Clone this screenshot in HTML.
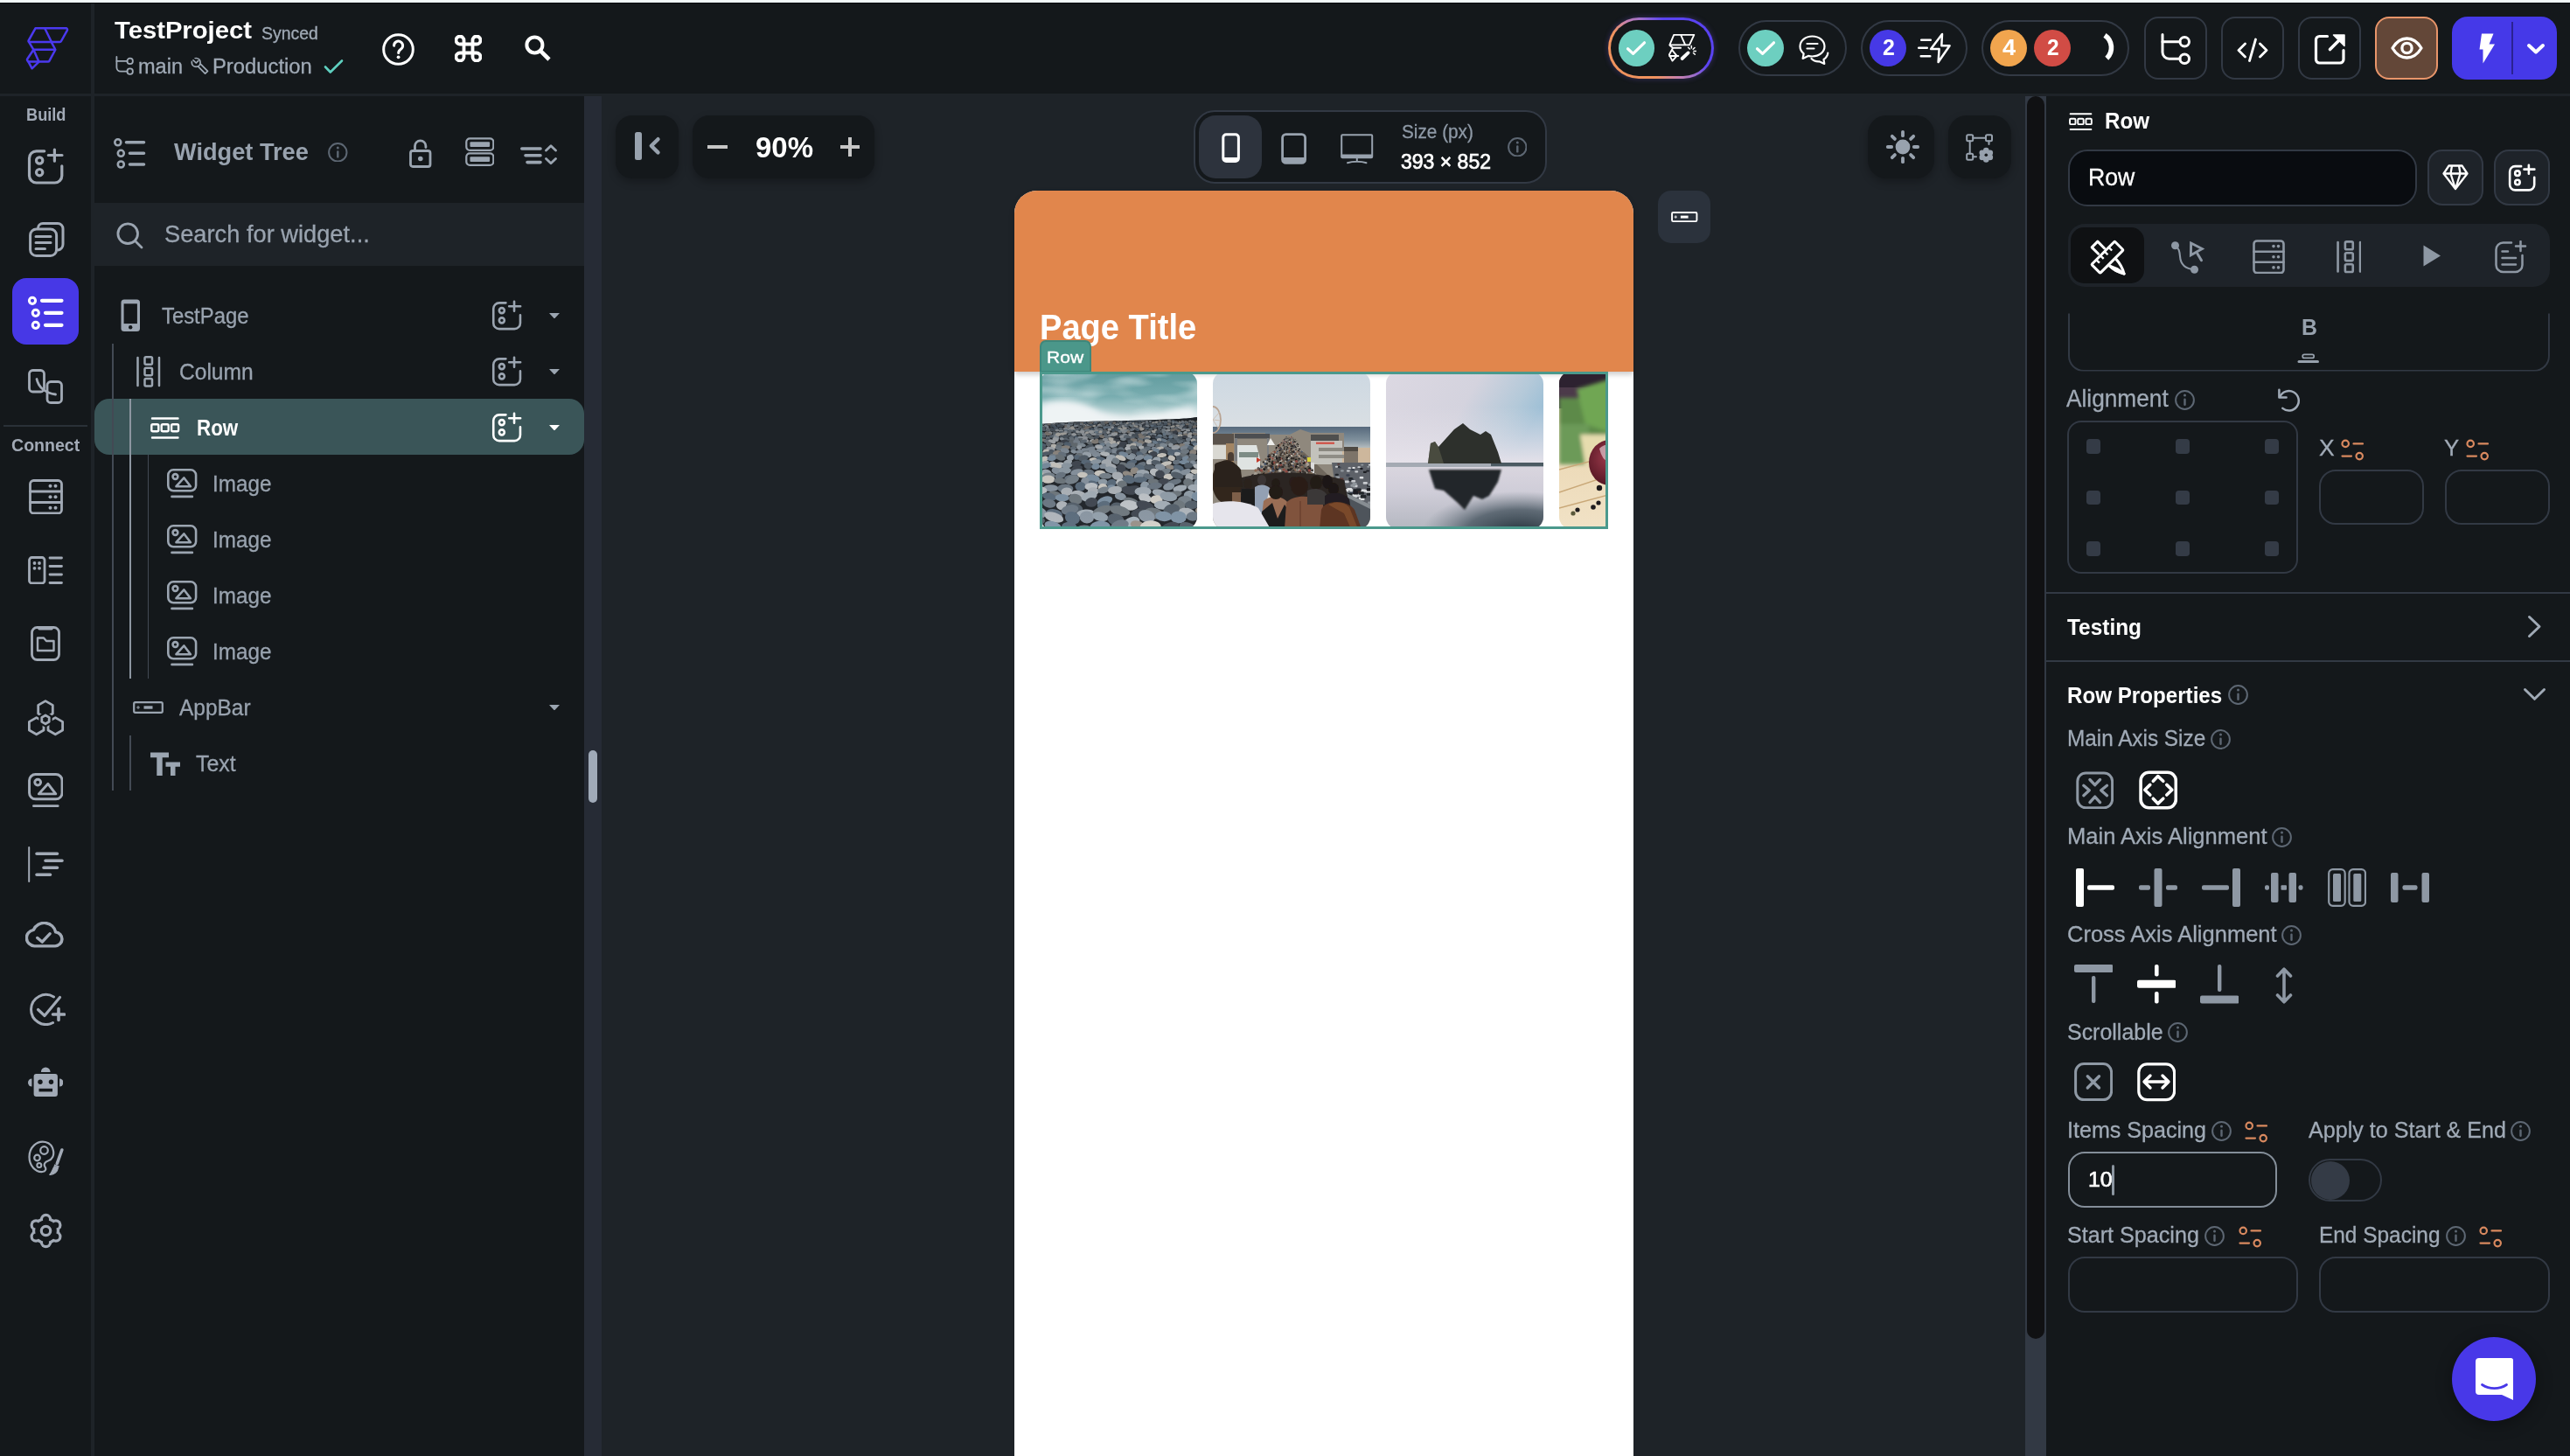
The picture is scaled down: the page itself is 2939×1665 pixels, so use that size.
<!DOCTYPE html>
<html lang="en"><head><meta charset="utf-8"><title>FlutterFlow - TestProject</title>
<style>
html,body{margin:0;padding:0;}
body{width:2939px;height:1665px;overflow:hidden;background:#1e2328;position:relative;font-family:"Liberation Sans",sans-serif;}
.b{position:absolute;box-sizing:border-box;display:block;}
.t{position:absolute;white-space:nowrap;line-height:1;transform-origin:0 50%;}
</style></head>
<body>
<div class="b" style="left:0px;top:0px;width:2939px;height:107px;background:#14181b;"></div>
<div class="b" style="left:0px;top:110px;width:104px;height:1555px;background:#14181b;"></div>
<div class="b" style="left:0px;top:0px;width:104px;height:107px;background:#14181b;"></div>
<div class="b" style="left:104px;top:0px;width:4px;height:107px;background:#1e2328;"></div>
<div class="b" style="left:108px;top:110px;width:560px;height:1555px;background:#14181b;"></div>
<div class="b" style="left:668px;top:110px;width:20px;height:1555px;background:#262b35;"></div>
<div class="b" style="left:2316px;top:110px;width:24px;height:1555px;background:#323944;"></div>
<div class="b" style="left:2340px;top:110px;width:599px;height:1555px;background:#14181b;"></div>
<svg class="b" style="left:0px;top:0px;" width="104" height="107" viewBox="0 0 104 107" fill="none" stroke="#4b39ef" stroke-width="2.5" stroke-linecap="round" stroke-linejoin="round"><path d="M40.5 32.3 H75.5 a1.6 1.6 0 0 1 1.4 2.3 L70 47 a1.8 1.8 0 0 1 -1.6 1 H33.5 a1 1 0 0 1 -0.9 -1.5 Z"/><path d="M51.3 32.5 L58.8 47.8"/><path d="M33.3 48.3 L38.4 56.8 L31.2 67.5 a1.5 1.5 0 0 0 0 1.6 L32.5 70.6 H55 a1.5 1.5 0 0 0 1.3 -0.8 L63 57.5 a1.5 1.5 0 0 0 0 -1.5 L58.8 48.3"/><path d="M38.4 56.8 H63"/><path d="M38.6 57.3 L44.3 70.3"/><path d="M32.6 70.8 L36.6 78.3 L44.3 70.8"/></svg>
<span class="t" style="left:131px;top:21.47px;font-size:28.03px;color:#fff;font-weight:700;transform:scaleX(1.0426);">TestProject</span>
<span class="t" style="left:299.32px;top:28.6px;font-size:19.41px;color:#a0aab6;-webkit-text-stroke:0.3px #a0aab6;transform:scaleX(1.0018);">Synced</span>
<svg class="b" style="left:131.8px;top:63.8px;" width="20.8" height="21.8" viewBox="0 0 20.8 21.8" fill="none" stroke="#a0aab6" stroke-width="1.8" stroke-linecap="round" stroke-linejoin="round"><path d="M1.4 0.9 V13.1 a4.58 4.58 0 0 0 4.58 4.58 H13.45"/><path d="M1.4 5.89 H13.45"/><circle cx="16.68" cy="5.89" r="3.22"/><circle cx="16.68" cy="17.68" r="3.22"/></svg>
<span class="t" style="left:158.16px;top:64.03px;font-size:24.08px;color:#a0aab6;-webkit-text-stroke:0.3px #a0aab6;transform:scaleX(0.9778);">main</span>
<svg class="b" style="left:217.5px;top:64.8px;" width="21" height="20.5" viewBox="0 0 21 20.5" fill="none" stroke="#a0aab6" stroke-width="1.7" stroke-linecap="round" stroke-linejoin="round"><circle cx="6.2" cy="6.4" r="4.9"/><path d="M6.2 6.4 L0.8 1" stroke="#14181b" stroke-width="4.2" stroke-linecap="butt"/><path d="M3 3.8 L6.3 7 L8.9 4.4"/><path d="M8.6 11.2 L16.6 19.2 L19.5 16.3 L11.5 8.3"/></svg>
<span class="t" style="left:243.36px;top:64.03px;font-size:24.08px;color:#a0aab6;-webkit-text-stroke:0.3px #a0aab6;transform:scaleX(0.9880);">Production</span>
<svg class="b" style="left:370px;top:66.5px;" width="23" height="18" viewBox="0 0 23 18" fill="none" stroke="#5fd0c0" stroke-width="2.6" stroke-linecap="round" stroke-linejoin="round"><path d="M2 9.5 L7.8 15.5 L21 2.5"/></svg>
<svg class="b" style="left:437px;top:38px;" width="37" height="37" viewBox="0 0 37 37" fill="none" stroke="#fff" stroke-width="3" stroke-linecap="round" stroke-linejoin="round"><circle cx="18.5" cy="18.5" r="16.8"/><path d="M13.6 14.2 a5 5 0 1 1 7.8 4.1 c-1.8 1.2 -2.7 2 -2.7 4.2"/><circle cx="18.6" cy="27.3" r="1.9" fill="#fff" stroke="none"/></svg>
<svg class="b" style="left:520.2px;top:39.7px;" width="31" height="31" viewBox="0 0 31 31" fill="none" stroke="#fff" stroke-width="3.8" stroke-linecap="round" stroke-linejoin="round"><path d="M10.5 10.5 H20.5 V20.5 H10.5 Z"/><path d="M10.5 10.5 H6.5 a4.5 4.5 0 1 1 4 -4.5 Z"/><path d="M20.5 10.5 V6 a4.5 4.5 0 1 1 4.5 4.5 Z"/><path d="M20.5 20.5 H25 a4.5 4.5 0 1 1 -4.5 4.5 Z"/><path d="M10.5 20.5 V25 a4.5 4.5 0 1 1 -4.5 -4.5 Z"/></svg>
<svg class="b" style="left:600.3px;top:39.8px;" width="30" height="30" viewBox="0 0 30 30" fill="none" stroke="#fff" stroke-width="4" stroke-linecap="round" stroke-linejoin="round"><circle cx="11.4" cy="11.4" r="9"/><path d="M17.8 17.8 L28 28" stroke-width="4.6" stroke-linecap="butt"/></svg>
<div class="b" style="left:1838.5px;top:20.3px;width:121.8px;height:69.6px;border-radius:35px;background:linear-gradient(#14181b,#14181b) padding-box,linear-gradient(47deg,#f0935e 30%,#c681b0 44%,#a070c8 54%,#5a43f2 68%) border-box;border:3px solid transparent;box-shadow:0 0 6px rgba(120,90,230,.35);"></div>
<div class="b" style="left:1850.7px;top:34.4px;width:41.2px;height:41.2px;background:#6dcfc0;border-radius:21px;"></div>
<svg class="b" style="left:1859.3px;top:46px;" width="24" height="18" viewBox="0 0 24 18" fill="none" stroke="#fff" stroke-width="3.2" stroke-linecap="round" stroke-linejoin="round"><path d="M2.5 9.8 L8.6 15.4 L21.5 2.8"/></svg>
<div class="b" style="left:1998.4px;top:34.4px;width:41.2px;height:41.2px;background:#6dcfc0;border-radius:21px;"></div>
<svg class="b" style="left:2007px;top:46px;" width="24" height="18" viewBox="0 0 24 18" fill="none" stroke="#fff" stroke-width="3.2" stroke-linecap="round" stroke-linejoin="round"><path d="M2.5 9.8 L8.6 15.4 L21.5 2.8"/></svg>
<svg class="b" style="left:1907.9px;top:38.7px;" width="32.5" height="32" viewBox="0 0 32.5 32" fill="none" stroke="#fff" stroke-width="1.9" stroke-linecap="round" stroke-linejoin="round"><path d="M6.2 0.9 H29.3 L24 12.4 H1.4 Z M14.1 0.9 L19.2 12.4"/><path d="M1.7 13 L5.1 15.8 H14.1 M5.1 15.8 L0.9 23.5 L4.5 30.6 L9.6 24.8 L4.5 18.6 M1.1 25 H11.3"/><path d="M15.6 28 L22.6 21.4" stroke-width="3.8"/><path d="M26.3 13.5 v2.6 M30 15.5 l-1.8 1.8 M31.5 19.4 h-2.6 M30.3 23.3 l-1.8 -1.8 M22.6 15.2 l1.8 1.8" stroke-width="1.5"/></svg>
<div class="b" style="left:1988px;top:23px;width:123.5px;height:63.5px;border-radius:32px;border:2px solid #323944;"></div>
<svg class="b" style="left:2057px;top:39.5px;" width="36" height="34" viewBox="0 0 36 34" fill="none" stroke="#fff" stroke-width="2.2" stroke-linecap="round" stroke-linejoin="round"><path d="M15.5 1.5 C7.5 1.5 1.5 6.5 1.5 13 c0 3.3 1.6 6.2 4.2 8.3 L4.6 27 l6.3 -3.1 c1.5 .4 3 .6 4.6 .6 c8 0 14 -5 14 -11.5 S23.500 1.5 15.500 1.500 Z"/><path d="M9.500 10 H21.500 M9.500 15.500 H17.500" /><path d="M14.500 27 c2 2.300 5.300 3.500 9 3.300 l5.800 2.600 l-0.800 -5 c2.800 -1.800 4.500 -4.300 4.800 -7.300"/></svg>
<div class="b" style="left:2128px;top:23px;width:121.8px;height:63.5px;border-radius:32px;border:2px solid #323944;"></div>
<div class="b" style="left:2138px;top:34px;width:42px;height:42px;background:#4639e6;border-radius:21px;"></div>
<span class="t" style="left:2153px;top:42.04px;font-size:25.95px;color:#fff;font-weight:700;transform:scaleX(0.9585);">2</span>
<svg class="b" style="left:2193px;top:37px;" width="38.5" height="36" viewBox="0 0 38.5 36" fill="none" stroke="#fff" stroke-width="2.5" stroke-linecap="round" stroke-linejoin="round"><path d="M28 2 L15.1 18.9 H24.6 L23.6 34 L36.6 15.3 H27.3 Z"/><path d="M4.2 8.700 H14.800 M1.200 17.800 H10.800 M3.700 27.300 H14.300"/></svg>
<div class="b" style="left:2266px;top:23px;width:169px;height:63.5px;border-radius:32px;border:2px solid #323944;"></div>
<div class="b" style="left:2276px;top:34px;width:42px;height:42px;background:#f1a54e;border-radius:21px;"></div>
<span class="t" style="left:2289.8px;top:42.04px;font-size:25.95px;color:#fff;font-weight:700;transform:scaleX(1.0485);">4</span>
<div class="b" style="left:2326px;top:34px;width:42px;height:42px;background:#d14c45;border-radius:21px;"></div>
<span class="t" style="left:2340.8px;top:42.04px;font-size:25.95px;color:#fff;font-weight:700;transform:scaleX(0.9446);">2</span>
<svg class="b" style="left:0;top:0" width="2939" height="107" fill="none" stroke="#fff" stroke-width="5.6"><path d="M2407.0 40.4 A17 17 0 0 1 2409.3 66.7"/></svg>
<div class="b" style="left:2452px;top:18.8px;width:72px;height:72px;border-radius:16px;border:2px solid #323944;"></div>
<div class="b" style="left:2540px;top:18.8px;width:72px;height:72px;border-radius:16px;border:2px solid #323944;"></div>
<div class="b" style="left:2628px;top:18.8px;width:72px;height:72px;border-radius:16px;border:2px solid #323944;"></div>
<div class="b" style="left:2716px;top:18.8px;width:72px;height:72px;background:#634738;border-radius:16px;border:2.5px solid #e8956a;"></div>
<div class="b" style="left:2804px;top:18.8px;width:120px;height:72px;background:#4539e8;border-radius:18px;"></div>
<div class="b" style="left:2872px;top:25px;width:2px;height:60px;background:#2a2292;"></div>
<svg class="b" style="left:2470.5px;top:37.8px;" width="34" height="36" viewBox="0 0 34 36" fill="none" stroke="#fff" stroke-width="3" stroke-linecap="round" stroke-linejoin="round"><path d="M2 1.5 V21.75 a7.48 7.48 0 0 0 7.48 7.48 H21.96"/><path d="M2 9.72 H21.96"/><circle cx="27.23" cy="9.72" r="5.27"/><circle cx="27.23" cy="29.23" r="5.27"/></svg>
<svg class="b" style="left:2558px;top:42.5px;" width="36" height="28" viewBox="0 0 36 28" fill="none" stroke="#fff" stroke-width="2.8" stroke-linecap="round" stroke-linejoin="round"><path d="M9.500 7 L2 14.500 L9.500 22 M26.500 7 L34 14.500 L26.500 22 M21.500 2 L14.500 26.500"/></svg>
<svg class="b" style="left:2645.5px;top:37.5px;" width="37" height="37" viewBox="0 0 37 37" fill="none" stroke="#fff" stroke-width="3.2" stroke-linecap="round" stroke-linejoin="round"><path d="M15.500 3.500 H6.500 a4 4 0 0 0 -4 4 V30 a4 4 0 0 0 4 4 H30 a4 4 0 0 0 4 -4 V19.500"/><path d="M18.500 18.500 L32 5" stroke-width="3.6"/><path d="M22.500 2 H35 V14.500 Z" fill="#fff" stroke-width="1.5"/></svg>
<svg class="b" style="left:2733.5px;top:41.5px;" width="37" height="26" viewBox="0 0 37 26" fill="none" stroke="#fff" stroke-width="3.3" stroke-linecap="round" stroke-linejoin="round"><path d="M2 13 C6.500 5.500 12 2 18.500 2 S30.500 5.500 35 13 C30.500 20.500 25 24 18.500 24 S6.500 20.500 2 13 Z"/><circle cx="18.500" cy="13" r="5.600"/></svg>
<svg class="b" style="left:2833px;top:37.5px;" width="22" height="35" viewBox="0 0 22 35" fill="none" stroke="#fff" stroke-width="0" stroke-linecap="round" stroke-linejoin="round"><path d="M5 0.500 H18.500 L13.500 12.500 H20 L6.500 34.500 V18.500 H2.500 Z" fill="#fff" stroke="none"/></svg>
<svg class="b" style="left:2889.5px;top:50px;overflow:visible;" width="20" height="11.5" viewBox="0 0 20 11.5" fill="none" stroke="#fff" stroke-width="4" stroke-linecap="round" stroke-linejoin="round"><path d="M2 2 L10 9.5 L18 2"/></svg>
<span class="t" style="left:29.7px;top:121.72px;font-size:19.51px;color:#a2aab6;font-weight:700;transform:scaleX(0.9329);">Build</span>
<svg class="b" style="left:31.8px;top:170px;overflow:visible;" width="40.5" height="40.5" viewBox="0 0 40 40" fill="none" stroke="#a2aab6" stroke-width="3.16" stroke-linecap="round" stroke-linejoin="round"><path d="M18.5 2.8 H9.5 a8 8 0 0 0 -8 8 V30.5 a8 8 0 0 0 8 8 H30.3 a8 8 0 0 0 8 -8 V19.5"/><path d="M30 1 V14 M23 7.400 H38.500"/><circle cx="13" cy="13.300" r="3.600"/><circle cx="13" cy="26.800" r="3.600"/></svg>
<svg class="b" style="left:33px;top:253.8px;" width="41" height="40.5" viewBox="0 0 41 40.5" fill="none" stroke="#a2aab6" stroke-width="3" stroke-linecap="round" stroke-linejoin="round"><path d="M10.500 7.500 V7 a5.500 5.500 0 0 1 5.500 -5.500 H33 a6 6 0 0 1 6 6 V25 a7 7 0 0 1 -5.500 7"/><rect x="1.600" y="8" width="30" height="30.500" rx="7"/><path d="M8 16.500 H25 M8 23.500 H25 M8 30.500 H18.500"/></svg>
<div class="b" style="left:14px;top:318px;width:76px;height:76px;background:#4738e6;border-radius:16px;"></div>
<svg class="b" style="left:14px;top:318px;" width="76" height="76" viewBox="0 0 76 76" fill="none" stroke="#fff" stroke-width="3" stroke-linecap="round" stroke-linejoin="round"><circle cx="23" cy="25.800" r="3.600"/><circle cx="26.800" cy="39.800" r="3.600"/><circle cx="26.800" cy="53.800" r="3.600"/><path d="M34 25.800 H56.500 M38 39.800 H56.500 M38 53.800 H56.500" stroke-width="4.200"/></svg>
<svg class="b" style="left:32px;top:422.3px;" width="40.5" height="40.5" viewBox="0 0 40.5 40.5" fill="none" stroke="#a2aab6" stroke-width="2.8" stroke-linecap="round" stroke-linejoin="round"><rect x="1.500" y="1.500" width="17" height="24.500" rx="4"/><rect x="22" y="14.500" width="16.500" height="24" rx="4"/><path d="M10 11.500 C12 21 20 27.500 31.500 29"/></svg>
<div class="b" style="left:4px;top:486px;width:96px;height:2px;background:#2a3138;"></div>
<span class="t" style="left:13.2px;top:500.49px;font-size:19.31px;color:#a2aab6;font-weight:700;transform:scaleX(1.0139);">Connect</span>
<svg class="b" style="left:32.8px;top:547.8px;" width="39" height="40.5" viewBox="0 0 39 40.5" fill="none" stroke="#a2aab6" stroke-width="2.8" stroke-linecap="round" stroke-linejoin="round"><rect x="1.500" y="1.500" width="36" height="37.500" rx="4"/><path d="M1.500 14 H37.500 M1.500 26.500 H37.500"/><g fill="#a2aab6" stroke="none"><circle cx="24.500" cy="7.800" r="2"/><circle cx="30.500" cy="7.800" r="2"/><circle cx="24.500" cy="20.200" r="2"/><circle cx="30.500" cy="20.200" r="2"/><circle cx="24.500" cy="32.800" r="2"/><circle cx="30.500" cy="32.800" r="2"/></g></svg>
<svg class="b" style="left:32px;top:635.5px;" width="40.5" height="32.5" viewBox="0 0 40.5 32.5" fill="none" stroke="#a2aab6" stroke-width="2.8" stroke-linecap="round" stroke-linejoin="round"><rect x="1.500" y="1.500" width="17.500" height="29.500" rx="3"/><g fill="#a2aab6" stroke="none"><circle cx="7.500" cy="8" r="1.900"/><circle cx="13" cy="8" r="1.900"/><circle cx="7.500" cy="13.800" r="1.900"/><circle cx="13" cy="13.800" r="1.900"/></g><path d="M25 2 H38.500 M25 11.500 H38.500 M25 21 H38.500 M25 30.500 H38.500"/></svg>
<svg class="b" style="left:35px;top:716px;" width="34" height="40" viewBox="0 0 34 40" fill="none" stroke="#a2aab6" stroke-width="2.8" stroke-linecap="round" stroke-linejoin="round"><rect x="1.500" y="1.500" width="31" height="37" rx="6"/><path d="M10 2.800 H24" stroke-width="3.600"/><path d="M8 13.500 H15 L18 17 H26.500 V28 H8 Z" stroke-width="2.400"/></svg>
<svg class="b" style="left:31.8px;top:799.5px;" width="41.5" height="42" viewBox="0 0 41.5 42" fill="none" stroke="#a2aab6" stroke-width="2.8" stroke-linecap="round" stroke-linejoin="round"><polygon points="20.0,1.6 28.3,6.4 28.3,16.0 20.0,20.8 11.7,16.0 11.7,6.4"/><polygon points="9.7,20.6 18.0,25.4 18.0,35.0 9.7,39.8 1.4,35.0 1.4,25.4"/><polygon points="31.3,20.6 39.6,25.4 39.6,35.0 31.3,39.8 23.0,35.0 23.0,25.4"/><polygon points="20.0,18.0 24.2,20.4 24.2,25.3 20.0,27.8 15.8,25.4 15.8,20.4" fill="#14181b" stroke="#14181b" stroke-width="7"/><polygon points="20.0,18.0 24.2,20.4 24.2,25.3 20.0,27.8 15.8,25.4 15.8,20.4" fill="#14181b"/></svg>
<svg class="b" style="left:31.8px;top:884.2px;" width="40.6" height="39.42" viewBox="0 0 34.5 33.5" fill="none" stroke="#a2aab6" stroke-width="2.5" stroke-linecap="round" stroke-linejoin="round"><rect x="1.3" y="1.3" width="31.9" height="24" rx="6"/><circle cx="9.5" cy="9" r="2.9"/><path d="M10.5 20.3 L19.5 10.5 L27 20.3 Z"/><path d="M5.5 32 H29"/></svg>
<svg class="b" style="left:31.5px;top:967.5px;" width="41" height="41" viewBox="0 0 41 41" fill="none" stroke="#a2aab6" stroke-width="3" stroke-linecap="round" stroke-linejoin="round"><path d="M1.200 1 V40" stroke-width="2"/><path d="M10 8.200 H33.500 M20 16.300 H39 M18 24.200 H33.500 M10 32.300 H25.500" stroke-width="3.600"/></svg>
<svg class="b" style="left:29.2px;top:1054.3px;" width="46" height="31" viewBox="0 0 46 31" fill="none" stroke="#a2aab6" stroke-width="3.2" stroke-linecap="round" stroke-linejoin="round"><g transform="translate(-2.2,-0.8) scale(1.1,1.04)"><path d="M11.500 27.500 a9 9 0 0 1 -1 -17.800 a12 12 0 0 1 23 2.500 a7.700 7.700 0 0 1 -0.500 15.300 Z"/><path d="M14.500 18.500 L19.500 23 L27.500 14" stroke-width="3.200"/></g></svg>
<svg class="b" style="left:33.5px;top:1135px;" width="41.5" height="38" viewBox="0 0 41.5 38" fill="none" stroke="#a2aab6" stroke-width="3" stroke-linecap="round" stroke-linejoin="round"><path d="M27.500 5 a17 17 0 1 0 -1 29.500"/><path d="M9.500 19.500 L17 26.500 L34.500 5.500" stroke-width="3.200"/><path d="M33 18.500 V31.500 M26.500 25 H39.500" stroke-width="3.600"/></svg>
<svg class="b" style="left:31.8px;top:1219.5px;" width="40.5" height="36.5" viewBox="0 0 40.5 36.5" fill="none" stroke="#a2aab6" stroke-width="0" stroke-linecap="round" stroke-linejoin="round"><g fill="#a2aab6" stroke="none"><circle cx="20.200" cy="5.800" r="5.300"/><circle cx="4.500" cy="18" r="4.500"/><circle cx="36" cy="18" r="4.500"/></g><rect x="5.500" y="7" width="29.500" height="28" rx="4" fill="#a2aab6" stroke="#14181b" stroke-width="2.200"/><g fill="#14181b" stroke="none"><circle cx="14" cy="17.300" r="2.700"/><circle cx="26.500" cy="17.300" r="2.700"/><rect x="12.500" y="24.800" width="15.500" height="3.600"/></g></svg>
<svg class="b" style="left:31.5px;top:1303.5px;" width="41" height="41" viewBox="0 0 41 41" fill="none" stroke="#a2aab6" stroke-width="2.2" stroke-linecap="round" stroke-linejoin="round"><path d="M20 2 C10 0 1.500 8 1.500 19 C1.500 29 8.500 36.500 16.500 36 c4 -0.300 4.500 -3.500 3 -5.500 c-2 -3 0 -6 3.500 -7 C28 22 30 17 29 12 C28 6.500 24.500 3 20 2 Z" stroke-width="2.200"/><circle cx="18.500" cy="11.500" r="4.300" stroke-width="2.200"/><circle cx="10.500" cy="20" r="3.300" stroke-width="2.200"/><circle cx="12.800" cy="28.500" r="2.500" stroke-width="2"/><path d="M38.800 11 L33.300 26.500" stroke-width="3.600"/><path d="M30.500 28.300 L35 30" stroke-width="1.500"/><path d="M30.300 29.500 L34.500 31 C34 36 30 39.500 24.800 39.300 C27.500 37 27.800 33 30.300 29.500 Z" fill="#a2aab6" stroke-width="1.200"/></svg>
<svg class="b" style="left:31.7px;top:1387.3px;" width="41" height="41" viewBox="0 0 41 41" fill="none" stroke="#a2aab6" stroke-width="3" stroke-linecap="round" stroke-linejoin="round"><circle cx="20.500" cy="20.500" r="15.6" fill="#a2aab6" stroke="none"/><circle cx="20.5" cy="33.7" r="6.6" fill="#a2aab6" stroke="none"/><circle cx="9.1" cy="27.1" r="6.6" fill="#a2aab6" stroke="none"/><circle cx="9.1" cy="13.9" r="6.6" fill="#a2aab6" stroke="none"/><circle cx="20.5" cy="7.3" r="6.6" fill="#a2aab6" stroke="none"/><circle cx="31.9" cy="13.9" r="6.6" fill="#a2aab6" stroke="none"/><circle cx="31.9" cy="27.1" r="6.6" fill="#a2aab6" stroke="none"/><circle cx="20.500" cy="20.500" r="12.3" fill="#14181b" stroke="none"/><circle cx="20.5" cy="33.5" r="3.5" fill="#14181b" stroke="none"/><circle cx="9.2" cy="27.0" r="3.5" fill="#14181b" stroke="none"/><circle cx="9.2" cy="14.0" r="3.5" fill="#14181b" stroke="none"/><circle cx="20.5" cy="7.5" r="3.5" fill="#14181b" stroke="none"/><circle cx="31.8" cy="14.0" r="3.5" fill="#14181b" stroke="none"/><circle cx="31.8" cy="27.0" r="3.5" fill="#14181b" stroke="none"/><circle cx="20.500" cy="20.500" r="5.200" stroke-width="3.200"/></svg>
<svg class="b" style="left:129.6px;top:158.4px;" width="37" height="35" viewBox="0 0 37 35" fill="none" stroke="#9ba5b1" stroke-width="2.6" stroke-linecap="round" stroke-linejoin="round"><circle cx="4.800" cy="4.800" r="3.500"/><circle cx="8.300" cy="17.300" r="3.500"/><circle cx="8.300" cy="30" r="3.500"/><path d="M14.500 4.800 H34.500 M18.500 17.300 H34.500 M18.500 30 H34.500" stroke-width="3.600"/></svg>
<span class="t" style="left:199px;top:160.25px;font-size:27.82px;color:#99a3af;font-weight:700;transform:scaleX(0.9773);">Widget Tree</span>
<svg class="b" style="left:375px;top:162.7px;" width="22.6" height="22.6" viewBox="0 0 22.6 22.6" fill="none" stroke="#5d6773" stroke-width="2" stroke-linecap="round" stroke-linejoin="round"><circle cx="11.3" cy="11.3" r="10.2"/><path d="M11.3 10.5 v5.88" stroke-width="2.4"/><circle cx="11.3" cy="5.88" r="1.5" fill="#5d6773" stroke="none"/></svg>
<svg class="b" style="left:468.4px;top:158.7px;" width="25.5" height="33.5" viewBox="0 0 25.5 33.5" fill="none" stroke="#9ba5b1" stroke-width="2.8" stroke-linecap="round" stroke-linejoin="round"><rect x="1.500" y="13.500" width="22.500" height="18" rx="2.500"/><path d="M6.500 13.500 V8 a6.200 6.200 0 0 1 12.400 0 V9.500"/><circle cx="12.800" cy="22.500" r="2.800" fill="#9ba5b1" stroke="none"/></svg>
<svg class="b" style="left:531.6px;top:157.3px;" width="33.6" height="33.2" viewBox="0 0 33.6 33.2" fill="none" stroke="#9ba5b1" stroke-width="2.2" stroke-linecap="round" stroke-linejoin="round"><rect x="1.300" y="1.300" width="31" height="13.600" rx="4"/><rect x="1.300" y="18.300" width="31" height="13.600" rx="4"/><rect x="5.500" y="5.300" width="22.600" height="5.600" rx="1" fill="#9ba5b1" stroke="none"/><rect x="5.500" y="22.300" width="22.600" height="5.600" rx="1" fill="#9ba5b1" stroke="none"/></svg>
<svg class="b" style="left:595.3px;top:164.6px;" width="42.5" height="24" viewBox="0 0 42.5 24" fill="none" stroke="#9ba5b1" stroke-width="3" stroke-linecap="round" stroke-linejoin="round"><path d="M1.800 5 H23 M6 12.800 H23 M8 20.600 H23" stroke-width="3.600"/><path d="M29.500 7 L35 1.800 L40.500 7 M29.500 16.500 L35 21.800 L40.500 16.500" stroke-width="2.800"/></svg>
<div class="b" style="left:108px;top:232px;width:560px;height:72px;background:#1e2328;"></div>
<svg class="b" style="left:132.5px;top:254px;" width="31" height="31" viewBox="0 0 31 31" fill="none" stroke="#9ba5b1" stroke-width="2.8" stroke-linecap="round" stroke-linejoin="round"><circle cx="13.200" cy="13.200" r="11.300"/><path d="M21.500 21.500 L29 29"/></svg>
<span class="t" style="left:187.8px;top:253.33px;font-size:28.55px;color:#99a3af;-webkit-text-stroke:0.3px #99a3af;transform:scaleX(0.9548);">Search for widget...</span>
<div class="b" style="left:108px;top:456px;width:560px;height:64px;background:#3a5558;border-radius:17px;"></div>
<div class="b" style="left:128.3px;top:392.5px;width:1.6px;height:511.5px;background:#434a54;"></div>
<div class="b" style="left:148px;top:456px;width:1.8px;height:320px;background:#8d96a1;"></div>
<div class="b" style="left:168.5px;top:520px;width:1.6px;height:256px;background:#434a54;"></div>
<div class="b" style="left:148.2px;top:840.5px;width:1.6px;height:63.5px;background:#434a54;"></div>
<svg class="b" style="left:138px;top:341.5px;" width="22.5" height="37.5" viewBox="0 0 22.5 37.5" fill="none" stroke="#9ba5b1" stroke-width="0" stroke-linecap="round" stroke-linejoin="round"><rect x="0.500" y="0.500" width="21.500" height="36.500" rx="3.500" fill="#9ba5b1" stroke="none"/><rect x="3.600" y="5.300" width="15.300" height="22.800" fill="#14181b" stroke="none"/><circle cx="11.200" cy="32.300" r="2.200" fill="#14181b" stroke="none"/></svg>
<span class="t" style="left:185.41px;top:348.78px;font-size:25.43px;color:#99a3af;-webkit-text-stroke:0.3px #99a3af;transform:scaleX(0.9383);">TestPage</span>
<svg class="b" style="left:156.3px;top:407.2px;" width="27.5" height="36" viewBox="0 0 27.5 36" fill="none" stroke="#9ba5b1" stroke-width="2.5" stroke-linecap="round" stroke-linejoin="round"><path d="M1.5 2 V34 M26 2 V34"/><rect x="9.5" y="1.3" width="8.5" height="8.5" rx="1.5"/><rect x="9.5" y="13.7" width="8.5" height="8.5" rx="1.5"/><rect x="9.5" y="26.1" width="8.5" height="8.5" rx="1.5"/></svg>
<span class="t" style="left:204.61px;top:412.78px;font-size:25.43px;color:#99a3af;-webkit-text-stroke:0.3px #99a3af;transform:scaleX(0.9664);">Column</span>
<svg class="b" style="left:172px;top:476.8px;" width="33.5" height="25" viewBox="0 0 33.5 25" fill="none" stroke="#fff" stroke-width="2.4" stroke-linecap="round" stroke-linejoin="round"><path d="M2 1.5 H31.5 M2 23.5 H31.5"/><rect x="1.3" y="8.3" width="8" height="8" rx="1.5"/><rect x="12.7" y="8.3" width="8" height="8" rx="1.5"/><rect x="24.1" y="8.3" width="8" height="8" rx="1.5"/></svg>
<span class="t" style="left:224.7px;top:476.78px;font-size:25.43px;color:#fff;font-weight:700;transform:scaleX(0.8797);">Row</span>
<svg class="b" style="left:563.2px;top:344.1px;overflow:visible;" width="33.4" height="33.4" viewBox="0 0 40 40" fill="none" stroke="#9ba5b1" stroke-width="3.11" stroke-linecap="round" stroke-linejoin="round"><path d="M18.5 2.8 H9.5 a8 8 0 0 0 -8 8 V30.5 a8 8 0 0 0 8 8 H30.3 a8 8 0 0 0 8 -8 V19.5"/><path d="M30 1 V14 M23 7.400 H38.500"/><circle cx="13" cy="13.300" r="3.600"/><circle cx="13" cy="26.800" r="3.600"/></svg>
<svg class="b" style="left:627.8px;top:357.7px;" width="12" height="6.5" viewBox="0 0 12 6.5" fill="none" stroke="#9ba5b1" stroke-width="0" stroke-linecap="round" stroke-linejoin="round"><path d="M0 0 H12 L6 6.5 Z" fill="#9ba5b1" stroke="none"/></svg>
<svg class="b" style="left:563.2px;top:408.1px;overflow:visible;" width="33.4" height="33.4" viewBox="0 0 40 40" fill="none" stroke="#9ba5b1" stroke-width="3.11" stroke-linecap="round" stroke-linejoin="round"><path d="M18.5 2.8 H9.5 a8 8 0 0 0 -8 8 V30.5 a8 8 0 0 0 8 8 H30.3 a8 8 0 0 0 8 -8 V19.5"/><path d="M30 1 V14 M23 7.400 H38.500"/><circle cx="13" cy="13.300" r="3.600"/><circle cx="13" cy="26.800" r="3.600"/></svg>
<svg class="b" style="left:627.8px;top:421.7px;" width="12" height="6.5" viewBox="0 0 12 6.5" fill="none" stroke="#9ba5b1" stroke-width="0" stroke-linecap="round" stroke-linejoin="round"><path d="M0 0 H12 L6 6.5 Z" fill="#9ba5b1" stroke="none"/></svg>
<svg class="b" style="left:563.2px;top:472.1px;overflow:visible;" width="33.4" height="33.4" viewBox="0 0 40 40" fill="none" stroke="#fff" stroke-width="3.11" stroke-linecap="round" stroke-linejoin="round"><path d="M18.5 2.8 H9.5 a8 8 0 0 0 -8 8 V30.5 a8 8 0 0 0 8 8 H30.3 a8 8 0 0 0 8 -8 V19.5"/><path d="M30 1 V14 M23 7.400 H38.500"/><circle cx="13" cy="13.300" r="3.600"/><circle cx="13" cy="26.800" r="3.600"/></svg>
<svg class="b" style="left:627.8px;top:485.7px;" width="12" height="6.5" viewBox="0 0 12 6.5" fill="none" stroke="#fff" stroke-width="0" stroke-linecap="round" stroke-linejoin="round"><path d="M0 0 H12 L6 6.5 Z" fill="#fff" stroke="none"/></svg>
<svg class="b" style="left:191.4px;top:536.4px;" width="34.4" height="33.4" viewBox="0 0 34.5 33.5" fill="none" stroke="#9ba5b1" stroke-width="2.6" stroke-linecap="round" stroke-linejoin="round"><rect x="1.3" y="1.3" width="31.9" height="24" rx="6"/><circle cx="9.5" cy="9" r="2.9"/><path d="M10.5 20.3 L19.5 10.5 L27 20.3 Z"/><path d="M5.5 32 H29"/></svg>
<span class="t" style="left:242.81px;top:540.78px;font-size:25.43px;color:#99a3af;-webkit-text-stroke:0.3px #99a3af;transform:scaleX(0.9534);">Image</span>
<svg class="b" style="left:191.4px;top:600.4px;" width="34.4" height="33.4" viewBox="0 0 34.5 33.5" fill="none" stroke="#9ba5b1" stroke-width="2.6" stroke-linecap="round" stroke-linejoin="round"><rect x="1.3" y="1.3" width="31.9" height="24" rx="6"/><circle cx="9.5" cy="9" r="2.9"/><path d="M10.5 20.3 L19.5 10.5 L27 20.3 Z"/><path d="M5.5 32 H29"/></svg>
<span class="t" style="left:242.81px;top:604.78px;font-size:25.43px;color:#99a3af;-webkit-text-stroke:0.3px #99a3af;transform:scaleX(0.9534);">Image</span>
<svg class="b" style="left:191.4px;top:664.4px;" width="34.4" height="33.4" viewBox="0 0 34.5 33.5" fill="none" stroke="#9ba5b1" stroke-width="2.6" stroke-linecap="round" stroke-linejoin="round"><rect x="1.3" y="1.3" width="31.9" height="24" rx="6"/><circle cx="9.5" cy="9" r="2.9"/><path d="M10.5 20.3 L19.5 10.5 L27 20.3 Z"/><path d="M5.5 32 H29"/></svg>
<span class="t" style="left:242.81px;top:668.78px;font-size:25.43px;color:#99a3af;-webkit-text-stroke:0.3px #99a3af;transform:scaleX(0.9534);">Image</span>
<svg class="b" style="left:191.4px;top:728.4px;" width="34.4" height="33.4" viewBox="0 0 34.5 33.5" fill="none" stroke="#9ba5b1" stroke-width="2.6" stroke-linecap="round" stroke-linejoin="round"><rect x="1.3" y="1.3" width="31.9" height="24" rx="6"/><circle cx="9.5" cy="9" r="2.9"/><path d="M10.5 20.3 L19.5 10.5 L27 20.3 Z"/><path d="M5.5 32 H29"/></svg>
<span class="t" style="left:242.81px;top:732.78px;font-size:25.43px;color:#99a3af;-webkit-text-stroke:0.3px #99a3af;transform:scaleX(0.9534);">Image</span>
<svg class="b" style="left:152px;top:802.4px;" width="35" height="14" viewBox="0 0 35 14" fill="none" stroke="#9ba5b1" stroke-width="2.2" stroke-linecap="round" stroke-linejoin="round"><rect x="1.2" y="1.2" width="32.6" height="11.6" rx="1.5"/><rect x="12.5" y="5.3" width="10" height="3.4" fill="#9ba5b1" stroke="none"/><path d="M4.5 7 h3 M6 5.5 v3" stroke-width="1"/></svg>
<span class="t" style="left:204.61px;top:796.78px;font-size:25.43px;color:#99a3af;-webkit-text-stroke:0.3px #99a3af;transform:scaleX(0.9618);">AppBar</span>
<svg class="b" style="left:627.8px;top:805.7px;" width="12" height="6.5" viewBox="0 0 12 6.5" fill="none" stroke="#9ba5b1" stroke-width="0" stroke-linecap="round" stroke-linejoin="round"><path d="M0 0 H12 L6 6.5 Z" fill="#9ba5b1" stroke="none"/></svg>
<svg class="b" style="left:172px;top:860px;" width="34.5" height="27.5" viewBox="0 0 34.5 27.5" fill="none" stroke="#9ba5b1" stroke-width="0" stroke-linecap="round" stroke-linejoin="round"><path d="M0 0.500 H21 V6.300 H13.700 V27 H7.300 V6.300 H0 Z M17.500 11.500 H34 V16.800 H28.500 V27 H23 V16.800 H17.500 Z" fill="#9ba5b1" stroke="none"/></svg>
<span class="t" style="left:223.81px;top:860.78px;font-size:25.43px;color:#99a3af;-webkit-text-stroke:0.3px #99a3af;transform:scaleX(0.9815);">Text</span>
<div class="b" style="left:673px;top:857.5px;width:10px;height:60.3px;background:#a0aab8;border-radius:5px;"></div>
<div class="b" style="left:704.3px;top:132px;width:71.6px;height:71.6px;background:#14181b;border-radius:19px;box-shadow:0 4px 10px rgba(0,0,0,.28);"></div>
<div class="b" style="left:726px;top:151.4px;width:8px;height:31.2px;background:#98a2ae;border-radius:2.5px;"></div>
<svg class="b" style="left:741px;top:156px;" width="15" height="22" viewBox="0 0 15 22" fill="none" stroke="#98a2ae" stroke-width="4.4" stroke-linecap="round" stroke-linejoin="round"><path d="M11.500 3.200 L3.800 10.800 L11.500 18.400"/></svg>
<div class="b" style="left:792px;top:132px;width:208px;height:71.6px;background:#14181b;border-radius:19px;box-shadow:0 4px 10px rgba(0,0,0,.28);"></div>
<div class="b" style="left:808.6px;top:166.2px;width:23px;height:3.5px;background:#c6c6c6;"></div>
<div class="b" style="left:960.8px;top:166.4px;width:22.2px;height:3.5px;background:#c6c6c6;"></div>
<div class="b" style="left:970.2px;top:157px;width:3.5px;height:22.4px;background:#c6c6c6;"></div>
<span class="t" style="left:863.7px;top:153.24px;font-size:32.9px;color:#fff;font-weight:700;transform:scaleX(1.0026);">90%</span>
<div class="b" style="left:1365.3px;top:126px;width:404.2px;height:83.6px;background:#14181b;border-radius:24px;border:2px solid #323944;"></div>
<div class="b" style="left:1371.3px;top:132px;width:72px;height:71.8px;background:#2d333d;border-radius:19px;"></div>
<svg class="b" style="left:1396.5px;top:152px;" width="21.2" height="34.5" viewBox="0 0 21.2 34.5" fill="none" stroke="#fff" stroke-width="3" stroke-linecap="round" stroke-linejoin="round"><rect x="1.800" y="1.800" width="17.600" height="30.600" rx="3.500"/><path d="M2 28.500 H19.500 V30 a2.500 2.500 0 0 1 -2.500 2.500 H4.500 a2.500 2.500 0 0 1 -2.500 -2.500 Z" fill="#fff" stroke-width="1"/></svg>
<svg class="b" style="left:1464.8px;top:151.8px;" width="29.2" height="36" viewBox="0 0 29.2 36" fill="none" stroke="#98a2ae" stroke-width="2.8" stroke-linecap="round" stroke-linejoin="round"><rect x="1.600" y="1.600" width="26" height="32.800" rx="4"/><path d="M2 28.500 H27.500 V30.500 a3.500 3.500 0 0 1 -3.500 3.500 H5.500 a3.500 3.500 0 0 1 -3.500 -3.500 Z" fill="#98a2ae" stroke-width="1"/></svg>
<svg class="b" style="left:1533px;top:152.8px;" width="37.5" height="35" viewBox="0 0 37.5 35" fill="none" stroke="#98a2ae" stroke-width="2.4" stroke-linecap="round" stroke-linejoin="round"><rect x="1.200" y="1.200" width="35" height="26" rx="1" stroke-width="2"/><path d="M1.500 24 H36 V27 H1.500 Z" fill="#98a2ae" stroke-width="1"/><path d="M18.800 27 V31.500 M8 33.200 C14 31.200 23.500 31.200 29.500 33.200" stroke-width="2"/></svg>
<span class="t" style="left:1602.72px;top:139.82px;font-size:22.21px;color:#8e99a6;-webkit-text-stroke:0.3px #8e99a6;transform:scaleX(0.9347);">Size (px)</span>
<span class="t" style="left:1602.48px;top:174.34px;font-size:23.36px;color:#fff;-webkit-text-stroke:0.7px #fff;transform:scaleX(0.9848);">393 × 852</span>
<svg class="b" style="left:1723.5px;top:156.9px;" width="22.6" height="22.6" viewBox="0 0 22.6 22.6" fill="none" stroke="#5d6773" stroke-width="2" stroke-linecap="round" stroke-linejoin="round"><circle cx="11.3" cy="11.3" r="10.2"/><path d="M11.3 10.5 v5.88" stroke-width="2.4"/><circle cx="11.3" cy="5.88" r="1.5" fill="#5d6773" stroke="none"/></svg>
<div class="b" style="left:2136px;top:132px;width:76px;height:71.5px;background:#14181b;border-radius:21px;box-shadow:0 4px 10px rgba(0,0,0,.28);"></div>
<div class="b" style="left:2228px;top:132px;width:72px;height:71.5px;background:#14181b;border-radius:21px;box-shadow:0 4px 10px rgba(0,0,0,.28);"></div>
<svg class="b" style="left:2156px;top:147.9px;" width="40" height="40" viewBox="0 0 40 40" fill="none" stroke="#98a2ae" stroke-width="3.8" stroke-linecap="round" stroke-linejoin="round"><circle cx="20" cy="20" r="8.400" fill="#98a2ae" stroke="none"/><path d="M32.8 20.0 L37.2 20.0"/><path d="M29.1 29.1 L32.2 32.2"/><path d="M20.0 32.8 L20.0 37.2"/><path d="M10.9 29.1 L7.8 32.2"/><path d="M7.2 20.0 L2.8 20.0"/><path d="M10.9 10.9 L7.8 7.8"/><path d="M20.0 7.2 L20.0 2.8"/><path d="M29.1 10.9 L32.2 7.8"/></svg>
<svg class="b" style="left:2248.2px;top:152.9px;" width="33" height="33" viewBox="0 0 33 33" fill="none" stroke="#98a2ae" stroke-width="2" stroke-linecap="round" stroke-linejoin="round"><rect x="1.200" y="1.200" width="7" height="7" rx="1.500"/><rect x="23" y="1.200" width="7" height="7" rx="1.500"/><rect x="1.200" y="22.800" width="7" height="7" rx="1.500"/><path d="M8.200 4.700 H23 M4.700 8.200 V22.800 M26.500 8.200 V12 M8.200 26.300 H12"/><g transform="translate(23.300,24.300)" fill="#98a2ae" stroke="none"><circle cx="0.0" cy="5.2" r="3.300"/><circle cx="-4.5" cy="2.6" r="3.300"/><circle cx="-4.5" cy="-2.6" r="3.300"/><circle cx="-0.0" cy="-5.2" r="3.300"/><circle cx="4.5" cy="-2.6" r="3.300"/><circle cx="4.5" cy="2.6" r="3.300"/><circle cx="0" cy="0" r="5.500"/><circle cx="0" cy="0" r="1.800" fill="#14181b"/></g></svg>
<div class="b" style="left:1160px;top:217.7px;width:707.6px;height:1460px;background:#fff;border-radius:26px 26px 0 0;"></div>
<div class="b" style="left:1160px;top:217.7px;width:707.6px;height:207px;background:#e1864c;border-radius:26px 26px 0 0;box-shadow:0 3px 6px rgba(0,0,0,.22);"></div>
<span class="t" style="left:1188.5px;top:353.31px;font-size:41.52px;color:#fff;font-weight:700;transform:scaleX(0.9171);">Page Title</span>
<svg class="b" style="left:1189px;top:425px" width="180" height="180" viewBox="0 0 180 180"><defs><clipPath id="pc0"><rect x="0" y="0" width="180" height="180" rx="14"/></clipPath><linearGradient id="sea" x1="0" y1="0" x2="0" y2="1"><stop offset="0" stop-color="#5f9a9d"/><stop offset=".45" stop-color="#79adb0"/><stop offset=".8" stop-color="#c4d9db"/><stop offset="1" stop-color="#dde8ea"/></linearGradient><filter id="foam" x="0" y="0" width="100%" height="100%"><feTurbulence type="fractalNoise" baseFrequency="0.018 0.06" numOctaves="2" seed="5"/><feColorMatrix type="matrix" values="0 0 0 0 .92  0 0 0 0 .96  0 0 0 0 .97  0 0 2.4 0 -0.95"/></filter><filter id="b3"><feGaussianBlur stdDeviation="3.5"/></filter><filter id="b05"><feGaussianBlur stdDeviation="0.35"/></filter><linearGradient id="shade" x1="0" y1="0" x2="0" y2="1"><stop offset="0" stop-color="#15181b" stop-opacity=".45"/><stop offset=".35" stop-color="#15181b" stop-opacity=".12"/><stop offset="1" stop-color="#15181b" stop-opacity="0"/></linearGradient><clipPath id="pebc"><path d="M0 60 C40 56 80 57 120 55.500 S165 54 180 52 V180 H0 Z"/></clipPath></defs><g clip-path="url(#pc0)"><rect width="180" height="64" fill="url(#sea)"/><rect width="180" height="64" filter="url(#foam)" opacity=".55"/><path d="M0 40 C14 30 38 30 62 42 S112 54 146 45 S174 44 180 47 V66 H0 Z" fill="#eef3f4" filter="url(#b3)"/><g clip-path="url(#pebc)"><rect y="50" width="180" height="130" fill="#24282d"/><g filter="url(#b05)"><ellipse cx="-0.9" cy="56.5" rx="2.1" ry="1.3" fill="#8e9aa6" transform="rotate(19 -0.9 56.5)"/><ellipse cx="3.1" cy="57.6" rx="2.1" ry="1.2" fill="#59646e" transform="rotate(2 3.1 57.6)"/><ellipse cx="7.1" cy="56.5" rx="1.6" ry="1.2" fill="#59646e" transform="rotate(-17 7.1 56.5)"/><ellipse cx="10.3" cy="56.8" rx="1.5" ry="1.3" fill="#444c55" transform="rotate(11 10.3 56.8)"/><ellipse cx="13.0" cy="57.2" rx="2.4" ry="1.4" fill="#59646e" transform="rotate(-16 13.0 57.2)"/><ellipse cx="17.7" cy="56.9" rx="2.4" ry="1.0" fill="#a9b3bc" transform="rotate(1 17.7 56.9)"/><ellipse cx="22.3" cy="57.6" rx="2.0" ry="1.4" fill="#d6d3cc" transform="rotate(-13 22.3 57.6)"/><ellipse cx="26.3" cy="57.1" rx="1.9" ry="1.1" fill="#9b948c" transform="rotate(4 26.3 57.1)"/><ellipse cx="29.8" cy="56.5" rx="2.1" ry="1.0" fill="#737b82" transform="rotate(6 29.8 56.5)"/><ellipse cx="33.6" cy="57.3" rx="1.8" ry="1.3" fill="#6f7c88" transform="rotate(-9 33.6 57.3)"/><ellipse cx="37.0" cy="57.4" rx="1.8" ry="1.2" fill="#a9b3bc" transform="rotate(-18 37.0 57.4)"/><ellipse cx="40.6" cy="56.6" rx="1.9" ry="1.2" fill="#444c55" transform="rotate(-18 40.6 56.6)"/><ellipse cx="44.0" cy="56.6" rx="2.1" ry="1.3" fill="#6f7c88" transform="rotate(7 44.0 56.6)"/><ellipse cx="47.6" cy="57.2" rx="1.7" ry="1.1" fill="#8e9aa6" transform="rotate(0 47.6 57.2)"/><ellipse cx="50.8" cy="57.3" rx="1.8" ry="1.2" fill="#96a3ae" transform="rotate(0 50.8 57.3)"/><ellipse cx="54.5" cy="56.8" rx="1.6" ry="1.4" fill="#59646e" transform="rotate(10 54.5 56.8)"/><ellipse cx="57.4" cy="57.6" rx="2.1" ry="1.4" fill="#737b82" transform="rotate(-6 57.4 57.6)"/><ellipse cx="61.1" cy="57.2" rx="1.5" ry="1.0" fill="#7d8891" transform="rotate(19 61.1 57.2)"/><ellipse cx="63.9" cy="57.4" rx="1.5" ry="1.1" fill="#96a3ae" transform="rotate(-8 63.9 57.4)"/><ellipse cx="66.6" cy="57.0" rx="2.2" ry="1.2" fill="#7d8891" transform="rotate(-9 66.6 57.0)"/><ellipse cx="71.0" cy="56.7" rx="2.4" ry="1.0" fill="#96a3ae" transform="rotate(-18 71.0 56.7)"/><ellipse cx="75.3" cy="56.9" rx="2.3" ry="1.3" fill="#737b82" transform="rotate(-11 75.3 56.9)"/><ellipse cx="79.5" cy="57.3" rx="1.7" ry="1.3" fill="#a9b3bc" transform="rotate(2 79.5 57.3)"/><ellipse cx="82.6" cy="57.0" rx="1.6" ry="1.0" fill="#8e9aa6" transform="rotate(2 82.6 57.0)"/><ellipse cx="85.7" cy="57.4" rx="2.4" ry="1.4" fill="#444c55" transform="rotate(-2 85.7 57.4)"/><ellipse cx="89.9" cy="57.1" rx="1.9" ry="1.0" fill="#7d8891" transform="rotate(5 89.9 57.1)"/><ellipse cx="93.4" cy="56.5" rx="1.6" ry="1.3" fill="#8e9aa6" transform="rotate(11 93.4 56.5)"/><ellipse cx="96.6" cy="57.4" rx="2.4" ry="1.2" fill="#444c55" transform="rotate(11 96.6 57.4)"/><ellipse cx="101.2" cy="57.4" rx="1.6" ry="1.1" fill="#5f6f80" transform="rotate(1 101.2 57.4)"/><ellipse cx="104.3" cy="57.3" rx="1.6" ry="1.2" fill="#444c55" transform="rotate(3 104.3 57.3)"/><ellipse cx="107.1" cy="56.7" rx="1.8" ry="1.0" fill="#5f6f80" transform="rotate(-16 107.1 56.7)"/><ellipse cx="110.5" cy="57.2" rx="2.2" ry="1.3" fill="#444c55" transform="rotate(-5 110.5 57.2)"/><ellipse cx="114.2" cy="56.5" rx="1.9" ry="1.2" fill="#5f6f80" transform="rotate(3 114.2 56.5)"/><ellipse cx="117.9" cy="56.6" rx="2.3" ry="1.0" fill="#7d8891" transform="rotate(-5 117.9 56.6)"/><ellipse cx="122.4" cy="57.0" rx="2.1" ry="1.1" fill="#a9b3bc" transform="rotate(0 122.4 57.0)"/><ellipse cx="126.5" cy="57.2" rx="1.6" ry="1.2" fill="#96a3ae" transform="rotate(8 126.5 57.2)"/><ellipse cx="129.6" cy="57.4" rx="2.2" ry="1.0" fill="#444c55" transform="rotate(1 129.6 57.4)"/><ellipse cx="133.9" cy="57.2" rx="1.8" ry="1.3" fill="#6f7c88" transform="rotate(2 133.9 57.2)"/><ellipse cx="137.5" cy="56.7" rx="1.8" ry="1.3" fill="#9b948c" transform="rotate(15 137.5 56.7)"/><ellipse cx="141.0" cy="57.5" rx="1.6" ry="1.2" fill="#a9b3bc" transform="rotate(-9 141.0 57.5)"/><ellipse cx="143.8" cy="57.7" rx="2.3" ry="1.1" fill="#8296a8" transform="rotate(-8 143.8 57.7)"/><ellipse cx="148.2" cy="56.5" rx="2.3" ry="1.2" fill="#c4c9cd" transform="rotate(5 148.2 56.5)"/><ellipse cx="152.6" cy="56.9" rx="2.1" ry="1.3" fill="#8296a8" transform="rotate(6 152.6 56.9)"/><ellipse cx="156.3" cy="57.7" rx="2.2" ry="1.2" fill="#96a3ae" transform="rotate(12 156.3 57.7)"/><ellipse cx="160.3" cy="57.7" rx="1.7" ry="1.1" fill="#d6d3cc" transform="rotate(15 160.3 57.7)"/><ellipse cx="163.7" cy="57.3" rx="2.1" ry="1.3" fill="#b3b9bf" transform="rotate(16 163.7 57.3)"/><ellipse cx="167.8" cy="57.6" rx="2.3" ry="1.1" fill="#b3b9bf" transform="rotate(15 167.8 57.6)"/><ellipse cx="171.8" cy="56.5" rx="1.8" ry="0.9" fill="#a9b3bc" transform="rotate(-12 171.8 56.5)"/><ellipse cx="175.3" cy="57.4" rx="2.4" ry="1.4" fill="#d6d3cc" transform="rotate(14 175.3 57.4)"/><ellipse cx="179.8" cy="57.1" rx="1.5" ry="1.3" fill="#9b948c" transform="rotate(-16 179.8 57.1)"/><ellipse cx="-1.6" cy="58.4" rx="2.0" ry="1.3" fill="#7d8891" transform="rotate(5 -1.6 58.4)"/><ellipse cx="2.1" cy="59.1" rx="2.0" ry="1.3" fill="#c4c9cd" transform="rotate(-19 2.1 59.1)"/><ellipse cx="5.6" cy="58.1" rx="2.4" ry="1.2" fill="#96a3ae" transform="rotate(7 5.6 58.1)"/><ellipse cx="10.0" cy="59.2" rx="2.0" ry="1.3" fill="#96a3ae" transform="rotate(16 10.0 59.2)"/><ellipse cx="13.6" cy="59.3" rx="1.8" ry="1.2" fill="#96a3ae" transform="rotate(-19 13.6 59.3)"/><ellipse cx="16.9" cy="59.0" rx="1.7" ry="1.4" fill="#b3b9bf" transform="rotate(18 16.9 59.0)"/><ellipse cx="20.2" cy="58.3" rx="2.6" ry="1.0" fill="#737b82" transform="rotate(0 20.2 58.3)"/><ellipse cx="24.8" cy="58.9" rx="2.4" ry="1.2" fill="#7d8891" transform="rotate(12 24.8 58.9)"/><ellipse cx="29.2" cy="58.1" rx="2.2" ry="1.2" fill="#737b82" transform="rotate(10 29.2 58.1)"/><ellipse cx="33.6" cy="59.5" rx="1.9" ry="1.2" fill="#8296a8" transform="rotate(-14 33.6 59.5)"/><ellipse cx="37.1" cy="58.7" rx="1.8" ry="1.1" fill="#7d8891" transform="rotate(13 37.1 58.7)"/><ellipse cx="40.6" cy="59.4" rx="1.9" ry="1.2" fill="#737b82" transform="rotate(0 40.6 59.4)"/><ellipse cx="44.1" cy="58.6" rx="2.2" ry="1.3" fill="#59646e" transform="rotate(-6 44.1 58.6)"/><ellipse cx="48.1" cy="59.1" rx="2.2" ry="1.4" fill="#9b948c" transform="rotate(9 48.1 59.1)"/><ellipse cx="52.0" cy="59.2" rx="2.0" ry="1.1" fill="#5f6f80" transform="rotate(0 52.0 59.2)"/><ellipse cx="55.7" cy="58.4" rx="1.7" ry="1.3" fill="#7d8891" transform="rotate(-7 55.7 58.4)"/><ellipse cx="58.8" cy="58.8" rx="2.6" ry="1.2" fill="#9b948c" transform="rotate(-17 58.8 58.8)"/><ellipse cx="63.8" cy="59.0" rx="2.5" ry="1.5" fill="#8296a8" transform="rotate(-6 63.8 59.0)"/><ellipse cx="68.7" cy="59.0" rx="1.9" ry="1.2" fill="#444c55" transform="rotate(-18 68.7 59.0)"/><ellipse cx="72.1" cy="58.8" rx="2.1" ry="1.4" fill="#96a3ae" transform="rotate(-9 72.1 58.8)"/><ellipse cx="76.2" cy="58.3" rx="2.6" ry="1.4" fill="#9b948c" transform="rotate(-10 76.2 58.3)"/><ellipse cx="80.8" cy="58.4" rx="2.3" ry="1.1" fill="#6f7c88" transform="rotate(5 80.8 58.4)"/><ellipse cx="85.2" cy="58.7" rx="2.1" ry="1.5" fill="#9b948c" transform="rotate(-4 85.2 58.7)"/><ellipse cx="89.0" cy="59.2" rx="1.9" ry="1.4" fill="#59646e" transform="rotate(3 89.0 59.2)"/><ellipse cx="92.8" cy="59.1" rx="2.1" ry="1.4" fill="#96a3ae" transform="rotate(8 92.8 59.1)"/><ellipse cx="96.6" cy="59.4" rx="1.9" ry="1.0" fill="#737b82" transform="rotate(-8 96.6 59.4)"/><ellipse cx="100.3" cy="59.1" rx="1.9" ry="1.3" fill="#d6d3cc" transform="rotate(-3 100.3 59.1)"/><ellipse cx="103.7" cy="58.1" rx="1.8" ry="1.2" fill="#8e9aa6" transform="rotate(-1 103.7 58.1)"/><ellipse cx="107.1" cy="59.2" rx="1.8" ry="1.1" fill="#d6d3cc" transform="rotate(-4 107.1 59.2)"/><ellipse cx="110.6" cy="58.2" rx="2.2" ry="1.5" fill="#59646e" transform="rotate(-4 110.6 58.2)"/><ellipse cx="114.7" cy="59.3" rx="1.8" ry="1.5" fill="#737b82" transform="rotate(-12 114.7 59.3)"/><ellipse cx="118.3" cy="59.3" rx="2.4" ry="1.3" fill="#c4c9cd" transform="rotate(-18 118.3 59.3)"/><ellipse cx="122.8" cy="58.8" rx="2.0" ry="1.3" fill="#96a3ae" transform="rotate(2 122.8 58.8)"/><ellipse cx="126.8" cy="59.6" rx="1.6" ry="1.2" fill="#444c55" transform="rotate(-5 126.8 59.6)"/><ellipse cx="129.8" cy="58.8" rx="1.6" ry="1.5" fill="#d6d3cc" transform="rotate(11 129.8 58.8)"/><ellipse cx="133.2" cy="58.0" rx="2.4" ry="1.2" fill="#d6d3cc" transform="rotate(-5 133.2 58.0)"/><ellipse cx="137.8" cy="58.8" rx="1.6" ry="1.4" fill="#8296a8" transform="rotate(-8 137.8 58.8)"/><ellipse cx="140.7" cy="58.8" rx="1.9" ry="1.1" fill="#444c55" transform="rotate(0 140.7 58.8)"/><ellipse cx="144.4" cy="59.0" rx="2.3" ry="1.5" fill="#7d8891" transform="rotate(7 144.4 59.0)"/><ellipse cx="148.5" cy="58.2" rx="2.2" ry="1.4" fill="#737b82" transform="rotate(-14 148.5 58.2)"/><ellipse cx="152.8" cy="58.8" rx="1.7" ry="1.5" fill="#a9b3bc" transform="rotate(1 152.8 58.8)"/><ellipse cx="156.2" cy="59.3" rx="1.9" ry="1.5" fill="#8e9aa6" transform="rotate(6 156.2 59.3)"/><ellipse cx="159.7" cy="59.2" rx="2.2" ry="1.4" fill="#96a3ae" transform="rotate(-9 159.7 59.2)"/><ellipse cx="163.5" cy="58.3" rx="2.0" ry="1.4" fill="#8e9aa6" transform="rotate(17 163.5 58.3)"/><ellipse cx="167.2" cy="58.6" rx="1.9" ry="1.3" fill="#7d8891" transform="rotate(-6 167.2 58.6)"/><ellipse cx="170.8" cy="59.6" rx="2.1" ry="1.3" fill="#8e9aa6" transform="rotate(-8 170.8 59.6)"/><ellipse cx="175.0" cy="58.1" rx="1.9" ry="1.5" fill="#7d8891" transform="rotate(-10 175.0 58.1)"/><ellipse cx="178.6" cy="59.4" rx="2.4" ry="1.5" fill="#6f7c88" transform="rotate(18 178.6 59.4)"/><ellipse cx="-1.6" cy="61.0" rx="2.1" ry="1.5" fill="#c4c9cd" transform="rotate(11 -1.6 61.0)"/><ellipse cx="2.4" cy="59.9" rx="2.7" ry="1.2" fill="#7d8891" transform="rotate(6 2.4 59.9)"/><ellipse cx="7.4" cy="59.9" rx="1.9" ry="1.2" fill="#6f7c88" transform="rotate(6 7.4 59.9)"/><ellipse cx="10.9" cy="60.2" rx="2.6" ry="1.2" fill="#9b948c" transform="rotate(1 10.9 60.2)"/><ellipse cx="15.7" cy="61.4" rx="2.0" ry="1.2" fill="#a9b3bc" transform="rotate(3 15.7 61.4)"/><ellipse cx="19.3" cy="60.1" rx="2.2" ry="1.3" fill="#59646e" transform="rotate(6 19.3 60.1)"/><ellipse cx="23.2" cy="60.6" rx="1.9" ry="1.1" fill="#5f6f80" transform="rotate(-1 23.2 60.6)"/><ellipse cx="26.7" cy="60.1" rx="2.4" ry="1.6" fill="#96a3ae" transform="rotate(16 26.7 60.1)"/><ellipse cx="31.2" cy="60.8" rx="2.4" ry="1.1" fill="#a9b3bc" transform="rotate(8 31.2 60.8)"/><ellipse cx="35.8" cy="60.6" rx="2.4" ry="1.1" fill="#96a3ae" transform="rotate(0 35.8 60.6)"/><ellipse cx="40.5" cy="61.4" rx="1.8" ry="1.1" fill="#8296a8" transform="rotate(19 40.5 61.4)"/><ellipse cx="44.0" cy="61.5" rx="1.9" ry="1.6" fill="#737b82" transform="rotate(16 44.0 61.5)"/><ellipse cx="47.4" cy="60.2" rx="2.0" ry="1.4" fill="#96a3ae" transform="rotate(5 47.4 60.2)"/><ellipse cx="51.0" cy="61.4" rx="2.1" ry="1.4" fill="#d6d3cc" transform="rotate(15 51.0 61.4)"/><ellipse cx="55.0" cy="61.3" rx="2.1" ry="1.1" fill="#a9b3bc" transform="rotate(18 55.0 61.3)"/><ellipse cx="59.1" cy="61.0" rx="2.5" ry="1.4" fill="#5f6f80" transform="rotate(16 59.1 61.0)"/><ellipse cx="63.5" cy="60.3" rx="2.5" ry="1.1" fill="#59646e" transform="rotate(-16 63.5 60.3)"/><ellipse cx="68.2" cy="61.2" rx="2.5" ry="1.5" fill="#d6d3cc" transform="rotate(-12 68.2 61.2)"/><ellipse cx="72.7" cy="59.9" rx="2.6" ry="1.6" fill="#7d8891" transform="rotate(19 72.7 59.9)"/><ellipse cx="77.2" cy="61.1" rx="1.8" ry="1.1" fill="#7d8891" transform="rotate(-9 77.2 61.1)"/><ellipse cx="80.7" cy="60.1" rx="1.8" ry="1.4" fill="#8296a8" transform="rotate(11 80.7 60.1)"/><ellipse cx="83.8" cy="61.2" rx="2.4" ry="1.5" fill="#7d8891" transform="rotate(17 83.8 61.2)"/><ellipse cx="88.7" cy="60.3" rx="2.8" ry="1.1" fill="#b3b9bf" transform="rotate(-6 88.7 60.3)"/><ellipse cx="94.1" cy="60.4" rx="2.5" ry="1.3" fill="#6f7c88" transform="rotate(-16 94.1 60.4)"/><ellipse cx="98.5" cy="61.0" rx="1.9" ry="1.6" fill="#96a3ae" transform="rotate(14 98.5 61.0)"/><ellipse cx="102.3" cy="60.5" rx="2.7" ry="1.5" fill="#6f7c88" transform="rotate(-16 102.3 60.5)"/><ellipse cx="107.5" cy="61.0" rx="1.8" ry="1.3" fill="#b3b9bf" transform="rotate(13 107.5 61.0)"/><ellipse cx="110.9" cy="60.2" rx="2.3" ry="1.6" fill="#8e9aa6" transform="rotate(14 110.9 60.2)"/><ellipse cx="115.1" cy="61.1" rx="2.1" ry="1.2" fill="#a9b3bc" transform="rotate(16 115.1 61.1)"/><ellipse cx="119.2" cy="60.4" rx="2.1" ry="1.1" fill="#444c55" transform="rotate(-19 119.2 60.4)"/><ellipse cx="123.2" cy="60.4" rx="2.0" ry="1.2" fill="#6f7c88" transform="rotate(-6 123.2 60.4)"/><ellipse cx="126.9" cy="60.2" rx="1.9" ry="1.3" fill="#737b82" transform="rotate(8 126.9 60.2)"/><ellipse cx="130.7" cy="60.2" rx="2.6" ry="1.5" fill="#6f7c88" transform="rotate(-17 130.7 60.2)"/><ellipse cx="135.7" cy="59.9" rx="2.4" ry="1.5" fill="#7d8891" transform="rotate(1 135.7 59.9)"/><ellipse cx="139.9" cy="60.9" rx="1.9" ry="1.6" fill="#6f7c88" transform="rotate(13 139.9 60.9)"/><ellipse cx="143.7" cy="60.1" rx="2.3" ry="1.5" fill="#5f6f80" transform="rotate(-12 143.7 60.1)"/><ellipse cx="148.0" cy="60.1" rx="2.1" ry="1.2" fill="#9b948c" transform="rotate(10 148.0 60.1)"/><ellipse cx="152.2" cy="60.7" rx="1.7" ry="1.1" fill="#59646e" transform="rotate(10 152.2 60.7)"/><ellipse cx="155.6" cy="60.5" rx="2.7" ry="1.2" fill="#444c55" transform="rotate(14 155.6 60.5)"/><ellipse cx="160.6" cy="61.3" rx="1.8" ry="1.3" fill="#6f7c88" transform="rotate(19 160.6 61.3)"/><ellipse cx="163.7" cy="61.2" rx="2.7" ry="1.6" fill="#8296a8" transform="rotate(-7 163.7 61.2)"/><ellipse cx="168.7" cy="60.2" rx="2.2" ry="1.3" fill="#9b948c" transform="rotate(-3 168.7 60.2)"/><ellipse cx="172.9" cy="61.2" rx="2.3" ry="1.6" fill="#7d8891" transform="rotate(-13 172.9 61.2)"/><ellipse cx="177.5" cy="60.8" rx="2.6" ry="1.2" fill="#737b82" transform="rotate(-17 177.5 60.8)"/><ellipse cx="-1.7" cy="62.8" rx="2.5" ry="1.2" fill="#5f6f80" transform="rotate(-2 -1.7 62.8)"/><ellipse cx="2.8" cy="62.6" rx="2.5" ry="1.4" fill="#a9b3bc" transform="rotate(16 2.8 62.6)"/><ellipse cx="7.7" cy="62.4" rx="2.9" ry="1.5" fill="#a9b3bc" transform="rotate(16 7.7 62.4)"/><ellipse cx="13.3" cy="62.0" rx="1.8" ry="1.7" fill="#59646e" transform="rotate(11 13.3 62.0)"/><ellipse cx="16.6" cy="62.6" rx="2.6" ry="1.5" fill="#5f6f80" transform="rotate(17 16.6 62.6)"/><ellipse cx="21.4" cy="62.0" rx="1.8" ry="1.5" fill="#5f6f80" transform="rotate(8 21.4 62.0)"/><ellipse cx="25.1" cy="62.1" rx="2.4" ry="1.5" fill="#59646e" transform="rotate(1 25.1 62.1)"/><ellipse cx="29.9" cy="62.6" rx="1.8" ry="1.6" fill="#9b948c" transform="rotate(4 29.9 62.6)"/><ellipse cx="33.0" cy="62.5" rx="2.3" ry="1.6" fill="#a9b3bc" transform="rotate(-6 33.0 62.5)"/><ellipse cx="37.2" cy="63.5" rx="2.2" ry="1.3" fill="#d6d3cc" transform="rotate(-8 37.2 63.5)"/><ellipse cx="41.4" cy="62.2" rx="2.6" ry="1.3" fill="#a9b3bc" transform="rotate(-11 41.4 62.2)"/><ellipse cx="46.2" cy="63.4" rx="2.3" ry="1.6" fill="#737b82" transform="rotate(-13 46.2 63.4)"/><ellipse cx="50.3" cy="62.1" rx="1.8" ry="1.6" fill="#737b82" transform="rotate(10 50.3 62.1)"/><ellipse cx="53.7" cy="63.3" rx="1.9" ry="1.4" fill="#9b948c" transform="rotate(4 53.7 63.3)"/><ellipse cx="57.3" cy="63.3" rx="2.6" ry="1.2" fill="#9b948c" transform="rotate(-15 57.3 63.3)"/><ellipse cx="62.4" cy="62.2" rx="2.1" ry="1.1" fill="#d6d3cc" transform="rotate(-3 62.4 62.2)"/><ellipse cx="66.5" cy="62.5" rx="1.9" ry="1.1" fill="#8e9aa6" transform="rotate(0 66.5 62.5)"/><ellipse cx="70.2" cy="61.8" rx="2.1" ry="1.2" fill="#96a3ae" transform="rotate(15 70.2 61.8)"/><ellipse cx="74.2" cy="63.1" rx="2.5" ry="1.4" fill="#6f7c88" transform="rotate(5 74.2 63.1)"/><ellipse cx="78.6" cy="63.5" rx="2.1" ry="1.6" fill="#8296a8" transform="rotate(0 78.6 63.5)"/><ellipse cx="82.3" cy="62.9" rx="2.3" ry="1.7" fill="#8e9aa6" transform="rotate(19 82.3 62.9)"/><ellipse cx="86.4" cy="63.3" rx="2.3" ry="1.3" fill="#444c55" transform="rotate(-11 86.4 63.3)"/><ellipse cx="91.0" cy="63.1" rx="2.4" ry="1.7" fill="#7d8891" transform="rotate(-15 91.0 63.1)"/><ellipse cx="95.5" cy="62.5" rx="1.9" ry="1.6" fill="#c4c9cd" transform="rotate(5 95.5 62.5)"/><ellipse cx="99.4" cy="63.2" rx="2.9" ry="1.2" fill="#6f7c88" transform="rotate(11 99.4 63.2)"/><ellipse cx="105.0" cy="62.0" rx="2.7" ry="1.5" fill="#96a3ae" transform="rotate(17 105.0 62.0)"/><ellipse cx="110.1" cy="62.6" rx="2.8" ry="1.2" fill="#d6d3cc" transform="rotate(7 110.1 62.6)"/><ellipse cx="115.3" cy="63.4" rx="2.1" ry="1.4" fill="#b3b9bf" transform="rotate(-2 115.3 63.4)"/><ellipse cx="119.5" cy="63.1" rx="2.0" ry="1.5" fill="#59646e" transform="rotate(-9 119.5 63.1)"/><ellipse cx="123.1" cy="62.0" rx="2.8" ry="1.3" fill="#a9b3bc" transform="rotate(14 123.1 62.0)"/><ellipse cx="128.6" cy="62.2" rx="2.4" ry="1.4" fill="#8296a8" transform="rotate(4 128.6 62.2)"/><ellipse cx="132.7" cy="62.7" rx="2.4" ry="1.6" fill="#5f6f80" transform="rotate(8 132.7 62.7)"/><ellipse cx="137.3" cy="62.7" rx="3.0" ry="1.2" fill="#8296a8" transform="rotate(3 137.3 62.7)"/><ellipse cx="143.0" cy="63.3" rx="2.6" ry="1.3" fill="#96a3ae" transform="rotate(0 143.0 63.3)"/><ellipse cx="148.1" cy="62.5" rx="2.2" ry="1.4" fill="#7d8891" transform="rotate(-1 148.1 62.5)"/><ellipse cx="152.2" cy="62.9" rx="2.8" ry="1.5" fill="#d6d3cc" transform="rotate(-19 152.2 62.9)"/><ellipse cx="157.7" cy="61.8" rx="2.4" ry="1.3" fill="#d6d3cc" transform="rotate(0 157.7 61.8)"/><ellipse cx="162.1" cy="62.5" rx="2.5" ry="1.6" fill="#a9b3bc" transform="rotate(-14 162.1 62.5)"/><ellipse cx="167.0" cy="62.7" rx="2.6" ry="1.6" fill="#444c55" transform="rotate(-11 167.0 62.7)"/><ellipse cx="172.1" cy="62.5" rx="2.6" ry="1.3" fill="#6f7c88" transform="rotate(18 172.1 62.5)"/><ellipse cx="177.2" cy="63.0" rx="2.8" ry="1.6" fill="#9b948c" transform="rotate(-9 177.2 63.0)"/><ellipse cx="-0.3" cy="64.7" rx="2.3" ry="1.4" fill="#8296a8" transform="rotate(8 -0.3 64.7)"/><ellipse cx="4.1" cy="64.5" rx="2.6" ry="1.7" fill="#6f7c88" transform="rotate(-13 4.1 64.5)"/><ellipse cx="9.2" cy="65.6" rx="2.4" ry="1.6" fill="#a9b3bc" transform="rotate(-1 9.2 65.6)"/><ellipse cx="14.0" cy="65.5" rx="2.6" ry="1.4" fill="#59646e" transform="rotate(9 14.0 65.5)"/><ellipse cx="18.9" cy="65.1" rx="2.8" ry="1.8" fill="#5f6f80" transform="rotate(-3 18.9 65.1)"/><ellipse cx="24.3" cy="65.7" rx="2.6" ry="1.7" fill="#6f7c88" transform="rotate(18 24.3 65.7)"/><ellipse cx="29.4" cy="65.1" rx="2.8" ry="1.5" fill="#b3b9bf" transform="rotate(-11 29.4 65.1)"/><ellipse cx="34.2" cy="65.2" rx="2.0" ry="1.5" fill="#d6d3cc" transform="rotate(6 34.2 65.2)"/><ellipse cx="37.7" cy="65.5" rx="3.1" ry="1.8" fill="#d6d3cc" transform="rotate(13 37.7 65.5)"/><ellipse cx="43.6" cy="65.8" rx="2.9" ry="1.2" fill="#8e9aa6" transform="rotate(12 43.6 65.8)"/><ellipse cx="48.8" cy="65.2" rx="2.1" ry="1.2" fill="#7d8891" transform="rotate(-18 48.8 65.2)"/><ellipse cx="53.0" cy="64.7" rx="3.1" ry="1.7" fill="#9b948c" transform="rotate(-19 53.0 64.7)"/><ellipse cx="58.7" cy="65.3" rx="3.1" ry="1.5" fill="#444c55" transform="rotate(-13 58.7 65.3)"/><ellipse cx="64.1" cy="64.6" rx="2.4" ry="1.6" fill="#96a3ae" transform="rotate(-4 64.1 64.6)"/><ellipse cx="68.9" cy="65.7" rx="3.1" ry="1.8" fill="#7d8891" transform="rotate(1 68.9 65.7)"/><ellipse cx="74.9" cy="64.1" rx="2.7" ry="1.5" fill="#8296a8" transform="rotate(-19 74.9 64.1)"/><ellipse cx="79.9" cy="64.3" rx="1.9" ry="1.5" fill="#8296a8" transform="rotate(-8 79.9 64.3)"/><ellipse cx="83.3" cy="64.0" rx="1.9" ry="1.5" fill="#c4c9cd" transform="rotate(19 83.3 64.0)"/><ellipse cx="86.7" cy="65.0" rx="2.4" ry="1.7" fill="#5f6f80" transform="rotate(-9 86.7 65.0)"/><ellipse cx="91.5" cy="65.3" rx="2.9" ry="1.3" fill="#d6d3cc" transform="rotate(-1 91.5 65.3)"/><ellipse cx="97.1" cy="64.7" rx="2.9" ry="1.5" fill="#d6d3cc" transform="rotate(2 97.1 64.7)"/><ellipse cx="102.8" cy="65.4" rx="2.3" ry="1.2" fill="#737b82" transform="rotate(13 102.8 65.4)"/><ellipse cx="107.4" cy="64.7" rx="2.8" ry="1.5" fill="#737b82" transform="rotate(-8 107.4 64.7)"/><ellipse cx="112.3" cy="65.5" rx="2.3" ry="1.3" fill="#c4c9cd" transform="rotate(13 112.3 65.5)"/><ellipse cx="116.9" cy="65.2" rx="3.0" ry="1.4" fill="#d6d3cc" transform="rotate(8 116.9 65.2)"/><ellipse cx="122.5" cy="65.1" rx="2.4" ry="1.5" fill="#5f6f80" transform="rotate(-6 122.5 65.1)"/><ellipse cx="126.9" cy="65.6" rx="2.6" ry="1.5" fill="#6f7c88" transform="rotate(-19 126.9 65.6)"/><ellipse cx="131.7" cy="64.9" rx="2.7" ry="1.2" fill="#737b82" transform="rotate(19 131.7 64.9)"/><ellipse cx="137.1" cy="64.5" rx="2.3" ry="1.7" fill="#6f7c88" transform="rotate(14 137.1 64.5)"/><ellipse cx="141.6" cy="65.8" rx="2.5" ry="1.3" fill="#7d8891" transform="rotate(0 141.6 65.8)"/><ellipse cx="146.5" cy="63.9" rx="2.8" ry="1.3" fill="#a9b3bc" transform="rotate(15 146.5 63.9)"/><ellipse cx="151.9" cy="65.2" rx="2.2" ry="1.4" fill="#6f7c88" transform="rotate(-7 151.9 65.2)"/><ellipse cx="156.1" cy="64.4" rx="2.1" ry="1.7" fill="#7d8891" transform="rotate(-9 156.1 64.4)"/><ellipse cx="160.4" cy="64.4" rx="3.0" ry="1.3" fill="#b3b9bf" transform="rotate(18 160.4 64.4)"/><ellipse cx="166.0" cy="65.2" rx="2.8" ry="1.5" fill="#5f6f80" transform="rotate(16 166.0 65.2)"/><ellipse cx="171.3" cy="65.0" rx="2.7" ry="1.4" fill="#7d8891" transform="rotate(-17 171.3 65.0)"/><ellipse cx="176.6" cy="65.6" rx="2.9" ry="1.2" fill="#6f7c88" transform="rotate(-13 176.6 65.6)"/><ellipse cx="-1.2" cy="67.1" rx="2.8" ry="1.9" fill="#737b82" transform="rotate(-9 -1.2 67.1)"/><ellipse cx="3.8" cy="66.3" rx="3.3" ry="1.5" fill="#6f7c88" transform="rotate(17 3.8 66.3)"/><ellipse cx="9.7" cy="66.8" rx="2.7" ry="1.9" fill="#7d8891" transform="rotate(-3 9.7 66.8)"/><ellipse cx="14.8" cy="66.9" rx="2.8" ry="1.3" fill="#59646e" transform="rotate(-2 14.8 66.9)"/><ellipse cx="19.8" cy="67.1" rx="2.5" ry="1.4" fill="#b3b9bf" transform="rotate(-1 19.8 67.1)"/><ellipse cx="24.7" cy="68.1" rx="2.9" ry="1.4" fill="#c4c9cd" transform="rotate(5 24.7 68.1)"/><ellipse cx="29.9" cy="67.6" rx="2.1" ry="1.8" fill="#8296a8" transform="rotate(0 29.9 67.6)"/><ellipse cx="33.7" cy="66.1" rx="2.9" ry="1.3" fill="#a9b3bc" transform="rotate(9 33.7 66.1)"/><ellipse cx="39.0" cy="67.4" rx="3.1" ry="1.5" fill="#96a3ae" transform="rotate(2 39.0 67.4)"/><ellipse cx="44.9" cy="68.1" rx="2.3" ry="2.0" fill="#444c55" transform="rotate(-7 44.9 68.1)"/><ellipse cx="49.0" cy="67.6" rx="2.8" ry="1.6" fill="#a9b3bc" transform="rotate(17 49.0 67.6)"/><ellipse cx="54.2" cy="67.0" rx="3.2" ry="1.6" fill="#96a3ae" transform="rotate(-14 54.2 67.0)"/><ellipse cx="59.9" cy="66.4" rx="2.4" ry="1.7" fill="#5f6f80" transform="rotate(18 59.9 66.4)"/><ellipse cx="64.3" cy="67.7" rx="3.1" ry="1.6" fill="#a9b3bc" transform="rotate(-9 64.3 67.7)"/><ellipse cx="70.0" cy="67.5" rx="2.9" ry="1.8" fill="#8e9aa6" transform="rotate(-7 70.0 67.5)"/><ellipse cx="75.1" cy="67.7" rx="2.4" ry="1.7" fill="#737b82" transform="rotate(11 75.1 67.7)"/><ellipse cx="79.8" cy="66.3" rx="2.4" ry="1.5" fill="#c4c9cd" transform="rotate(-8 79.8 66.3)"/><ellipse cx="84.1" cy="67.5" rx="2.2" ry="1.5" fill="#5f6f80" transform="rotate(13 84.1 67.5)"/><ellipse cx="88.7" cy="66.9" rx="3.2" ry="1.6" fill="#5f6f80" transform="rotate(10 88.7 66.9)"/><ellipse cx="94.7" cy="67.2" rx="2.9" ry="1.9" fill="#c4c9cd" transform="rotate(3 94.7 67.2)"/><ellipse cx="99.9" cy="67.7" rx="3.3" ry="1.9" fill="#a9b3bc" transform="rotate(12 99.9 67.7)"/><ellipse cx="105.8" cy="66.4" rx="3.1" ry="1.4" fill="#8e9aa6" transform="rotate(-16 105.8 66.4)"/><ellipse cx="111.4" cy="66.3" rx="2.7" ry="1.5" fill="#5f6f80" transform="rotate(17 111.4 66.3)"/><ellipse cx="116.8" cy="66.2" rx="2.4" ry="1.3" fill="#d6d3cc" transform="rotate(-12 116.8 66.2)"/><ellipse cx="121.8" cy="68.1" rx="2.5" ry="1.8" fill="#737b82" transform="rotate(19 121.8 68.1)"/><ellipse cx="126.6" cy="67.0" rx="2.9" ry="1.4" fill="#737b82" transform="rotate(-13 126.6 67.0)"/><ellipse cx="132.4" cy="67.4" rx="2.1" ry="1.7" fill="#d6d3cc" transform="rotate(5 132.4 67.4)"/><ellipse cx="136.6" cy="68.0" rx="2.7" ry="1.7" fill="#7d8891" transform="rotate(16 136.6 68.0)"/><ellipse cx="141.8" cy="67.2" rx="2.7" ry="1.6" fill="#96a3ae" transform="rotate(-4 141.8 67.2)"/><ellipse cx="146.6" cy="67.1" rx="3.2" ry="1.5" fill="#c4c9cd" transform="rotate(-13 146.6 67.1)"/><ellipse cx="152.7" cy="66.7" rx="3.1" ry="1.7" fill="#9b948c" transform="rotate(-13 152.7 66.7)"/><ellipse cx="158.4" cy="67.6" rx="3.1" ry="1.6" fill="#9b948c" transform="rotate(12 158.4 67.6)"/><ellipse cx="164.0" cy="66.5" rx="2.8" ry="1.3" fill="#b3b9bf" transform="rotate(-11 164.0 66.5)"/><ellipse cx="169.3" cy="66.9" rx="2.9" ry="1.5" fill="#c4c9cd" transform="rotate(13 169.3 66.9)"/><ellipse cx="174.8" cy="67.2" rx="2.2" ry="1.7" fill="#5f6f80" transform="rotate(17 174.8 67.2)"/><ellipse cx="179.1" cy="67.3" rx="2.6" ry="1.4" fill="#a9b3bc" transform="rotate(10 179.1 67.3)"/><ellipse cx="-1.6" cy="70.4" rx="2.6" ry="2.0" fill="#8296a8" transform="rotate(-8 -1.6 70.4)"/><ellipse cx="3.3" cy="70.7" rx="2.3" ry="1.6" fill="#5f6f80" transform="rotate(-8 3.3 70.7)"/><ellipse cx="7.7" cy="70.0" rx="2.4" ry="1.6" fill="#9b948c" transform="rotate(-13 7.7 70.0)"/><ellipse cx="12.0" cy="70.2" rx="2.2" ry="2.0" fill="#b3b9bf" transform="rotate(10 12.0 70.2)"/><ellipse cx="16.3" cy="69.9" rx="2.2" ry="1.7" fill="#737b82" transform="rotate(4 16.3 69.9)"/><ellipse cx="20.1" cy="70.4" rx="2.7" ry="1.6" fill="#7d8891" transform="rotate(-14 20.1 70.4)"/><ellipse cx="25.1" cy="69.2" rx="2.5" ry="1.4" fill="#6f7c88" transform="rotate(4 25.1 69.2)"/><ellipse cx="29.7" cy="69.4" rx="2.4" ry="1.9" fill="#b3b9bf" transform="rotate(-1 29.7 69.4)"/><ellipse cx="34.2" cy="68.5" rx="2.8" ry="1.8" fill="#7d8891" transform="rotate(-14 34.2 68.5)"/><ellipse cx="39.5" cy="68.6" rx="2.2" ry="1.5" fill="#59646e" transform="rotate(16 39.5 68.6)"/><ellipse cx="43.6" cy="68.9" rx="2.6" ry="1.7" fill="#c4c9cd" transform="rotate(17 43.6 68.9)"/><ellipse cx="48.4" cy="69.1" rx="3.1" ry="1.9" fill="#c4c9cd" transform="rotate(8 48.4 69.1)"/><ellipse cx="54.0" cy="70.0" rx="2.5" ry="1.5" fill="#d6d3cc" transform="rotate(-18 54.0 70.0)"/><ellipse cx="58.9" cy="68.9" rx="3.2" ry="2.1" fill="#c4c9cd" transform="rotate(-4 58.9 68.9)"/><ellipse cx="65.0" cy="69.4" rx="2.4" ry="1.5" fill="#8296a8" transform="rotate(-3 65.0 69.4)"/><ellipse cx="69.6" cy="69.3" rx="2.4" ry="2.1" fill="#d6d3cc" transform="rotate(-7 69.6 69.3)"/><ellipse cx="73.7" cy="69.8" rx="2.5" ry="1.7" fill="#6f7c88" transform="rotate(6 73.7 69.8)"/><ellipse cx="78.4" cy="69.6" rx="2.3" ry="1.5" fill="#c4c9cd" transform="rotate(-6 78.4 69.6)"/><ellipse cx="83.0" cy="70.3" rx="2.2" ry="1.5" fill="#737b82" transform="rotate(-17 83.0 70.3)"/><ellipse cx="87.0" cy="70.0" rx="2.6" ry="1.6" fill="#9b948c" transform="rotate(5 87.0 70.0)"/><ellipse cx="91.7" cy="68.6" rx="2.4" ry="1.4" fill="#96a3ae" transform="rotate(2 91.7 68.6)"/><ellipse cx="96.3" cy="68.8" rx="2.6" ry="1.9" fill="#b3b9bf" transform="rotate(-3 96.3 68.8)"/><ellipse cx="101.6" cy="68.9" rx="2.1" ry="1.6" fill="#9b948c" transform="rotate(10 101.6 68.9)"/><ellipse cx="106.0" cy="70.7" rx="3.2" ry="1.8" fill="#b3b9bf" transform="rotate(9 106.0 70.7)"/><ellipse cx="112.1" cy="70.4" rx="3.4" ry="1.6" fill="#59646e" transform="rotate(-4 112.1 70.4)"/><ellipse cx="118.5" cy="70.3" rx="3.0" ry="2.1" fill="#a9b3bc" transform="rotate(-5 118.5 70.3)"/><ellipse cx="124.1" cy="69.7" rx="3.3" ry="1.5" fill="#b3b9bf" transform="rotate(-14 124.1 69.7)"/><ellipse cx="130.3" cy="68.7" rx="2.8" ry="1.4" fill="#d6d3cc" transform="rotate(16 130.3 68.7)"/><ellipse cx="135.3" cy="68.9" rx="3.0" ry="1.9" fill="#59646e" transform="rotate(-9 135.3 68.9)"/><ellipse cx="141.3" cy="69.3" rx="2.1" ry="1.5" fill="#96a3ae" transform="rotate(9 141.3 69.3)"/><ellipse cx="145.5" cy="69.5" rx="2.2" ry="1.9" fill="#96a3ae" transform="rotate(6 145.5 69.5)"/><ellipse cx="149.9" cy="69.9" rx="2.8" ry="1.6" fill="#737b82" transform="rotate(3 149.9 69.9)"/><ellipse cx="154.8" cy="69.4" rx="3.0" ry="1.9" fill="#444c55" transform="rotate(-17 154.8 69.4)"/><ellipse cx="160.7" cy="70.4" rx="2.9" ry="1.7" fill="#96a3ae" transform="rotate(-1 160.7 70.4)"/><ellipse cx="166.5" cy="69.7" rx="2.5" ry="1.8" fill="#c4c9cd" transform="rotate(-16 166.5 69.7)"/><ellipse cx="171.5" cy="70.3" rx="3.4" ry="1.5" fill="#6f7c88" transform="rotate(5 171.5 70.3)"/><ellipse cx="177.8" cy="70.5" rx="3.1" ry="1.8" fill="#96a3ae" transform="rotate(10 177.8 70.5)"/><ellipse cx="-0.3" cy="73.0" rx="2.6" ry="1.6" fill="#444c55" transform="rotate(-16 -0.3 73.0)"/><ellipse cx="4.3" cy="72.4" rx="2.8" ry="1.8" fill="#8e9aa6" transform="rotate(-13 4.3 72.4)"/><ellipse cx="9.8" cy="71.5" rx="3.6" ry="1.6" fill="#9b948c" transform="rotate(-3 9.8 71.5)"/><ellipse cx="16.6" cy="73.2" rx="2.5" ry="2.1" fill="#8e9aa6" transform="rotate(-11 16.6 73.2)"/><ellipse cx="21.1" cy="71.9" rx="3.2" ry="2.1" fill="#d6d3cc" transform="rotate(-14 21.1 71.9)"/><ellipse cx="27.0" cy="71.4" rx="3.8" ry="1.8" fill="#d6d3cc" transform="rotate(-3 27.0 71.4)"/><ellipse cx="34.3" cy="71.5" rx="2.6" ry="1.5" fill="#7d8891" transform="rotate(-17 34.3 71.5)"/><ellipse cx="39.1" cy="72.0" rx="2.9" ry="1.9" fill="#c4c9cd" transform="rotate(0 39.1 72.0)"/><ellipse cx="44.9" cy="71.4" rx="2.8" ry="1.6" fill="#737b82" transform="rotate(-7 44.9 71.4)"/><ellipse cx="50.5" cy="71.8" rx="2.7" ry="1.9" fill="#b3b9bf" transform="rotate(13 50.5 71.8)"/><ellipse cx="55.9" cy="72.8" rx="3.1" ry="1.9" fill="#7d8891" transform="rotate(14 55.9 72.8)"/><ellipse cx="61.7" cy="71.6" rx="3.3" ry="1.5" fill="#b3b9bf" transform="rotate(-2 61.7 71.6)"/><ellipse cx="68.0" cy="72.2" rx="3.8" ry="1.9" fill="#8e9aa6" transform="rotate(-14 68.0 72.2)"/><ellipse cx="75.2" cy="72.8" rx="2.6" ry="1.7" fill="#6f7c88" transform="rotate(-7 75.2 72.8)"/><ellipse cx="80.5" cy="72.8" rx="2.8" ry="1.5" fill="#a9b3bc" transform="rotate(-3 80.5 72.8)"/><ellipse cx="85.5" cy="71.7" rx="3.7" ry="2.1" fill="#c4c9cd" transform="rotate(0 85.5 71.7)"/><ellipse cx="92.3" cy="72.7" rx="2.9" ry="2.2" fill="#59646e" transform="rotate(12 92.3 72.7)"/><ellipse cx="97.6" cy="72.6" rx="3.3" ry="1.9" fill="#a9b3bc" transform="rotate(4 97.6 72.6)"/><ellipse cx="103.5" cy="72.4" rx="2.5" ry="2.0" fill="#b3b9bf" transform="rotate(7 103.5 72.4)"/><ellipse cx="108.6" cy="73.2" rx="3.6" ry="2.0" fill="#59646e" transform="rotate(13 108.6 73.2)"/><ellipse cx="114.9" cy="72.3" rx="2.7" ry="1.8" fill="#9b948c" transform="rotate(-4 114.9 72.3)"/><ellipse cx="120.1" cy="72.3" rx="2.6" ry="1.8" fill="#737b82" transform="rotate(-8 120.1 72.3)"/><ellipse cx="125.4" cy="71.4" rx="2.4" ry="1.7" fill="#5f6f80" transform="rotate(-19 125.4 71.4)"/><ellipse cx="129.8" cy="72.2" rx="3.8" ry="1.9" fill="#96a3ae" transform="rotate(5 129.8 72.2)"/><ellipse cx="137.2" cy="73.3" rx="2.9" ry="1.8" fill="#8296a8" transform="rotate(8 137.2 73.3)"/><ellipse cx="142.7" cy="71.7" rx="2.3" ry="2.0" fill="#8296a8" transform="rotate(10 142.7 71.7)"/><ellipse cx="147.0" cy="71.1" rx="3.7" ry="1.6" fill="#8e9aa6" transform="rotate(6 147.0 71.1)"/><ellipse cx="153.8" cy="72.5" rx="3.8" ry="1.5" fill="#6f7c88" transform="rotate(13 153.8 72.5)"/><ellipse cx="160.5" cy="73.0" rx="3.4" ry="1.6" fill="#d6d3cc" transform="rotate(0 160.5 73.0)"/><ellipse cx="166.7" cy="72.6" rx="2.8" ry="2.2" fill="#9b948c" transform="rotate(-14 166.7 72.6)"/><ellipse cx="171.8" cy="71.4" rx="2.8" ry="1.7" fill="#d6d3cc" transform="rotate(-16 171.8 71.4)"/><ellipse cx="177.5" cy="71.4" rx="3.0" ry="1.5" fill="#9b948c" transform="rotate(12 177.5 71.4)"/><ellipse cx="-0.4" cy="73.7" rx="2.5" ry="1.8" fill="#a9b3bc" transform="rotate(-8 -0.4 73.7)"/><ellipse cx="4.7" cy="73.7" rx="2.5" ry="2.0" fill="#6f7c88" transform="rotate(5 4.7 73.7)"/><ellipse cx="9.3" cy="76.0" rx="2.5" ry="2.3" fill="#7d8891" transform="rotate(17 9.3 76.0)"/><ellipse cx="13.7" cy="74.0" rx="2.9" ry="1.7" fill="#6f7c88" transform="rotate(-11 13.7 74.0)"/><ellipse cx="19.0" cy="75.3" rx="3.5" ry="2.1" fill="#a9b3bc" transform="rotate(15 19.0 75.3)"/><ellipse cx="25.3" cy="74.4" rx="2.4" ry="1.8" fill="#59646e" transform="rotate(-3 25.3 74.4)"/><ellipse cx="29.8" cy="74.0" rx="3.2" ry="2.2" fill="#59646e" transform="rotate(0 29.8 74.0)"/><ellipse cx="36.1" cy="75.1" rx="3.1" ry="1.8" fill="#6f7c88" transform="rotate(-16 36.1 75.1)"/><ellipse cx="41.7" cy="75.1" rx="2.5" ry="2.0" fill="#5f6f80" transform="rotate(16 41.7 75.1)"/><ellipse cx="46.1" cy="75.2" rx="2.8" ry="1.6" fill="#a9b3bc" transform="rotate(2 46.1 75.2)"/><ellipse cx="51.4" cy="75.5" rx="3.7" ry="2.0" fill="#b3b9bf" transform="rotate(8 51.4 75.5)"/><ellipse cx="58.4" cy="75.3" rx="3.8" ry="1.8" fill="#737b82" transform="rotate(13 58.4 75.3)"/><ellipse cx="65.1" cy="74.8" rx="3.3" ry="2.0" fill="#59646e" transform="rotate(-17 65.1 74.8)"/><ellipse cx="71.1" cy="74.0" rx="3.1" ry="1.9" fill="#9b948c" transform="rotate(15 71.1 74.0)"/><ellipse cx="77.1" cy="74.5" rx="3.5" ry="1.6" fill="#7d8891" transform="rotate(8 77.1 74.5)"/><ellipse cx="83.5" cy="75.7" rx="2.9" ry="1.8" fill="#444c55" transform="rotate(0 83.5 75.7)"/><ellipse cx="88.9" cy="74.4" rx="2.6" ry="1.5" fill="#444c55" transform="rotate(11 88.9 74.4)"/><ellipse cx="93.9" cy="74.5" rx="2.7" ry="1.9" fill="#b3b9bf" transform="rotate(0 93.9 74.5)"/><ellipse cx="99.4" cy="74.5" rx="3.2" ry="2.3" fill="#6f7c88" transform="rotate(-6 99.4 74.5)"/><ellipse cx="105.4" cy="75.6" rx="3.4" ry="1.7" fill="#6f7c88" transform="rotate(1 105.4 75.6)"/><ellipse cx="111.8" cy="74.6" rx="2.8" ry="1.6" fill="#59646e" transform="rotate(19 111.8 74.6)"/><ellipse cx="116.7" cy="74.8" rx="3.6" ry="2.3" fill="#9b948c" transform="rotate(11 116.7 74.8)"/><ellipse cx="123.3" cy="75.5" rx="3.6" ry="2.1" fill="#d6d3cc" transform="rotate(-17 123.3 75.5)"/><ellipse cx="130.1" cy="74.2" rx="2.9" ry="2.0" fill="#444c55" transform="rotate(15 130.1 74.2)"/><ellipse cx="135.9" cy="75.8" rx="3.9" ry="2.0" fill="#5f6f80" transform="rotate(10 135.9 75.8)"/><ellipse cx="143.4" cy="74.7" rx="3.4" ry="1.6" fill="#6f7c88" transform="rotate(19 143.4 74.7)"/><ellipse cx="149.9" cy="74.5" rx="2.9" ry="2.1" fill="#8296a8" transform="rotate(-17 149.9 74.5)"/><ellipse cx="155.3" cy="74.5" rx="2.9" ry="2.4" fill="#7d8891" transform="rotate(-16 155.3 74.5)"/><ellipse cx="160.5" cy="75.8" rx="3.0" ry="2.2" fill="#59646e" transform="rotate(-14 160.5 75.8)"/><ellipse cx="165.7" cy="74.4" rx="3.0" ry="1.6" fill="#444c55" transform="rotate(2 165.7 74.4)"/><ellipse cx="171.7" cy="74.0" rx="2.9" ry="1.8" fill="#c4c9cd" transform="rotate(15 171.7 74.0)"/><ellipse cx="177.1" cy="75.1" rx="2.8" ry="2.2" fill="#6f7c88" transform="rotate(-17 177.1 75.1)"/><ellipse cx="182.6" cy="74.3" rx="3.2" ry="2.3" fill="#a9b3bc" transform="rotate(-8 182.6 74.3)"/><ellipse cx="-0.9" cy="77.1" rx="2.8" ry="2.4" fill="#7d8891" transform="rotate(7 -0.9 77.1)"/><ellipse cx="4.3" cy="78.3" rx="3.4" ry="1.8" fill="#9b948c" transform="rotate(5 4.3 78.3)"/><ellipse cx="11.0" cy="78.4" rx="3.9" ry="1.8" fill="#59646e" transform="rotate(10 11.0 78.4)"/><ellipse cx="18.1" cy="77.4" rx="3.7" ry="2.3" fill="#c4c9cd" transform="rotate(15 18.1 77.4)"/><ellipse cx="25.5" cy="77.0" rx="2.8" ry="1.7" fill="#a9b3bc" transform="rotate(15 25.5 77.0)"/><ellipse cx="30.7" cy="77.6" rx="3.2" ry="1.7" fill="#6f7c88" transform="rotate(14 30.7 77.6)"/><ellipse cx="36.7" cy="77.5" rx="3.2" ry="2.3" fill="#7d8891" transform="rotate(4 36.7 77.5)"/><ellipse cx="42.3" cy="77.1" rx="2.6" ry="2.1" fill="#8e9aa6" transform="rotate(8 42.3 77.1)"/><ellipse cx="47.7" cy="78.0" rx="2.5" ry="2.0" fill="#737b82" transform="rotate(16 47.7 78.0)"/><ellipse cx="52.4" cy="78.9" rx="4.1" ry="2.2" fill="#b3b9bf" transform="rotate(12 52.4 78.9)"/><ellipse cx="59.7" cy="79.0" rx="2.7" ry="1.9" fill="#c4c9cd" transform="rotate(-15 59.7 79.0)"/><ellipse cx="65.0" cy="78.7" rx="2.6" ry="2.1" fill="#9b948c" transform="rotate(-15 65.0 78.7)"/><ellipse cx="69.8" cy="79.0" rx="2.9" ry="1.7" fill="#737b82" transform="rotate(-11 69.8 79.0)"/><ellipse cx="75.0" cy="77.6" rx="3.3" ry="1.8" fill="#a9b3bc" transform="rotate(-6 75.0 77.6)"/><ellipse cx="81.6" cy="77.2" rx="3.4" ry="2.1" fill="#d6d3cc" transform="rotate(11 81.6 77.2)"/><ellipse cx="88.1" cy="78.5" rx="3.9" ry="2.0" fill="#444c55" transform="rotate(11 88.1 78.5)"/><ellipse cx="95.5" cy="77.3" rx="3.5" ry="1.7" fill="#96a3ae" transform="rotate(4 95.5 77.3)"/><ellipse cx="101.7" cy="77.7" rx="2.9" ry="1.8" fill="#444c55" transform="rotate(10 101.7 77.7)"/><ellipse cx="107.6" cy="78.5" rx="4.2" ry="2.2" fill="#9b948c" transform="rotate(5 107.6 78.5)"/><ellipse cx="115.1" cy="77.6" rx="3.6" ry="1.7" fill="#7d8891" transform="rotate(13 115.1 77.6)"/><ellipse cx="122.3" cy="76.6" rx="3.7" ry="1.7" fill="#6f7c88" transform="rotate(0 122.3 76.6)"/><ellipse cx="129.6" cy="79.0" rx="3.5" ry="1.8" fill="#59646e" transform="rotate(-11 129.6 79.0)"/><ellipse cx="136.7" cy="78.1" rx="3.0" ry="2.0" fill="#c4c9cd" transform="rotate(6 136.7 78.1)"/><ellipse cx="142.6" cy="78.7" rx="4.1" ry="1.9" fill="#8296a8" transform="rotate(19 142.6 78.7)"/><ellipse cx="149.9" cy="78.8" rx="3.8" ry="2.5" fill="#5f6f80" transform="rotate(4 149.9 78.8)"/><ellipse cx="156.7" cy="78.4" rx="3.3" ry="2.4" fill="#6f7c88" transform="rotate(10 156.7 78.4)"/><ellipse cx="162.7" cy="79.1" rx="4.1" ry="1.9" fill="#59646e" transform="rotate(-7 162.7 79.1)"/><ellipse cx="170.0" cy="77.4" rx="3.1" ry="2.2" fill="#8e9aa6" transform="rotate(9 170.0 77.4)"/><ellipse cx="176.2" cy="79.0" rx="3.4" ry="2.3" fill="#d6d3cc" transform="rotate(18 176.2 79.0)"/><ellipse cx="182.4" cy="77.7" rx="4.3" ry="1.9" fill="#737b82" transform="rotate(-2 182.4 77.7)"/><ellipse cx="-0.6" cy="81.9" rx="4.4" ry="2.1" fill="#59646e" transform="rotate(-8 -0.6 81.9)"/><ellipse cx="7.7" cy="79.6" rx="3.4" ry="1.9" fill="#7d8891" transform="rotate(8 7.7 79.6)"/><ellipse cx="14.2" cy="79.7" rx="4.4" ry="2.0" fill="#c4c9cd" transform="rotate(13 14.2 79.7)"/><ellipse cx="22.4" cy="82.3" rx="2.9" ry="1.8" fill="#9b948c" transform="rotate(7 22.4 82.3)"/><ellipse cx="28.4" cy="80.3" rx="4.4" ry="2.6" fill="#444c55" transform="rotate(-6 28.4 80.3)"/><ellipse cx="36.3" cy="80.5" rx="3.3" ry="2.6" fill="#737b82" transform="rotate(-19 36.3 80.5)"/><ellipse cx="42.5" cy="80.5" rx="4.3" ry="2.7" fill="#8e9aa6" transform="rotate(13 42.5 80.5)"/><ellipse cx="50.2" cy="79.8" rx="3.9" ry="2.0" fill="#6f7c88" transform="rotate(-15 50.2 79.8)"/><ellipse cx="57.3" cy="81.9" rx="3.2" ry="1.9" fill="#737b82" transform="rotate(10 57.3 81.9)"/><ellipse cx="63.2" cy="80.1" rx="4.1" ry="2.4" fill="#9b948c" transform="rotate(2 63.2 80.1)"/><ellipse cx="70.6" cy="80.8" rx="3.6" ry="1.8" fill="#7d8891" transform="rotate(4 70.6 80.8)"/><ellipse cx="77.2" cy="80.8" rx="3.5" ry="2.5" fill="#b3b9bf" transform="rotate(-3 77.2 80.8)"/><ellipse cx="83.5" cy="80.9" rx="3.8" ry="2.4" fill="#d6d3cc" transform="rotate(-1 83.5 80.9)"/><ellipse cx="90.3" cy="81.5" rx="2.9" ry="1.9" fill="#d6d3cc" transform="rotate(-14 90.3 81.5)"/><ellipse cx="95.5" cy="81.9" rx="4.5" ry="2.2" fill="#444c55" transform="rotate(0 95.5 81.9)"/><ellipse cx="103.6" cy="80.7" rx="3.3" ry="2.2" fill="#59646e" transform="rotate(19 103.6 80.7)"/><ellipse cx="109.6" cy="81.8" rx="3.5" ry="2.1" fill="#8e9aa6" transform="rotate(-9 109.6 81.8)"/><ellipse cx="116.2" cy="80.8" rx="4.1" ry="2.3" fill="#9b948c" transform="rotate(19 116.2 80.8)"/><ellipse cx="123.8" cy="79.7" rx="4.3" ry="2.2" fill="#d6d3cc" transform="rotate(10 123.8 79.7)"/><ellipse cx="132.2" cy="80.9" rx="3.5" ry="1.9" fill="#8296a8" transform="rotate(15 132.2 80.9)"/><ellipse cx="138.8" cy="81.4" rx="4.4" ry="2.1" fill="#5f6f80" transform="rotate(18 138.8 81.4)"/><ellipse cx="147.2" cy="81.7" rx="3.2" ry="2.6" fill="#737b82" transform="rotate(-3 147.2 81.7)"/><ellipse cx="153.0" cy="79.7" rx="4.3" ry="2.5" fill="#59646e" transform="rotate(13 153.0 79.7)"/><ellipse cx="160.6" cy="80.2" rx="3.5" ry="1.8" fill="#6f7c88" transform="rotate(-15 160.6 80.2)"/><ellipse cx="167.7" cy="82.1" rx="4.3" ry="2.5" fill="#96a3ae" transform="rotate(-16 167.7 82.1)"/><ellipse cx="176.1" cy="80.9" rx="3.3" ry="1.8" fill="#5f6f80" transform="rotate(-14 176.1 80.9)"/><ellipse cx="182.8" cy="81.3" rx="3.2" ry="2.2" fill="#9b948c" transform="rotate(-8 182.8 81.3)"/><ellipse cx="-3.2" cy="84.5" rx="3.6" ry="2.4" fill="#7d8891" transform="rotate(-8 -3.2 84.5)"/><ellipse cx="3.2" cy="84.1" rx="4.0" ry="2.2" fill="#5f6f80" transform="rotate(5 3.2 84.1)"/><ellipse cx="10.2" cy="82.8" rx="3.1" ry="2.5" fill="#737b82" transform="rotate(-13 10.2 82.8)"/><ellipse cx="16.0" cy="85.4" rx="3.5" ry="2.8" fill="#d6d3cc" transform="rotate(6 16.0 85.4)"/><ellipse cx="23.0" cy="83.0" rx="4.5" ry="2.1" fill="#737b82" transform="rotate(-10 23.0 83.0)"/><ellipse cx="31.9" cy="83.2" rx="4.3" ry="2.7" fill="#5f6f80" transform="rotate(16 31.9 83.2)"/><ellipse cx="40.1" cy="83.8" rx="4.2" ry="2.4" fill="#737b82" transform="rotate(-4 40.1 83.8)"/><ellipse cx="48.0" cy="83.8" rx="4.8" ry="2.1" fill="#96a3ae" transform="rotate(10 48.0 83.8)"/><ellipse cx="57.0" cy="85.7" rx="4.7" ry="2.3" fill="#59646e" transform="rotate(-17 57.0 85.7)"/><ellipse cx="65.7" cy="85.1" rx="2.9" ry="1.9" fill="#96a3ae" transform="rotate(-13 65.7 85.1)"/><ellipse cx="71.3" cy="83.9" rx="3.6" ry="2.2" fill="#8296a8" transform="rotate(-13 71.3 83.9)"/><ellipse cx="78.4" cy="83.8" rx="3.1" ry="2.5" fill="#96a3ae" transform="rotate(-10 78.4 83.8)"/><ellipse cx="84.9" cy="84.3" rx="4.6" ry="2.3" fill="#a9b3bc" transform="rotate(-16 84.9 84.3)"/><ellipse cx="93.7" cy="84.8" rx="4.0" ry="2.2" fill="#444c55" transform="rotate(-9 93.7 84.8)"/><ellipse cx="101.5" cy="84.7" rx="2.9" ry="2.0" fill="#c4c9cd" transform="rotate(7 101.5 84.7)"/><ellipse cx="106.6" cy="84.3" rx="4.0" ry="2.6" fill="#d6d3cc" transform="rotate(-15 106.6 84.3)"/><ellipse cx="114.0" cy="83.6" rx="3.5" ry="2.1" fill="#96a3ae" transform="rotate(-9 114.0 83.6)"/><ellipse cx="120.9" cy="84.0" rx="3.1" ry="2.5" fill="#444c55" transform="rotate(9 120.9 84.0)"/><ellipse cx="127.1" cy="83.8" rx="4.6" ry="2.2" fill="#8e9aa6" transform="rotate(0 127.1 83.8)"/><ellipse cx="135.3" cy="84.7" rx="3.2" ry="2.7" fill="#737b82" transform="rotate(10 135.3 84.7)"/><ellipse cx="141.6" cy="84.3" rx="4.4" ry="2.7" fill="#96a3ae" transform="rotate(4 141.6 84.3)"/><ellipse cx="150.0" cy="83.9" rx="2.9" ry="2.5" fill="#a9b3bc" transform="rotate(0 150.0 83.9)"/><ellipse cx="155.9" cy="85.4" rx="3.6" ry="2.5" fill="#9b948c" transform="rotate(-15 155.9 85.4)"/><ellipse cx="162.9" cy="84.5" rx="3.7" ry="2.5" fill="#9b948c" transform="rotate(0 162.9 84.5)"/><ellipse cx="170.1" cy="85.6" rx="4.8" ry="2.0" fill="#8296a8" transform="rotate(16 170.1 85.6)"/><ellipse cx="178.9" cy="83.2" rx="4.0" ry="1.9" fill="#8296a8" transform="rotate(-1 178.9 83.2)"/><ellipse cx="-2.6" cy="88.2" rx="4.1" ry="2.8" fill="#96a3ae" transform="rotate(-7 -2.6 88.2)"/><ellipse cx="4.9" cy="87.6" rx="4.1" ry="2.2" fill="#59646e" transform="rotate(17 4.9 87.6)"/><ellipse cx="12.5" cy="88.7" rx="5.1" ry="2.8" fill="#b3b9bf" transform="rotate(18 12.5 88.7)"/><ellipse cx="22.2" cy="87.1" rx="4.3" ry="3.0" fill="#7d8891" transform="rotate(4 22.2 87.1)"/><ellipse cx="29.9" cy="86.6" rx="4.9" ry="2.4" fill="#9b948c" transform="rotate(0 29.9 86.6)"/><ellipse cx="38.5" cy="87.7" rx="3.6" ry="2.3" fill="#6f7c88" transform="rotate(5 38.5 87.7)"/><ellipse cx="45.2" cy="86.5" rx="3.1" ry="2.5" fill="#a9b3bc" transform="rotate(-9 45.2 86.5)"/><ellipse cx="51.5" cy="89.4" rx="3.9" ry="2.2" fill="#8e9aa6" transform="rotate(-1 51.5 89.4)"/><ellipse cx="58.5" cy="88.1" rx="5.2" ry="2.2" fill="#8e9aa6" transform="rotate(-13 58.5 88.1)"/><ellipse cx="68.1" cy="86.2" rx="4.4" ry="2.4" fill="#c4c9cd" transform="rotate(4 68.1 86.2)"/><ellipse cx="76.7" cy="88.1" rx="5.0" ry="2.7" fill="#8e9aa6" transform="rotate(19 76.7 88.1)"/><ellipse cx="85.4" cy="88.8" rx="3.6" ry="2.0" fill="#7d8891" transform="rotate(-18 85.4 88.8)"/><ellipse cx="92.8" cy="89.3" rx="4.1" ry="3.0" fill="#6f7c88" transform="rotate(10 92.8 89.3)"/><ellipse cx="100.7" cy="87.7" rx="3.5" ry="2.3" fill="#c4c9cd" transform="rotate(-3 100.7 87.7)"/><ellipse cx="107.6" cy="87.1" rx="4.5" ry="2.6" fill="#737b82" transform="rotate(17 107.6 87.1)"/><ellipse cx="116.2" cy="86.7" rx="3.3" ry="2.2" fill="#c4c9cd" transform="rotate(7 116.2 86.7)"/><ellipse cx="122.9" cy="88.0" rx="4.4" ry="2.5" fill="#6f7c88" transform="rotate(-18 122.9 88.0)"/><ellipse cx="130.6" cy="87.9" rx="3.2" ry="2.1" fill="#8e9aa6" transform="rotate(-3 130.6 87.9)"/><ellipse cx="137.2" cy="88.3" rx="4.8" ry="2.4" fill="#d6d3cc" transform="rotate(-13 137.2 88.3)"/><ellipse cx="146.6" cy="88.3" rx="4.6" ry="2.3" fill="#6f7c88" transform="rotate(19 146.6 88.3)"/><ellipse cx="155.4" cy="86.8" rx="5.2" ry="2.8" fill="#b3b9bf" transform="rotate(-10 155.4 86.8)"/><ellipse cx="164.7" cy="87.4" rx="4.5" ry="2.7" fill="#8e9aa6" transform="rotate(-18 164.7 87.4)"/><ellipse cx="173.1" cy="87.3" rx="4.0" ry="2.5" fill="#5f6f80" transform="rotate(11 173.1 87.3)"/><ellipse cx="180.6" cy="86.6" rx="5.2" ry="2.9" fill="#d6d3cc" transform="rotate(-18 180.6 86.6)"/><ellipse cx="-3.0" cy="93.0" rx="5.2" ry="2.5" fill="#444c55" transform="rotate(10 -3.0 93.0)"/><ellipse cx="7.1" cy="91.8" rx="3.7" ry="3.1" fill="#d6d3cc" transform="rotate(-19 7.1 91.8)"/><ellipse cx="13.7" cy="91.8" rx="3.4" ry="2.9" fill="#59646e" transform="rotate(8 13.7 91.8)"/><ellipse cx="19.9" cy="93.0" rx="5.1" ry="3.0" fill="#9b948c" transform="rotate(-10 19.9 93.0)"/><ellipse cx="28.8" cy="90.4" rx="5.3" ry="3.1" fill="#8e9aa6" transform="rotate(11 28.8 90.4)"/><ellipse cx="38.7" cy="91.4" rx="3.5" ry="2.1" fill="#96a3ae" transform="rotate(13 38.7 91.4)"/><ellipse cx="45.8" cy="92.0" rx="3.9" ry="3.0" fill="#8e9aa6" transform="rotate(-7 45.8 92.0)"/><ellipse cx="53.3" cy="93.1" rx="3.9" ry="3.2" fill="#7d8891" transform="rotate(0 53.3 93.1)"/><ellipse cx="60.7" cy="91.3" rx="4.8" ry="2.9" fill="#8e9aa6" transform="rotate(11 60.7 91.3)"/><ellipse cx="69.8" cy="90.2" rx="5.2" ry="2.1" fill="#96a3ae" transform="rotate(7 69.8 90.2)"/><ellipse cx="79.0" cy="90.9" rx="3.8" ry="2.4" fill="#6f7c88" transform="rotate(6 79.0 90.9)"/><ellipse cx="85.8" cy="91.8" rx="3.5" ry="3.2" fill="#8e9aa6" transform="rotate(-7 85.8 91.8)"/><ellipse cx="92.2" cy="92.1" rx="4.9" ry="3.2" fill="#444c55" transform="rotate(-4 92.2 92.1)"/><ellipse cx="101.9" cy="91.6" rx="3.9" ry="2.4" fill="#737b82" transform="rotate(-17 101.9 91.6)"/><ellipse cx="109.7" cy="91.5" rx="4.5" ry="2.8" fill="#444c55" transform="rotate(18 109.7 91.5)"/><ellipse cx="118.5" cy="91.1" rx="4.4" ry="3.1" fill="#7d8891" transform="rotate(-9 118.5 91.1)"/><ellipse cx="127.3" cy="92.0" rx="3.3" ry="2.2" fill="#d6d3cc" transform="rotate(13 127.3 92.0)"/><ellipse cx="133.6" cy="91.1" rx="3.8" ry="3.1" fill="#8296a8" transform="rotate(-11 133.6 91.1)"/><ellipse cx="141.2" cy="91.4" rx="5.1" ry="3.1" fill="#444c55" transform="rotate(-1 141.2 91.4)"/><ellipse cx="150.2" cy="91.3" rx="4.0" ry="2.8" fill="#5f6f80" transform="rotate(7 150.2 91.3)"/><ellipse cx="157.4" cy="91.7" rx="4.4" ry="3.0" fill="#5f6f80" transform="rotate(-1 157.4 91.7)"/><ellipse cx="166.0" cy="91.3" rx="5.1" ry="3.1" fill="#7d8891" transform="rotate(-11 166.0 91.3)"/><ellipse cx="175.3" cy="92.3" rx="4.1" ry="3.2" fill="#9b948c" transform="rotate(-16 175.3 92.3)"/><ellipse cx="182.8" cy="90.0" rx="3.3" ry="2.4" fill="#a9b3bc" transform="rotate(-2 182.8 90.0)"/><ellipse cx="-2.7" cy="94.0" rx="5.0" ry="2.6" fill="#a9b3bc" transform="rotate(-11 -2.7 94.0)"/><ellipse cx="6.9" cy="93.9" rx="4.9" ry="2.4" fill="#59646e" transform="rotate(-13 6.9 93.9)"/><ellipse cx="16.1" cy="96.7" rx="5.7" ry="2.4" fill="#7d8891" transform="rotate(12 16.1 96.7)"/><ellipse cx="26.1" cy="94.5" rx="5.1" ry="2.5" fill="#6f7c88" transform="rotate(16 26.1 94.5)"/><ellipse cx="35.3" cy="96.1" rx="5.4" ry="2.6" fill="#444c55" transform="rotate(11 35.3 96.1)"/><ellipse cx="45.0" cy="96.4" rx="4.7" ry="3.4" fill="#737b82" transform="rotate(-6 45.0 96.4)"/><ellipse cx="54.2" cy="94.9" rx="5.5" ry="3.3" fill="#a9b3bc" transform="rotate(8 54.2 94.9)"/><ellipse cx="64.7" cy="94.9" rx="5.1" ry="3.4" fill="#8e9aa6" transform="rotate(3 64.7 94.9)"/><ellipse cx="74.8" cy="94.1" rx="5.9" ry="2.7" fill="#c4c9cd" transform="rotate(8 74.8 94.1)"/><ellipse cx="85.4" cy="95.8" rx="5.6" ry="2.6" fill="#59646e" transform="rotate(8 85.4 95.8)"/><ellipse cx="95.9" cy="94.6" rx="5.7" ry="3.0" fill="#8296a8" transform="rotate(15 95.9 94.6)"/><ellipse cx="106.4" cy="95.8" rx="3.7" ry="2.5" fill="#8e9aa6" transform="rotate(18 106.4 95.8)"/><ellipse cx="114.0" cy="94.3" rx="3.9" ry="2.8" fill="#5f6f80" transform="rotate(16 114.0 94.3)"/><ellipse cx="121.5" cy="96.7" rx="4.0" ry="3.1" fill="#737b82" transform="rotate(0 121.5 96.7)"/><ellipse cx="129.5" cy="94.6" rx="5.1" ry="3.4" fill="#444c55" transform="rotate(-14 129.5 94.6)"/><ellipse cx="139.6" cy="95.6" rx="5.6" ry="2.6" fill="#d6d3cc" transform="rotate(-5 139.6 95.6)"/><ellipse cx="149.8" cy="94.1" rx="4.0" ry="2.5" fill="#5f6f80" transform="rotate(16 149.8 94.1)"/><ellipse cx="157.7" cy="94.4" rx="4.0" ry="2.5" fill="#c4c9cd" transform="rotate(7 157.7 94.4)"/><ellipse cx="165.3" cy="96.6" rx="5.8" ry="3.0" fill="#737b82" transform="rotate(12 165.3 96.6)"/><ellipse cx="176.0" cy="96.6" rx="5.7" ry="2.7" fill="#737b82" transform="rotate(15 176.0 96.6)"/><ellipse cx="-3.3" cy="98.3" rx="4.5" ry="3.3" fill="#9b948c" transform="rotate(10 -3.3 98.3)"/><ellipse cx="5.0" cy="99.8" rx="4.8" ry="3.0" fill="#d6d3cc" transform="rotate(-13 5.0 99.8)"/><ellipse cx="13.8" cy="98.9" rx="5.4" ry="3.1" fill="#8296a8" transform="rotate(-10 13.8 98.9)"/><ellipse cx="23.4" cy="98.1" rx="5.9" ry="3.3" fill="#737b82" transform="rotate(18 23.4 98.1)"/><ellipse cx="34.9" cy="98.5" rx="4.0" ry="3.5" fill="#a9b3bc" transform="rotate(-19 34.9 98.5)"/><ellipse cx="42.9" cy="98.0" rx="3.7" ry="2.8" fill="#5f6f80" transform="rotate(-2 42.9 98.0)"/><ellipse cx="49.9" cy="98.8" rx="5.9" ry="3.3" fill="#59646e" transform="rotate(-12 49.9 98.8)"/><ellipse cx="61.0" cy="101.5" rx="4.7" ry="3.2" fill="#d6d3cc" transform="rotate(-8 61.0 101.5)"/><ellipse cx="70.2" cy="99.8" rx="6.0" ry="2.5" fill="#5f6f80" transform="rotate(19 70.2 99.8)"/><ellipse cx="81.6" cy="98.7" rx="5.7" ry="3.7" fill="#a9b3bc" transform="rotate(-9 81.6 98.7)"/><ellipse cx="92.7" cy="98.6" rx="6.2" ry="2.9" fill="#d6d3cc" transform="rotate(18 92.7 98.6)"/><ellipse cx="103.7" cy="98.0" rx="5.2" ry="2.8" fill="#96a3ae" transform="rotate(9 103.7 98.0)"/><ellipse cx="114.0" cy="98.3" rx="5.5" ry="3.0" fill="#8e9aa6" transform="rotate(-16 114.0 98.3)"/><ellipse cx="123.9" cy="98.5" rx="5.3" ry="3.3" fill="#8296a8" transform="rotate(-7 123.9 98.5)"/><ellipse cx="133.8" cy="100.7" rx="4.9" ry="3.4" fill="#a9b3bc" transform="rotate(-7 133.8 100.7)"/><ellipse cx="143.0" cy="100.5" rx="4.2" ry="3.2" fill="#59646e" transform="rotate(-14 143.0 100.5)"/><ellipse cx="150.8" cy="98.9" rx="4.2" ry="3.1" fill="#d6d3cc" transform="rotate(18 150.8 98.9)"/><ellipse cx="159.4" cy="98.4" rx="3.7" ry="2.6" fill="#59646e" transform="rotate(0 159.4 98.4)"/><ellipse cx="166.7" cy="99.4" rx="3.9" ry="2.8" fill="#8296a8" transform="rotate(-18 166.7 99.4)"/><ellipse cx="174.3" cy="100.0" rx="6.1" ry="2.8" fill="#737b82" transform="rotate(-11 174.3 100.0)"/><ellipse cx="-3.9" cy="104.1" rx="5.6" ry="2.9" fill="#b3b9bf" transform="rotate(11 -3.9 104.1)"/><ellipse cx="6.2" cy="104.7" rx="4.7" ry="2.6" fill="#a9b3bc" transform="rotate(-19 6.2 104.7)"/><ellipse cx="14.5" cy="106.1" rx="3.9" ry="3.7" fill="#c4c9cd" transform="rotate(-6 14.5 106.1)"/><ellipse cx="22.7" cy="106.2" rx="5.0" ry="2.7" fill="#c4c9cd" transform="rotate(-8 22.7 106.2)"/><ellipse cx="32.1" cy="103.6" rx="5.1" ry="3.0" fill="#a9b3bc" transform="rotate(-16 32.1 103.6)"/><ellipse cx="41.8" cy="105.3" rx="6.1" ry="3.4" fill="#444c55" transform="rotate(-10 41.8 105.3)"/><ellipse cx="53.2" cy="103.5" rx="6.0" ry="3.0" fill="#5f6f80" transform="rotate(1 53.2 103.5)"/><ellipse cx="64.4" cy="103.1" rx="6.2" ry="3.0" fill="#96a3ae" transform="rotate(-8 64.4 103.1)"/><ellipse cx="76.3" cy="103.8" rx="6.1" ry="3.7" fill="#b3b9bf" transform="rotate(-3 76.3 103.8)"/><ellipse cx="87.0" cy="102.3" rx="4.4" ry="3.5" fill="#7d8891" transform="rotate(19 87.0 102.3)"/><ellipse cx="95.9" cy="106.2" rx="4.8" ry="2.6" fill="#737b82" transform="rotate(19 95.9 106.2)"/><ellipse cx="105.3" cy="103.8" rx="6.2" ry="3.0" fill="#5f6f80" transform="rotate(-17 105.3 103.8)"/><ellipse cx="116.7" cy="106.2" rx="5.0" ry="2.9" fill="#6f7c88" transform="rotate(-16 116.7 106.2)"/><ellipse cx="125.7" cy="103.2" rx="4.1" ry="3.0" fill="#c4c9cd" transform="rotate(-18 125.7 103.2)"/><ellipse cx="133.2" cy="104.3" rx="5.9" ry="3.2" fill="#59646e" transform="rotate(13 133.2 104.3)"/><ellipse cx="144.6" cy="105.4" rx="6.6" ry="2.8" fill="#d6d3cc" transform="rotate(-14 144.6 105.4)"/><ellipse cx="156.5" cy="103.3" rx="4.5" ry="2.7" fill="#6f7c88" transform="rotate(-11 156.5 103.3)"/><ellipse cx="165.5" cy="103.5" rx="6.0" ry="2.6" fill="#8296a8" transform="rotate(2 165.5 103.5)"/><ellipse cx="176.1" cy="104.9" rx="4.5" ry="3.1" fill="#8e9aa6" transform="rotate(16 176.1 104.9)"/><ellipse cx="184.4" cy="102.9" rx="6.5" ry="3.0" fill="#737b82" transform="rotate(-18 184.4 102.9)"/><ellipse cx="-1.2" cy="108.7" rx="4.2" ry="2.8" fill="#a9b3bc" transform="rotate(-9 -1.2 108.7)"/><ellipse cx="6.3" cy="107.8" rx="6.8" ry="3.1" fill="#8296a8" transform="rotate(-15 6.3 107.8)"/><ellipse cx="19.0" cy="107.3" rx="6.7" ry="3.0" fill="#d6d3cc" transform="rotate(17 19.0 107.3)"/><ellipse cx="31.0" cy="107.4" rx="6.2" ry="2.9" fill="#96a3ae" transform="rotate(-3 31.0 107.4)"/><ellipse cx="42.3" cy="111.1" rx="6.8" ry="3.7" fill="#444c55" transform="rotate(-15 42.3 111.1)"/><ellipse cx="55.3" cy="107.6" rx="4.8" ry="3.7" fill="#59646e" transform="rotate(9 55.3 107.6)"/><ellipse cx="64.1" cy="108.4" rx="4.8" ry="3.6" fill="#8296a8" transform="rotate(-12 64.1 108.4)"/><ellipse cx="72.8" cy="108.2" rx="4.4" ry="2.9" fill="#8e9aa6" transform="rotate(-4 72.8 108.2)"/><ellipse cx="81.6" cy="108.2" rx="6.4" ry="3.4" fill="#b3b9bf" transform="rotate(15 81.6 108.2)"/><ellipse cx="93.1" cy="109.6" rx="5.3" ry="3.6" fill="#444c55" transform="rotate(9 93.1 109.6)"/><ellipse cx="103.8" cy="107.3" rx="5.6" ry="3.7" fill="#6f7c88" transform="rotate(-10 103.8 107.3)"/><ellipse cx="114.4" cy="110.1" rx="6.2" ry="3.9" fill="#5f6f80" transform="rotate(9 114.4 110.1)"/><ellipse cx="125.6" cy="109.3" rx="6.5" ry="3.3" fill="#59646e" transform="rotate(3 125.6 109.3)"/><ellipse cx="137.7" cy="109.2" rx="6.1" ry="3.7" fill="#8e9aa6" transform="rotate(11 137.7 109.2)"/><ellipse cx="149.1" cy="109.2" rx="5.0" ry="2.7" fill="#9b948c" transform="rotate(7 149.1 109.2)"/><ellipse cx="158.7" cy="110.1" rx="6.3" ry="3.6" fill="#5f6f80" transform="rotate(18 158.7 110.1)"/><ellipse cx="170.2" cy="107.3" rx="5.0" ry="3.4" fill="#59646e" transform="rotate(-3 170.2 107.3)"/><ellipse cx="180.3" cy="108.5" rx="4.7" ry="2.7" fill="#c4c9cd" transform="rotate(13 180.3 108.5)"/><ellipse cx="-3.7" cy="114.8" rx="6.7" ry="4.3" fill="#b3b9bf" transform="rotate(6 -3.7 114.8)"/><ellipse cx="8.1" cy="115.0" rx="5.5" ry="3.1" fill="#a9b3bc" transform="rotate(17 8.1 115.0)"/><ellipse cx="18.7" cy="113.4" rx="5.2" ry="3.7" fill="#8e9aa6" transform="rotate(17 18.7 113.4)"/><ellipse cx="28.9" cy="112.8" rx="7.1" ry="3.9" fill="#96a3ae" transform="rotate(2 28.9 112.8)"/><ellipse cx="42.5" cy="115.0" rx="7.4" ry="3.6" fill="#8e9aa6" transform="rotate(-11 42.5 115.0)"/><ellipse cx="56.0" cy="115.8" rx="6.6" ry="4.3" fill="#6f7c88" transform="rotate(2 56.0 115.8)"/><ellipse cx="68.9" cy="116.2" rx="6.5" ry="3.5" fill="#d6d3cc" transform="rotate(0 68.9 116.2)"/><ellipse cx="81.6" cy="112.4" rx="7.1" ry="3.8" fill="#96a3ae" transform="rotate(13 81.6 112.4)"/><ellipse cx="95.1" cy="114.3" rx="7.3" ry="3.3" fill="#444c55" transform="rotate(6 95.1 114.3)"/><ellipse cx="108.2" cy="113.1" rx="4.8" ry="3.8" fill="#9b948c" transform="rotate(-19 108.2 113.1)"/><ellipse cx="118.1" cy="115.7" rx="7.3" ry="3.7" fill="#a9b3bc" transform="rotate(3 118.1 115.7)"/><ellipse cx="131.8" cy="115.1" rx="6.0" ry="4.2" fill="#c4c9cd" transform="rotate(16 131.8 115.1)"/><ellipse cx="143.1" cy="114.6" rx="6.9" ry="3.5" fill="#7d8891" transform="rotate(-19 143.1 114.6)"/><ellipse cx="155.8" cy="115.6" rx="5.6" ry="4.1" fill="#96a3ae" transform="rotate(-4 155.8 115.6)"/><ellipse cx="166.5" cy="114.8" rx="6.7" ry="3.3" fill="#8e9aa6" transform="rotate(-18 166.5 114.8)"/><ellipse cx="179.5" cy="114.5" rx="7.0" ry="2.9" fill="#d6d3cc" transform="rotate(7 179.5 114.5)"/><ellipse cx="-1.4" cy="117.7" rx="6.3" ry="4.5" fill="#d6d3cc" transform="rotate(-1 -1.4 117.7)"/><ellipse cx="10.1" cy="119.4" rx="7.6" ry="3.9" fill="#7d8891" transform="rotate(-4 10.1 119.4)"/><ellipse cx="23.6" cy="118.7" rx="6.4" ry="3.6" fill="#6f7c88" transform="rotate(-18 23.6 118.7)"/><ellipse cx="35.5" cy="121.2" rx="7.4" ry="3.2" fill="#6f7c88" transform="rotate(-7 35.5 121.2)"/><ellipse cx="48.9" cy="118.1" rx="5.9" ry="3.3" fill="#d6d3cc" transform="rotate(0 48.9 118.1)"/><ellipse cx="60.9" cy="122.1" rx="8.0" ry="4.5" fill="#8296a8" transform="rotate(10 60.9 122.1)"/><ellipse cx="75.4" cy="119.2" rx="7.4" ry="3.4" fill="#7d8891" transform="rotate(1 75.4 119.2)"/><ellipse cx="89.1" cy="119.2" rx="6.6" ry="4.7" fill="#b3b9bf" transform="rotate(10 89.1 119.2)"/><ellipse cx="101.0" cy="117.3" rx="6.4" ry="3.3" fill="#9b948c" transform="rotate(17 101.0 117.3)"/><ellipse cx="113.4" cy="119.8" rx="5.7" ry="3.8" fill="#8e9aa6" transform="rotate(-12 113.4 119.8)"/><ellipse cx="124.5" cy="120.0" rx="6.5" ry="3.3" fill="#6f7c88" transform="rotate(19 124.5 120.0)"/><ellipse cx="137.5" cy="117.4" rx="5.4" ry="4.6" fill="#444c55" transform="rotate(1 137.5 117.4)"/><ellipse cx="147.1" cy="120.2" rx="5.6" ry="3.6" fill="#d6d3cc" transform="rotate(-8 147.1 120.2)"/><ellipse cx="157.1" cy="118.7" rx="7.5" ry="3.7" fill="#59646e" transform="rotate(15 157.1 118.7)"/><ellipse cx="171.6" cy="120.3" rx="5.3" ry="4.4" fill="#b3b9bf" transform="rotate(-7 171.6 120.3)"/><ellipse cx="180.9" cy="119.6" rx="6.4" ry="3.6" fill="#7d8891" transform="rotate(-18 180.9 119.6)"/><ellipse cx="-1.9" cy="125.2" rx="6.0" ry="4.8" fill="#c4c9cd" transform="rotate(-5 -1.9 125.2)"/><ellipse cx="9.6" cy="123.2" rx="7.9" ry="4.6" fill="#d6d3cc" transform="rotate(0 9.6 123.2)"/><ellipse cx="23.7" cy="124.8" rx="7.6" ry="3.3" fill="#737b82" transform="rotate(5 23.7 124.8)"/><ellipse cx="37.2" cy="123.7" rx="8.1" ry="4.6" fill="#7d8891" transform="rotate(-19 37.2 123.7)"/><ellipse cx="52.1" cy="125.5" rx="5.0" ry="4.8" fill="#8e9aa6" transform="rotate(8 52.1 125.5)"/><ellipse cx="61.5" cy="128.2" rx="6.1" ry="3.3" fill="#5f6f80" transform="rotate(19 61.5 128.2)"/><ellipse cx="72.2" cy="126.4" rx="5.6" ry="3.8" fill="#96a3ae" transform="rotate(1 72.2 126.4)"/><ellipse cx="82.0" cy="127.5" rx="5.6" ry="4.4" fill="#5f6f80" transform="rotate(-18 82.0 127.5)"/><ellipse cx="92.3" cy="126.8" rx="5.2" ry="4.5" fill="#c4c9cd" transform="rotate(2 92.3 126.8)"/><ellipse cx="101.8" cy="123.2" rx="7.2" ry="4.7" fill="#5f6f80" transform="rotate(11 101.8 123.2)"/><ellipse cx="115.0" cy="123.6" rx="8.0" ry="3.4" fill="#5f6f80" transform="rotate(-2 115.0 123.6)"/><ellipse cx="130.3" cy="125.9" rx="6.7" ry="3.5" fill="#737b82" transform="rotate(8 130.3 125.9)"/><ellipse cx="142.1" cy="125.6" rx="6.7" ry="3.6" fill="#444c55" transform="rotate(-2 142.1 125.6)"/><ellipse cx="153.9" cy="126.4" rx="8.3" ry="3.3" fill="#6f7c88" transform="rotate(-14 153.9 126.4)"/><ellipse cx="170.0" cy="127.0" rx="6.0" ry="4.8" fill="#737b82" transform="rotate(18 170.0 127.0)"/><ellipse cx="182.0" cy="127.3" rx="5.8" ry="4.6" fill="#96a3ae" transform="rotate(1 182.0 127.3)"/><ellipse cx="-2.2" cy="130.0" rx="8.0" ry="3.6" fill="#444c55" transform="rotate(-18 -2.2 130.0)"/><ellipse cx="12.7" cy="133.2" rx="8.7" ry="3.9" fill="#8e9aa6" transform="rotate(0 12.7 133.2)"/><ellipse cx="29.4" cy="133.6" rx="9.0" ry="5.1" fill="#6f7c88" transform="rotate(2 29.4 133.6)"/><ellipse cx="46.6" cy="131.3" rx="6.1" ry="5.3" fill="#5f6f80" transform="rotate(0 46.6 131.3)"/><ellipse cx="58.9" cy="131.4" rx="7.4" ry="4.4" fill="#c4c9cd" transform="rotate(-3 58.9 131.4)"/><ellipse cx="72.1" cy="132.8" rx="5.5" ry="4.7" fill="#d6d3cc" transform="rotate(5 72.1 132.8)"/><ellipse cx="82.6" cy="134.0" rx="5.8" ry="4.6" fill="#8296a8" transform="rotate(16 82.6 134.0)"/><ellipse cx="94.1" cy="129.5" rx="5.8" ry="5.0" fill="#737b82" transform="rotate(-2 94.1 129.5)"/><ellipse cx="105.1" cy="134.3" rx="8.7" ry="3.7" fill="#444c55" transform="rotate(-13 105.1 134.3)"/><ellipse cx="120.5" cy="130.6" rx="5.4" ry="5.1" fill="#96a3ae" transform="rotate(4 120.5 130.6)"/><ellipse cx="131.4" cy="130.7" rx="8.7" ry="3.8" fill="#6f7c88" transform="rotate(-8 131.4 130.7)"/><ellipse cx="147.6" cy="131.4" rx="6.6" ry="4.3" fill="#8e9aa6" transform="rotate(-13 147.6 131.4)"/><ellipse cx="160.4" cy="133.5" rx="8.1" ry="3.8" fill="#a9b3bc" transform="rotate(-12 160.4 133.5)"/><ellipse cx="176.5" cy="132.6" rx="7.3" ry="3.8" fill="#a9b3bc" transform="rotate(0 176.5 132.6)"/><ellipse cx="-0.4" cy="136.0" rx="8.9" ry="4.7" fill="#c4c9cd" transform="rotate(-1 -0.4 136.0)"/><ellipse cx="17.1" cy="141.2" rx="7.8" ry="4.6" fill="#737b82" transform="rotate(9 17.1 141.2)"/><ellipse cx="30.8" cy="137.3" rx="6.6" ry="4.8" fill="#b3b9bf" transform="rotate(-4 30.8 137.3)"/><ellipse cx="44.4" cy="140.8" rx="8.8" ry="4.8" fill="#b3b9bf" transform="rotate(9 44.4 140.8)"/><ellipse cx="61.2" cy="136.8" rx="6.4" ry="4.6" fill="#b3b9bf" transform="rotate(0 61.2 136.8)"/><ellipse cx="72.9" cy="135.4" rx="6.8" ry="3.7" fill="#7d8891" transform="rotate(-14 72.9 135.4)"/><ellipse cx="86.2" cy="135.4" rx="8.2" ry="4.5" fill="#b3b9bf" transform="rotate(-6 86.2 135.4)"/><ellipse cx="102.2" cy="135.8" rx="8.8" ry="4.7" fill="#444c55" transform="rotate(13 102.2 135.8)"/><ellipse cx="118.1" cy="137.1" rx="9.6" ry="5.3" fill="#a9b3bc" transform="rotate(0 118.1 137.1)"/><ellipse cx="137.0" cy="138.7" rx="8.5" ry="4.1" fill="#a9b3bc" transform="rotate(12 137.0 138.7)"/><ellipse cx="153.6" cy="140.3" rx="9.2" ry="3.7" fill="#737b82" transform="rotate(-11 153.6 140.3)"/><ellipse cx="171.1" cy="140.9" rx="6.4" ry="4.9" fill="#96a3ae" transform="rotate(-7 171.1 140.9)"/><ellipse cx="183.8" cy="137.7" rx="6.3" ry="3.8" fill="#a9b3bc" transform="rotate(6 183.8 137.7)"/><ellipse cx="-5.8" cy="143.8" rx="8.8" ry="4.6" fill="#d6d3cc" transform="rotate(-16 -5.8 143.8)"/><ellipse cx="11.0" cy="143.0" rx="8.2" ry="4.4" fill="#5f6f80" transform="rotate(14 11.0 143.0)"/><ellipse cx="25.8" cy="144.2" rx="8.1" ry="4.1" fill="#8296a8" transform="rotate(2 25.8 144.2)"/><ellipse cx="40.8" cy="145.7" rx="7.9" ry="5.8" fill="#737b82" transform="rotate(16 40.8 145.7)"/><ellipse cx="56.6" cy="142.5" rx="9.3" ry="5.5" fill="#a9b3bc" transform="rotate(-17 56.6 142.5)"/><ellipse cx="74.4" cy="147.8" rx="9.1" ry="4.8" fill="#8296a8" transform="rotate(-19 74.4 147.8)"/><ellipse cx="92.4" cy="142.7" rx="6.6" ry="4.2" fill="#8e9aa6" transform="rotate(12 92.4 142.7)"/><ellipse cx="104.4" cy="148.3" rx="8.8" ry="4.0" fill="#737b82" transform="rotate(15 104.4 148.3)"/><ellipse cx="120.3" cy="144.6" rx="7.4" ry="5.0" fill="#c4c9cd" transform="rotate(18 120.3 144.6)"/><ellipse cx="133.5" cy="146.1" rx="7.2" ry="4.9" fill="#d6d3cc" transform="rotate(-5 133.5 146.1)"/><ellipse cx="147.3" cy="142.7" rx="9.9" ry="5.4" fill="#96a3ae" transform="rotate(9 147.3 142.7)"/><ellipse cx="165.6" cy="147.3" rx="8.1" ry="5.4" fill="#7d8891" transform="rotate(-6 165.6 147.3)"/><ellipse cx="180.5" cy="143.0" rx="6.9" ry="5.4" fill="#8296a8" transform="rotate(9 180.5 143.0)"/><ellipse cx="-6.1" cy="151.9" rx="8.7" ry="5.9" fill="#59646e" transform="rotate(-11 -6.1 151.9)"/><ellipse cx="10.8" cy="150.6" rx="7.8" ry="5.0" fill="#6f7c88" transform="rotate(11 10.8 150.6)"/><ellipse cx="25.7" cy="153.2" rx="6.8" ry="5.1" fill="#b3b9bf" transform="rotate(1 25.7 153.2)"/><ellipse cx="39.7" cy="155.8" rx="10.1" ry="5.7" fill="#59646e" transform="rotate(17 39.7 155.8)"/><ellipse cx="59.1" cy="149.4" rx="7.1" ry="5.4" fill="#444c55" transform="rotate(-6 59.1 149.4)"/><ellipse cx="73.0" cy="152.4" rx="7.3" ry="4.5" fill="#5f6f80" transform="rotate(-12 73.0 152.4)"/><ellipse cx="87.9" cy="154.9" rx="7.5" ry="5.3" fill="#59646e" transform="rotate(-3 87.9 154.9)"/><ellipse cx="102.3" cy="152.8" rx="10.4" ry="5.8" fill="#c4c9cd" transform="rotate(4 102.3 152.8)"/><ellipse cx="120.6" cy="153.4" rx="10.6" ry="5.5" fill="#444c55" transform="rotate(18 120.6 153.4)"/><ellipse cx="140.6" cy="152.6" rx="9.8" ry="5.2" fill="#a9b3bc" transform="rotate(2 140.6 152.6)"/><ellipse cx="159.3" cy="153.3" rx="7.1" ry="6.2" fill="#737b82" transform="rotate(10 159.3 153.3)"/><ellipse cx="173.7" cy="152.4" rx="7.8" ry="4.8" fill="#59646e" transform="rotate(0 173.7 152.4)"/><ellipse cx="-1.3" cy="161.4" rx="9.4" ry="6.5" fill="#8e9aa6" transform="rotate(9 -1.3 161.4)"/><ellipse cx="16.1" cy="163.1" rx="9.8" ry="6.0" fill="#5f6f80" transform="rotate(7 16.1 163.1)"/><ellipse cx="34.5" cy="158.0" rx="10.0" ry="5.6" fill="#6f7c88" transform="rotate(-12 34.5 158.0)"/><ellipse cx="52.3" cy="162.0" rx="10.3" ry="4.4" fill="#a9b3bc" transform="rotate(-5 52.3 162.0)"/><ellipse cx="71.3" cy="158.6" rx="11.3" ry="4.8" fill="#737b82" transform="rotate(-19 71.3 158.6)"/><ellipse cx="91.6" cy="159.1" rx="11.6" ry="5.5" fill="#737b82" transform="rotate(14 91.6 159.1)"/><ellipse cx="113.7" cy="161.5" rx="9.4" ry="5.2" fill="#444c55" transform="rotate(-14 113.7 161.5)"/><ellipse cx="130.9" cy="162.0" rx="10.9" ry="6.1" fill="#737b82" transform="rotate(14 130.9 162.0)"/><ellipse cx="150.9" cy="157.9" rx="9.4" ry="6.5" fill="#59646e" transform="rotate(-13 150.9 157.9)"/><ellipse cx="168.7" cy="161.6" rx="9.9" ry="5.7" fill="#b3b9bf" transform="rotate(15 168.7 161.6)"/><ellipse cx="187.3" cy="158.8" rx="9.4" ry="5.3" fill="#9b948c" transform="rotate(1 187.3 158.8)"/><ellipse cx="-6.0" cy="168.6" rx="12.2" ry="5.5" fill="#59646e" transform="rotate(11 -6.0 168.6)"/><ellipse cx="16.2" cy="166.4" rx="11.4" ry="5.5" fill="#b3b9bf" transform="rotate(17 16.2 166.4)"/><ellipse cx="37.4" cy="167.3" rx="8.7" ry="7.0" fill="#5f6f80" transform="rotate(19 37.4 167.3)"/><ellipse cx="53.9" cy="166.5" rx="8.2" ry="6.9" fill="#8e9aa6" transform="rotate(3 53.9 166.5)"/><ellipse cx="69.3" cy="165.8" rx="9.3" ry="5.2" fill="#96a3ae" transform="rotate(13 69.3 165.8)"/><ellipse cx="86.9" cy="169.1" rx="9.4" ry="6.7" fill="#59646e" transform="rotate(12 86.9 169.1)"/><ellipse cx="105.3" cy="172.2" rx="9.4" ry="6.0" fill="#a9b3bc" transform="rotate(-16 105.3 172.2)"/><ellipse cx="122.3" cy="165.3" rx="9.7" ry="7.1" fill="#8e9aa6" transform="rotate(17 122.3 165.3)"/><ellipse cx="141.6" cy="165.4" rx="9.5" ry="5.7" fill="#8296a8" transform="rotate(6 141.6 165.4)"/><ellipse cx="158.7" cy="166.5" rx="9.1" ry="7.1" fill="#8296a8" transform="rotate(3 158.7 166.5)"/><ellipse cx="174.9" cy="165.5" rx="7.3" ry="5.2" fill="#6f7c88" transform="rotate(-1 174.9 165.5)"/><ellipse cx="-6.3" cy="177.0" rx="10.7" ry="5.5" fill="#7d8891" transform="rotate(-14 -6.3 177.0)"/><ellipse cx="15.0" cy="176.4" rx="9.7" ry="5.2" fill="#8296a8" transform="rotate(15 15.0 176.4)"/><ellipse cx="33.6" cy="177.5" rx="8.6" ry="5.7" fill="#5f6f80" transform="rotate(1 33.6 177.5)"/><ellipse cx="50.6" cy="181.2" rx="10.1" ry="5.7" fill="#6f7c88" transform="rotate(-2 50.6 181.2)"/><ellipse cx="69.1" cy="178.2" rx="11.8" ry="7.7" fill="#8296a8" transform="rotate(-4 69.1 178.2)"/><ellipse cx="91.4" cy="176.1" rx="10.6" ry="6.4" fill="#6f7c88" transform="rotate(-18 91.4 176.1)"/><ellipse cx="111.9" cy="175.6" rx="8.3" ry="5.0" fill="#9b948c" transform="rotate(17 111.9 175.6)"/><ellipse cx="126.7" cy="177.4" rx="12.0" ry="7.1" fill="#d6d3cc" transform="rotate(-3 126.7 177.4)"/><ellipse cx="148.5" cy="178.3" rx="11.2" ry="5.6" fill="#444c55" transform="rotate(-19 148.5 178.3)"/><ellipse cx="169.5" cy="178.3" rx="10.2" ry="5.7" fill="#59646e" transform="rotate(18 169.5 178.3)"/></g><rect y="50" width="180" height="130" fill="url(#shade)"/></g></g></svg>
<svg class="b" style="left:1387px;top:425px" width="180" height="180" viewBox="0 0 180 180"><defs><clipPath id="pc1"><rect x="0" y="0" width="180" height="180" rx="14"/></clipPath><linearGradient id="sky2" x1="0" y1="0" x2="0" y2="1"><stop offset="0" stop-color="#cdd8e2"/><stop offset=".6" stop-color="#e2e4e4"/><stop offset="1" stop-color="#ece8e0"/></linearGradient><linearGradient id="sea2" x1="0" y1="0" x2="0" y2="1"><stop offset="0" stop-color="#56697c"/><stop offset=".6" stop-color="#7f909c"/><stop offset="1" stop-color="#b9c0c2"/></linearGradient><filter id="b1"><feGaussianBlur stdDeviation="0.5"/></filter></defs><g clip-path="url(#pc1)"><rect width="180" height="180" fill="url(#sky2)"/><rect x="0" y="63" width="180" height="25" fill="url(#sea2)"/><path d="M146 87 H180 V106 H140 Z" fill="#cdb79c"/><path d="M0 70 H180 V180 H0 Z" fill="none"/><path d="M0 72 H22 V70 H60 V72 H88 L100 66 L112 70 H150 V88 H140 V104 H180 V180 H0 Z" fill="#8f887d"/><path d="M46 126 L78 92 H104 L140 126 Z" fill="#6f675d"/><path d="M0 40 a9 15 0 0 1 9 15 a9 15 0 0 1 -9 15" fill="none" stroke="#b8a392" stroke-width="1.800"/><path d="M0 55 L8 46 M0 55 L9 56 M0 55 L7 66" stroke="#c9b8a8" stroke-width=".8"/><rect x="0" y="71" width="24" height="12" fill="#5a524b"/><rect x="0" y="84" width="15" height="16" fill="#d9d8d2"/><rect x="15" y="82" width="9" height="22" fill="#a38563"/><path d="M17 96 a3.500 4 0 0 1 7 0 v6 h-7 Z" fill="#4b3d33"/><rect x="25" y="71" width="40" height="5.500" fill="#4c4e51"/><rect x="25" y="76" width="3" height="26" fill="#7b7d80"/><rect x="62" y="76" width="2" height="20" fill="#7b7d80"/><path d="M28 84 H50 L54 100 V112 H28 Z" fill="#dfe3e2"/><path d="M30 92 H52 V98 H30 Z" fill="#7d8c86"/><path d="M66 76 l5 8 h-9 Z" fill="#f0f0ee"/><path d="M50 98 l5 3 l-5 3 Z" fill="#c0392b"/><rect x="112" y="72" width="32" height="7" fill="#4f4f4e"/><rect x="112" y="79" width="36" height="27" fill="#c3c2bc"/><rect x="118" y="80.500" width="21" height="2.500" fill="#cf5a50"/><rect x="121" y="87" width="30" height="4" fill="#8a8880"/><rect x="121" y="95" width="30" height="4" fill="#8f8d86"/><rect x="150" y="86" width="16" height="18" fill="#7d7469"/><rect x="150" y="86" width="16" height="5" fill="#4e4942"/><rect x="108" y="98" width="4" height="5" fill="#d9d33a"/><rect x="112" y="104" width="4" height="12" fill="#dcdcdc"/><path d="M136 104 H180 V160 L140 132 Z" fill="#5d6168"/><g filter="url(#b1)"><rect x="159.0" y="140.1" width="6.6" height="3.6" rx="1" fill="#dfe1e3"/><rect x="155.6" y="122.5" width="4.8" height="2.7" rx="1" fill="#1b1d21"/><rect x="177.9" y="105.8" width="3.2" height="1.8" rx="1" fill="#dfe1e3"/><rect x="156.2" y="121.4" width="4.7" height="2.6" rx="1" fill="#3a4250"/><rect x="155.5" y="145.9" width="7.2" height="4.0" rx="1" fill="#3a4250"/><rect x="175.1" y="112.5" width="3.9" height="2.1" rx="1" fill="#23262b"/><rect x="155.5" y="141.9" width="6.8" height="3.7" rx="1" fill="#23262b"/><rect x="155.9" y="136.0" width="6.2" height="3.4" rx="1" fill="#3a4250"/><rect x="143.3" y="108.5" width="3.4" height="1.9" rx="1" fill="#3a4250"/><rect x="160.0" y="129.2" width="5.5" height="3.0" rx="1" fill="#c9ccd0"/><rect x="146.0" y="112.3" width="3.8" height="2.1" rx="1" fill="#8f959b"/><rect x="171.7" y="125.9" width="5.2" height="2.9" rx="1" fill="#c9ccd0"/><rect x="164.5" y="135.1" width="6.1" height="3.4" rx="1" fill="#5b3a36"/><rect x="165.5" y="144.0" width="7.0" height="3.8" rx="1" fill="#23262b"/><rect x="146.4" y="124.8" width="5.1" height="2.8" rx="1" fill="#23262b"/><rect x="164.3" y="139.4" width="6.5" height="3.6" rx="1" fill="#c9ccd0"/><rect x="139.6" y="116.7" width="4.3" height="2.4" rx="1" fill="#23262b"/><rect x="164.4" y="147.2" width="7.3" height="4.0" rx="1" fill="#8f959b"/><rect x="175.9" y="138.3" width="6.4" height="3.5" rx="1" fill="#23262b"/><rect x="151.1" y="139.0" width="6.5" height="3.6" rx="1" fill="#5b3a36"/><rect x="162.3" y="113.2" width="3.9" height="2.2" rx="1" fill="#c9ccd0"/><rect x="167.7" y="119.9" width="4.6" height="2.5" rx="1" fill="#dfe1e3"/><rect x="169.0" y="134.5" width="6.0" height="3.3" rx="1" fill="#dfe1e3"/><rect x="160.4" y="134.3" width="6.0" height="3.3" rx="1" fill="#1b1d21"/><rect x="158.2" y="123.9" width="5.0" height="2.7" rx="1" fill="#c9ccd0"/><rect x="152.3" y="117.3" width="4.3" height="2.4" rx="1" fill="#3a4250"/><rect x="160.2" y="136.9" width="6.3" height="3.5" rx="1" fill="#1b1d21"/><rect x="152.3" y="142.8" width="6.9" height="3.8" rx="1" fill="#5b3a36"/><rect x="141.5" y="107.8" width="3.4" height="1.9" rx="1" fill="#1b1d21"/><rect x="154.5" y="109.2" width="3.5" height="1.9" rx="1" fill="#c9ccd0"/><rect x="174.4" y="135.0" width="6.1" height="3.4" rx="1" fill="#dfe1e3"/><rect x="157.4" y="128.8" width="5.5" height="3.0" rx="1" fill="#8f959b"/><rect x="154.2" y="134.1" width="6.0" height="3.3" rx="1" fill="#c9ccd0"/><rect x="146.4" y="132.8" width="5.9" height="3.2" rx="1" fill="#1b1d21"/><rect x="166.6" y="143.4" width="6.9" height="3.8" rx="1" fill="#dfe1e3"/><rect x="163.8" y="133.4" width="5.9" height="3.3" rx="1" fill="#23262b"/><rect x="176.3" y="128.8" width="5.5" height="3.0" rx="1" fill="#23262b"/><rect x="144.7" y="121.5" width="4.7" height="2.6" rx="1" fill="#5b3a36"/><rect x="150.9" y="133.7" width="6.0" height="3.3" rx="1" fill="#23262b"/><rect x="145.2" y="123.4" width="4.9" height="2.7" rx="1" fill="#5b3a36"/><rect x="176.1" y="107.9" width="3.4" height="1.9" rx="1" fill="#8f959b"/><rect x="153.1" y="138.8" width="6.5" height="3.6" rx="1" fill="#23262b"/><rect x="159.3" y="109.0" width="3.5" height="1.9" rx="1" fill="#dfe1e3"/><rect x="179.4" y="133.4" width="5.9" height="3.3" rx="1" fill="#dfe1e3"/><rect x="175.9" y="133.1" width="5.9" height="3.3" rx="1" fill="#1b1d21"/><rect x="153.3" y="133.0" width="5.9" height="3.2" rx="1" fill="#dfe1e3"/><rect x="158.0" y="111.0" width="3.7" height="2.0" rx="1" fill="#3a4250"/><rect x="166.2" y="149.5" width="7.5" height="4.2" rx="1" fill="#8f959b"/><rect x="142.3" y="104.9" width="3.1" height="1.7" rx="1" fill="#5b3a36"/><rect x="150.7" y="124.4" width="5.0" height="2.8" rx="1" fill="#c9ccd0"/><rect x="169.2" y="105.7" width="3.2" height="1.7" rx="1" fill="#8f959b"/><rect x="152.9" y="112.5" width="3.9" height="2.1" rx="1" fill="#c9ccd0"/><rect x="159.5" y="126.9" width="5.3" height="2.9" rx="1" fill="#8f959b"/><rect x="155.9" y="144.8" width="7.1" height="3.9" rx="1" fill="#3a4250"/><rect x="177.6" y="127.8" width="5.4" height="3.0" rx="1" fill="#8f959b"/><rect x="168.1" y="110.0" width="3.6" height="2.0" rx="1" fill="#1b1d21"/><rect x="168.7" y="141.0" width="6.7" height="3.7" rx="1" fill="#23262b"/><rect x="171.9" y="113.7" width="4.0" height="2.2" rx="1" fill="#1b1d21"/><rect x="146.0" y="126.3" width="5.2" height="2.9" rx="1" fill="#3a4250"/><rect x="166.6" y="137.2" width="6.3" height="3.5" rx="1" fill="#23262b"/><rect x="155.2" y="121.0" width="4.7" height="2.6" rx="1" fill="#23262b"/><rect x="139.9" y="107.8" width="3.4" height="1.9" rx="1" fill="#c9ccd0"/><rect x="149.7" y="146.5" width="7.2" height="4.0" rx="1" fill="#dfe1e3"/><rect x="177.2" y="148.6" width="7.5" height="4.1" rx="1" fill="#8f959b"/><rect x="156.1" y="141.7" width="6.8" height="3.7" rx="1" fill="#dfe1e3"/><rect x="149.2" y="133.9" width="6.0" height="3.3" rx="1" fill="#dfe1e3"/><rect x="165.4" y="108.2" width="3.4" height="1.9" rx="1" fill="#c9ccd0"/><rect x="140.5" y="119.5" width="4.6" height="2.5" rx="1" fill="#8f959b"/><rect x="165.8" y="149.3" width="7.5" height="4.1" rx="1" fill="#dfe1e3"/><rect x="156.1" y="147.7" width="7.4" height="4.1" rx="1" fill="#dfe1e3"/><circle cx="96.2" cy="106.9" r="1.4" fill="#5d5650"/><circle cx="102.7" cy="109.7" r="1.5" fill="#7d7872"/><circle cx="45.8" cy="119.0" r="1.7" fill="#1d1b1c"/><circle cx="65.0" cy="113.2" r="1.6" fill="#2a2624"/><circle cx="52.6" cy="118.2" r="1.7" fill="#1d1b1c"/><circle cx="72.4" cy="116.9" r="1.7" fill="#3b3533"/><circle cx="56.8" cy="104.8" r="1.3" fill="#bfb9ae"/><circle cx="70.4" cy="97.4" r="1.1" fill="#5d5650"/><circle cx="95.2" cy="96.6" r="1.1" fill="#3b3533"/><circle cx="89.2" cy="83.9" r="0.8" fill="#55504c"/><circle cx="97.5" cy="83.5" r="0.8" fill="#2a2624"/><circle cx="77.3" cy="87.7" r="0.9" fill="#55504c"/><circle cx="65.9" cy="117.0" r="1.7" fill="#bfb9ae"/><circle cx="92.3" cy="103.3" r="1.3" fill="#bfb9ae"/><circle cx="98.8" cy="86.3" r="0.8" fill="#bfb9ae"/><circle cx="110.2" cy="120.7" r="1.8" fill="#8b6a55"/><circle cx="86.5" cy="76.2" r="0.6" fill="#55504c"/><circle cx="79.6" cy="90.5" r="0.9" fill="#6b5a4a"/><circle cx="88.0" cy="105.3" r="1.3" fill="#34302d"/><circle cx="77.3" cy="94.1" r="1.0" fill="#8b6a55"/><circle cx="74.7" cy="100.7" r="1.2" fill="#1d1b1c"/><circle cx="68.3" cy="100.4" r="1.2" fill="#8b6a55"/><circle cx="43.6" cy="121.0" r="1.8" fill="#34302d"/><circle cx="80.7" cy="95.1" r="1.1" fill="#a9a298"/><circle cx="72.5" cy="113.7" r="1.6" fill="#6b5a4a"/><circle cx="77.8" cy="115.8" r="1.6" fill="#34302d"/><circle cx="98.4" cy="86.2" r="0.8" fill="#bfb9ae"/><circle cx="80.9" cy="82.7" r="0.7" fill="#1d1b1c"/><circle cx="78.9" cy="94.5" r="1.1" fill="#a9a298"/><circle cx="84.1" cy="89.9" r="0.9" fill="#6b5a4a"/><circle cx="100.7" cy="112.1" r="1.5" fill="#8b6a55"/><circle cx="94.0" cy="77.4" r="0.6" fill="#3b3533"/><circle cx="86.1" cy="87.7" r="0.9" fill="#8e4a42"/><circle cx="68.8" cy="118.8" r="1.7" fill="#34302d"/><circle cx="73.4" cy="103.5" r="1.3" fill="#8e4a42"/><circle cx="95.8" cy="92.6" r="1.0" fill="#7d7872"/><circle cx="91.0" cy="84.5" r="0.8" fill="#1d1b1c"/><circle cx="74.5" cy="85.2" r="0.8" fill="#6b5a4a"/><circle cx="78.3" cy="103.0" r="1.3" fill="#bfb9ae"/><circle cx="71.8" cy="111.7" r="1.5" fill="#8b6a55"/><circle cx="80.1" cy="99.6" r="1.2" fill="#2a2624"/><circle cx="90.8" cy="121.2" r="1.8" fill="#5d5650"/><circle cx="99.9" cy="101.3" r="1.2" fill="#55504c"/><circle cx="85.1" cy="121.3" r="1.8" fill="#55504c"/><circle cx="98.9" cy="107.2" r="1.4" fill="#3b3533"/><circle cx="82.7" cy="85.6" r="0.8" fill="#2a2624"/><circle cx="66.8" cy="115.9" r="1.6" fill="#1d1b1c"/><circle cx="89.4" cy="119.0" r="1.7" fill="#55504c"/><circle cx="76.6" cy="121.1" r="1.8" fill="#1d1b1c"/><circle cx="71.0" cy="109.6" r="1.5" fill="#8b6a55"/><circle cx="81.6" cy="91.9" r="1.0" fill="#55504c"/><circle cx="93.6" cy="82.4" r="0.7" fill="#a9a298"/><circle cx="89.9" cy="120.5" r="1.8" fill="#1d1b1c"/><circle cx="58.2" cy="116.9" r="1.7" fill="#1d1b1c"/><circle cx="94.8" cy="91.0" r="1.0" fill="#a9a298"/><circle cx="95.9" cy="95.3" r="1.1" fill="#5d5650"/><circle cx="88.0" cy="95.0" r="1.1" fill="#2a2624"/><circle cx="72.8" cy="112.5" r="1.5" fill="#34302d"/><circle cx="102.1" cy="108.8" r="1.4" fill="#8b6a55"/><circle cx="93.9" cy="112.9" r="1.6" fill="#8b6a55"/><circle cx="68.2" cy="120.3" r="1.8" fill="#55504c"/><circle cx="56.4" cy="105.1" r="1.3" fill="#a9a298"/><circle cx="70.1" cy="113.1" r="1.6" fill="#8b6a55"/><circle cx="98.5" cy="99.9" r="1.2" fill="#7d7872"/><circle cx="73.6" cy="109.0" r="1.4" fill="#8b6a55"/><circle cx="96.1" cy="107.8" r="1.4" fill="#4a5568"/><circle cx="98.0" cy="94.7" r="1.1" fill="#34302d"/><circle cx="77.6" cy="99.3" r="1.2" fill="#8e4a42"/><circle cx="84.7" cy="102.4" r="1.3" fill="#55504c"/><circle cx="81.8" cy="87.2" r="0.9" fill="#1d1b1c"/><circle cx="70.4" cy="91.5" r="1.0" fill="#7d7872"/><circle cx="61.1" cy="111.3" r="1.5" fill="#5d5650"/><circle cx="81.6" cy="119.5" r="1.7" fill="#4a5568"/><circle cx="86.8" cy="92.5" r="1.0" fill="#7d7872"/><circle cx="102.0" cy="90.9" r="1.0" fill="#bfb9ae"/><circle cx="84.6" cy="85.1" r="0.8" fill="#7d7872"/><circle cx="93.0" cy="86.2" r="0.8" fill="#55504c"/><circle cx="56.3" cy="107.2" r="1.4" fill="#1d1b1c"/><circle cx="54.4" cy="121.2" r="1.8" fill="#55504c"/><circle cx="96.8" cy="82.3" r="0.7" fill="#1d1b1c"/><circle cx="72.7" cy="86.9" r="0.8" fill="#1d1b1c"/><circle cx="90.9" cy="94.8" r="1.1" fill="#3b3533"/><circle cx="68.4" cy="105.5" r="1.4" fill="#8e4a42"/><circle cx="87.0" cy="74.1" r="0.5" fill="#8b6a55"/><circle cx="106.6" cy="116.4" r="1.6" fill="#34302d"/><circle cx="72.4" cy="115.4" r="1.6" fill="#2a2624"/><circle cx="72.7" cy="103.8" r="1.3" fill="#8b6a55"/><circle cx="74.7" cy="103.5" r="1.3" fill="#6b5a4a"/><circle cx="79.7" cy="92.0" r="1.0" fill="#55504c"/><circle cx="97.8" cy="97.9" r="1.1" fill="#7d7872"/><circle cx="81.5" cy="103.2" r="1.3" fill="#55504c"/><circle cx="86.2" cy="105.7" r="1.4" fill="#bfb9ae"/><circle cx="88.5" cy="120.8" r="1.8" fill="#8e4a42"/><circle cx="92.2" cy="115.0" r="1.6" fill="#4a5568"/><circle cx="88.1" cy="82.1" r="0.7" fill="#6b5a4a"/><circle cx="74.1" cy="103.3" r="1.3" fill="#6b5a4a"/><circle cx="81.5" cy="95.9" r="1.1" fill="#bfb9ae"/><circle cx="82.5" cy="101.3" r="1.2" fill="#34302d"/><circle cx="103.4" cy="96.1" r="1.1" fill="#55504c"/><circle cx="69.5" cy="105.7" r="1.4" fill="#8b6a55"/><circle cx="79.3" cy="101.4" r="1.2" fill="#8e4a42"/><circle cx="65.9" cy="119.9" r="1.7" fill="#8b6a55"/><circle cx="74.7" cy="84.1" r="0.8" fill="#7d7872"/><circle cx="79.3" cy="106.8" r="1.4" fill="#8b6a55"/><circle cx="81.9" cy="77.7" r="0.6" fill="#4a5568"/><circle cx="88.1" cy="75.5" r="0.5" fill="#8b6a55"/><circle cx="84.6" cy="89.5" r="0.9" fill="#2a2624"/><circle cx="77.9" cy="89.6" r="0.9" fill="#55504c"/><circle cx="68.5" cy="111.0" r="1.5" fill="#1d1b1c"/><circle cx="81.2" cy="106.2" r="1.4" fill="#7d7872"/><circle cx="107.7" cy="116.7" r="1.7" fill="#3b3533"/><circle cx="83.0" cy="75.8" r="0.5" fill="#8b6a55"/><circle cx="74.8" cy="103.0" r="1.3" fill="#8b6a55"/><circle cx="52.0" cy="111.4" r="1.5" fill="#8e4a42"/><circle cx="94.3" cy="95.2" r="1.1" fill="#6b5a4a"/><circle cx="74.7" cy="83.5" r="0.8" fill="#a9a298"/><circle cx="103.0" cy="99.6" r="1.2" fill="#7d7872"/><circle cx="57.9" cy="103.6" r="1.3" fill="#5d5650"/><circle cx="87.6" cy="114.5" r="1.6" fill="#34302d"/><circle cx="90.1" cy="110.4" r="1.5" fill="#1d1b1c"/><circle cx="104.9" cy="116.5" r="1.7" fill="#1d1b1c"/><circle cx="99.0" cy="96.7" r="1.1" fill="#bfb9ae"/><circle cx="78.1" cy="118.1" r="1.7" fill="#5d5650"/><circle cx="93.1" cy="79.5" r="0.6" fill="#34302d"/><circle cx="86.8" cy="113.3" r="1.6" fill="#7d7872"/><circle cx="108.5" cy="113.4" r="1.6" fill="#55504c"/><circle cx="91.2" cy="85.4" r="0.8" fill="#1d1b1c"/><circle cx="83.1" cy="121.0" r="1.8" fill="#4a5568"/><circle cx="99.7" cy="105.3" r="1.3" fill="#3b3533"/><circle cx="67.1" cy="111.4" r="1.5" fill="#3b3533"/><circle cx="92.2" cy="113.8" r="1.6" fill="#2a2624"/><circle cx="82.0" cy="93.9" r="1.0" fill="#3b3533"/><circle cx="95.7" cy="121.9" r="1.8" fill="#2a2624"/><circle cx="77.9" cy="83.0" r="0.7" fill="#6b5a4a"/><circle cx="108.6" cy="107.8" r="1.4" fill="#34302d"/><circle cx="116.4" cy="117.9" r="1.7" fill="#34302d"/><circle cx="54.8" cy="118.8" r="1.7" fill="#6b5a4a"/><circle cx="94.3" cy="86.5" r="0.8" fill="#3b3533"/><circle cx="56.7" cy="106.8" r="1.4" fill="#3b3533"/><circle cx="96.7" cy="108.4" r="1.4" fill="#8b6a55"/><circle cx="88.5" cy="78.9" r="0.6" fill="#34302d"/><circle cx="89.4" cy="97.0" r="1.1" fill="#2a2624"/><circle cx="75.6" cy="98.5" r="1.2" fill="#6b5a4a"/><circle cx="76.4" cy="101.1" r="1.2" fill="#7d7872"/><circle cx="66.2" cy="95.9" r="1.1" fill="#34302d"/><circle cx="87.4" cy="92.1" r="1.0" fill="#7d7872"/><circle cx="103.6" cy="101.8" r="1.3" fill="#a9a298"/><circle cx="68.5" cy="103.7" r="1.3" fill="#3b3533"/><circle cx="70.2" cy="103.8" r="1.3" fill="#5d5650"/><circle cx="101.6" cy="91.5" r="1.0" fill="#5d5650"/><circle cx="81.5" cy="89.0" r="0.9" fill="#34302d"/><circle cx="68.8" cy="96.5" r="1.1" fill="#2a2624"/><circle cx="58.0" cy="108.2" r="1.4" fill="#7d7872"/><circle cx="92.8" cy="77.4" r="0.6" fill="#a9a298"/><circle cx="68.4" cy="105.6" r="1.4" fill="#1d1b1c"/><circle cx="75.1" cy="100.7" r="1.2" fill="#5d5650"/><circle cx="85.3" cy="102.9" r="1.3" fill="#4a5568"/><circle cx="81.5" cy="78.6" r="0.6" fill="#4a5568"/><circle cx="65.5" cy="109.3" r="1.5" fill="#3b3533"/><circle cx="94.9" cy="80.6" r="0.7" fill="#1d1b1c"/><circle cx="56.7" cy="115.0" r="1.6" fill="#6b5a4a"/><circle cx="98.1" cy="95.9" r="1.1" fill="#8b6a55"/><circle cx="89.0" cy="93.9" r="1.0" fill="#8e4a42"/><circle cx="73.2" cy="114.0" r="1.6" fill="#34302d"/><circle cx="91.3" cy="115.4" r="1.6" fill="#5d5650"/><circle cx="108.8" cy="107.2" r="1.4" fill="#8e4a42"/><circle cx="87.9" cy="102.3" r="1.3" fill="#6b5a4a"/><circle cx="76.1" cy="88.0" r="0.9" fill="#3b3533"/><circle cx="77.2" cy="81.4" r="0.7" fill="#bfb9ae"/><circle cx="85.5" cy="87.0" r="0.9" fill="#1d1b1c"/><circle cx="73.3" cy="108.5" r="1.4" fill="#4a5568"/><circle cx="102.0" cy="100.2" r="1.2" fill="#6b5a4a"/><circle cx="67.5" cy="119.0" r="1.7" fill="#1d1b1c"/><circle cx="79.6" cy="81.6" r="0.7" fill="#55504c"/><circle cx="93.8" cy="79.8" r="0.7" fill="#1d1b1c"/><circle cx="80.1" cy="84.6" r="0.8" fill="#8b6a55"/><circle cx="98.2" cy="114.9" r="1.6" fill="#7d7872"/><circle cx="84.9" cy="89.1" r="0.9" fill="#2a2624"/><circle cx="94.4" cy="94.5" r="1.1" fill="#8e4a42"/><circle cx="94.4" cy="119.6" r="1.7" fill="#7d7872"/><circle cx="99.9" cy="99.6" r="1.2" fill="#55504c"/><circle cx="90.3" cy="82.7" r="0.7" fill="#8b6a55"/><circle cx="71.7" cy="99.5" r="1.2" fill="#55504c"/><circle cx="90.6" cy="77.2" r="0.6" fill="#6b5a4a"/><circle cx="72.4" cy="88.8" r="0.9" fill="#4a5568"/><circle cx="95.7" cy="118.6" r="1.7" fill="#7d7872"/><circle cx="83.7" cy="92.9" r="1.0" fill="#8b6a55"/><circle cx="95.9" cy="79.5" r="0.6" fill="#1d1b1c"/><circle cx="79.4" cy="85.3" r="0.8" fill="#7d7872"/><circle cx="72.3" cy="87.7" r="0.9" fill="#6b5a4a"/><circle cx="105.2" cy="98.5" r="1.2" fill="#2a2624"/><circle cx="81.5" cy="99.9" r="1.2" fill="#7d7872"/><circle cx="64.4" cy="97.5" r="1.1" fill="#a9a298"/><circle cx="104.3" cy="115.6" r="1.6" fill="#6b5a4a"/><circle cx="68.6" cy="94.7" r="1.1" fill="#3b3533"/><circle cx="95.0" cy="89.2" r="0.9" fill="#3b3533"/><circle cx="47.2" cy="119.5" r="1.7" fill="#bfb9ae"/><circle cx="82.2" cy="107.8" r="1.4" fill="#5d5650"/><circle cx="83.0" cy="79.1" r="0.6" fill="#4a5568"/><circle cx="90.2" cy="99.2" r="1.2" fill="#2a2624"/><circle cx="57.3" cy="120.1" r="1.7" fill="#34302d"/><circle cx="78.5" cy="101.9" r="1.3" fill="#a9a298"/><circle cx="98.8" cy="89.0" r="0.9" fill="#5d5650"/><circle cx="87.6" cy="82.1" r="0.7" fill="#55504c"/><circle cx="102.3" cy="105.8" r="1.4" fill="#bfb9ae"/><circle cx="79.2" cy="107.0" r="1.4" fill="#8e4a42"/><circle cx="86.9" cy="101.0" r="1.2" fill="#4a5568"/><circle cx="64.7" cy="102.5" r="1.3" fill="#2a2624"/><circle cx="66.5" cy="118.6" r="1.7" fill="#1d1b1c"/><circle cx="116.7" cy="117.8" r="1.7" fill="#a9a298"/><circle cx="82.4" cy="82.5" r="0.7" fill="#3b3533"/><circle cx="65.9" cy="113.3" r="1.6" fill="#4a5568"/><circle cx="71.2" cy="92.9" r="1.0" fill="#3b3533"/><circle cx="92.9" cy="100.3" r="1.2" fill="#5d5650"/><circle cx="87.4" cy="98.4" r="1.2" fill="#bfb9ae"/><circle cx="84.9" cy="91.1" r="1.0" fill="#bfb9ae"/><circle cx="82.5" cy="78.2" r="0.6" fill="#8b6a55"/><circle cx="108.3" cy="117.4" r="1.7" fill="#3b3533"/><circle cx="75.8" cy="98.0" r="1.2" fill="#5d5650"/><circle cx="49.0" cy="112.9" r="1.6" fill="#8b6a55"/><circle cx="97.5" cy="108.2" r="1.4" fill="#6b5a4a"/><circle cx="82.6" cy="76.8" r="0.6" fill="#34302d"/><circle cx="108.9" cy="108.2" r="1.4" fill="#34302d"/><circle cx="86.2" cy="78.2" r="0.6" fill="#3b3533"/><circle cx="73.3" cy="114.6" r="1.6" fill="#55504c"/><circle cx="77.5" cy="93.4" r="1.0" fill="#55504c"/><circle cx="91.1" cy="90.5" r="0.9" fill="#8b6a55"/><circle cx="88.1" cy="77.2" r="0.6" fill="#34302d"/><circle cx="58.1" cy="104.1" r="1.3" fill="#2a2624"/><circle cx="105.1" cy="120.8" r="1.8" fill="#4a5568"/><circle cx="112.5" cy="116.5" r="1.7" fill="#6b5a4a"/><circle cx="88.0" cy="75.8" r="0.5" fill="#55504c"/><circle cx="77.6" cy="95.3" r="1.1" fill="#2a2624"/><circle cx="89.2" cy="85.3" r="0.8" fill="#55504c"/><circle cx="56.4" cy="111.2" r="1.5" fill="#a9a298"/><circle cx="89.9" cy="106.1" r="1.4" fill="#55504c"/><circle cx="103.8" cy="99.2" r="1.2" fill="#5d5650"/><circle cx="76.5" cy="98.4" r="1.2" fill="#1d1b1c"/><circle cx="77.7" cy="118.7" r="1.7" fill="#4a5568"/><circle cx="74.0" cy="85.7" r="0.8" fill="#7d7872"/><circle cx="82.8" cy="119.5" r="1.7" fill="#1d1b1c"/><circle cx="60.9" cy="105.7" r="1.4" fill="#4a5568"/><circle cx="64.5" cy="109.5" r="1.5" fill="#2a2624"/><circle cx="88.6" cy="77.1" r="0.6" fill="#1d1b1c"/><circle cx="73.0" cy="110.3" r="1.5" fill="#1d1b1c"/><circle cx="79.0" cy="88.1" r="0.9" fill="#bfb9ae"/><circle cx="85.5" cy="92.5" r="1.0" fill="#5d5650"/><circle cx="65.1" cy="112.2" r="1.5" fill="#8e4a42"/><circle cx="102.4" cy="114.5" r="1.6" fill="#7d7872"/><circle cx="105.2" cy="115.8" r="1.6" fill="#6b5a4a"/><circle cx="76.1" cy="101.3" r="1.2" fill="#55504c"/><circle cx="80.4" cy="115.4" r="1.6" fill="#2a2624"/><circle cx="84.7" cy="81.2" r="0.7" fill="#5d5650"/><circle cx="106.7" cy="110.8" r="1.5" fill="#bfb9ae"/><circle cx="98.3" cy="114.0" r="1.6" fill="#1d1b1c"/><circle cx="103.9" cy="109.4" r="1.5" fill="#6b5a4a"/><circle cx="80.8" cy="81.1" r="0.7" fill="#34302d"/><circle cx="87.9" cy="75.2" r="0.5" fill="#6b5a4a"/><circle cx="100.2" cy="106.8" r="1.4" fill="#2a2624"/><circle cx="67.2" cy="93.2" r="1.0" fill="#8b6a55"/><circle cx="83.4" cy="102.2" r="1.3" fill="#a9a298"/><circle cx="75.8" cy="110.2" r="1.5" fill="#5d5650"/><circle cx="109.9" cy="114.8" r="1.6" fill="#34302d"/><circle cx="59.9" cy="104.1" r="1.3" fill="#55504c"/><circle cx="72.2" cy="114.1" r="1.6" fill="#6b5a4a"/><circle cx="91.2" cy="76.1" r="0.6" fill="#bfb9ae"/><circle cx="70.4" cy="91.5" r="1.0" fill="#3b3533"/><circle cx="88.7" cy="113.1" r="1.6" fill="#5d5650"/><circle cx="73.9" cy="119.7" r="1.7" fill="#2a2624"/><circle cx="92.5" cy="91.1" r="1.0" fill="#3b3533"/><circle cx="81.3" cy="77.5" r="0.6" fill="#8b6a55"/><circle cx="94.2" cy="118.0" r="1.7" fill="#34302d"/><circle cx="86.1" cy="106.1" r="1.4" fill="#1d1b1c"/><circle cx="103.1" cy="102.3" r="1.3" fill="#bfb9ae"/><circle cx="95.7" cy="94.3" r="1.1" fill="#4a5568"/><circle cx="63.2" cy="96.8" r="1.1" fill="#4a5568"/><circle cx="94.7" cy="96.0" r="1.1" fill="#a9a298"/><circle cx="110.4" cy="118.1" r="1.7" fill="#6b5a4a"/><circle cx="78.2" cy="93.4" r="1.0" fill="#34302d"/><circle cx="94.3" cy="117.7" r="1.7" fill="#8e4a42"/><circle cx="72.4" cy="89.8" r="0.9" fill="#8b6a55"/><circle cx="76.5" cy="92.6" r="1.0" fill="#6b5a4a"/><circle cx="95.4" cy="80.2" r="0.7" fill="#3b3533"/><circle cx="97.7" cy="107.3" r="1.4" fill="#bfb9ae"/><circle cx="86.4" cy="108.3" r="1.4" fill="#7d7872"/><circle cx="107.1" cy="115.4" r="1.6" fill="#34302d"/><circle cx="72.5" cy="97.4" r="1.1" fill="#1d1b1c"/><circle cx="103.8" cy="102.8" r="1.3" fill="#8b6a55"/><circle cx="65.8" cy="97.9" r="1.1" fill="#8e4a42"/><circle cx="72.9" cy="86.6" r="0.8" fill="#3b3533"/><circle cx="86.9" cy="92.1" r="1.0" fill="#6b5a4a"/><circle cx="77.4" cy="86.4" r="0.8" fill="#6b5a4a"/><circle cx="92.7" cy="81.7" r="0.7" fill="#8e4a42"/><circle cx="54.2" cy="111.3" r="1.5" fill="#1d1b1c"/><circle cx="86.8" cy="83.8" r="0.8" fill="#3b3533"/><circle cx="97.8" cy="93.2" r="1.0" fill="#7d7872"/><circle cx="101.0" cy="96.3" r="1.1" fill="#34302d"/><circle cx="99.3" cy="106.5" r="1.4" fill="#3b3533"/><circle cx="89.7" cy="74.3" r="0.5" fill="#3b3533"/><circle cx="79.8" cy="81.2" r="0.7" fill="#6b5a4a"/><circle cx="86.4" cy="112.6" r="1.5" fill="#1d1b1c"/><circle cx="101.7" cy="111.6" r="1.5" fill="#5d5650"/><circle cx="96.8" cy="86.3" r="0.8" fill="#a9a298"/><circle cx="89.7" cy="120.3" r="1.8" fill="#3b3533"/><circle cx="97.1" cy="95.4" r="1.1" fill="#bfb9ae"/><circle cx="82.1" cy="87.6" r="0.9" fill="#1d1b1c"/><circle cx="115.8" cy="117.8" r="1.7" fill="#5d5650"/><circle cx="85.0" cy="80.6" r="0.7" fill="#a9a298"/><circle cx="60.5" cy="100.1" r="1.2" fill="#6b5a4a"/><circle cx="52.4" cy="120.5" r="1.8" fill="#2a2624"/><circle cx="106.0" cy="101.4" r="1.2" fill="#34302d"/><circle cx="91.8" cy="79.9" r="0.7" fill="#34302d"/><circle cx="52.0" cy="110.6" r="1.5" fill="#5d5650"/><circle cx="76.6" cy="100.6" r="1.2" fill="#34302d"/><circle cx="81.4" cy="87.0" r="0.9" fill="#55504c"/><circle cx="85.0" cy="91.9" r="1.0" fill="#34302d"/><circle cx="54.8" cy="112.8" r="1.6" fill="#3b3533"/><circle cx="79.2" cy="92.1" r="1.0" fill="#3b3533"/><circle cx="60.7" cy="102.4" r="1.3" fill="#4a5568"/><circle cx="62.4" cy="121.5" r="1.8" fill="#34302d"/><circle cx="82.8" cy="79.9" r="0.7" fill="#3b3533"/><circle cx="79.5" cy="103.9" r="1.3" fill="#55504c"/><circle cx="77.2" cy="103.4" r="1.3" fill="#bfb9ae"/><circle cx="83.9" cy="81.1" r="0.7" fill="#5d5650"/><circle cx="93.1" cy="80.6" r="0.7" fill="#55504c"/><circle cx="65.1" cy="95.2" r="1.1" fill="#8b6a55"/><circle cx="107.1" cy="104.3" r="1.3" fill="#a9a298"/><circle cx="95.9" cy="80.3" r="0.7" fill="#bfb9ae"/><circle cx="75.8" cy="121.0" r="1.8" fill="#1d1b1c"/><circle cx="106.2" cy="102.4" r="1.3" fill="#6b5a4a"/><circle cx="94.4" cy="120.3" r="1.8" fill="#a9a298"/><circle cx="83.1" cy="76.3" r="0.6" fill="#5d5650"/><circle cx="77.2" cy="113.3" r="1.6" fill="#6b5a4a"/><circle cx="92.4" cy="119.7" r="1.7" fill="#6b5a4a"/><circle cx="55.8" cy="107.4" r="1.4" fill="#2a2624"/><circle cx="93.8" cy="98.1" r="1.2" fill="#5d5650"/><circle cx="104.0" cy="117.1" r="1.7" fill="#4a5568"/><circle cx="91.6" cy="75.7" r="0.5" fill="#55504c"/><circle cx="55.4" cy="117.8" r="1.7" fill="#5d5650"/><circle cx="95.3" cy="86.8" r="0.8" fill="#3b3533"/><circle cx="58.0" cy="121.8" r="1.8" fill="#4a5568"/><circle cx="75.8" cy="86.7" r="0.8" fill="#8e4a42"/><circle cx="90.9" cy="91.7" r="1.0" fill="#3b3533"/><circle cx="98.3" cy="112.9" r="1.6" fill="#3b3533"/><circle cx="84.8" cy="80.0" r="0.7" fill="#4a5568"/><circle cx="59.0" cy="117.5" r="1.7" fill="#2a2624"/><circle cx="81.3" cy="112.0" r="1.5" fill="#8e4a42"/><circle cx="62.6" cy="105.9" r="1.4" fill="#bfb9ae"/><circle cx="84.4" cy="80.2" r="0.7" fill="#6b5a4a"/><circle cx="83.0" cy="77.0" r="0.6" fill="#4a5568"/><circle cx="79.7" cy="80.7" r="0.7" fill="#7d7872"/><circle cx="95.6" cy="95.8" r="1.1" fill="#55504c"/><circle cx="99.1" cy="92.0" r="1.0" fill="#34302d"/><circle cx="71.6" cy="104.1" r="1.3" fill="#3b3533"/><circle cx="75.2" cy="107.7" r="1.4" fill="#8e4a42"/><circle cx="84.1" cy="118.4" r="1.7" fill="#1d1b1c"/><circle cx="60.5" cy="120.7" r="1.8" fill="#6b5a4a"/><circle cx="74.7" cy="84.0" r="0.8" fill="#2a2624"/><circle cx="58.7" cy="111.4" r="1.5" fill="#1d1b1c"/><circle cx="56.0" cy="108.6" r="1.4" fill="#2a2624"/><circle cx="76.2" cy="113.0" r="1.6" fill="#a9a298"/><circle cx="65.5" cy="110.8" r="1.5" fill="#8b6a55"/><circle cx="87.2" cy="78.8" r="0.6" fill="#2a2624"/><circle cx="105.3" cy="109.8" r="1.5" fill="#5d5650"/><circle cx="85.0" cy="76.2" r="0.6" fill="#1d1b1c"/><circle cx="78.8" cy="81.8" r="0.7" fill="#8e4a42"/><circle cx="71.0" cy="104.6" r="1.3" fill="#6b5a4a"/><circle cx="113.9" cy="119.6" r="1.7" fill="#4a5568"/><circle cx="72.9" cy="92.4" r="1.0" fill="#7d7872"/><circle cx="86.0" cy="80.2" r="0.7" fill="#34302d"/><circle cx="89.2" cy="87.9" r="0.9" fill="#3b3533"/><circle cx="65.7" cy="119.1" r="1.7" fill="#a9a298"/><circle cx="80.6" cy="95.8" r="1.1" fill="#1d1b1c"/><circle cx="84.3" cy="94.8" r="1.1" fill="#6b5a4a"/><circle cx="86.5" cy="104.4" r="1.3" fill="#2a2624"/><circle cx="80.1" cy="79.0" r="0.6" fill="#8e4a42"/><circle cx="71.7" cy="117.5" r="1.7" fill="#8e4a42"/><circle cx="77.8" cy="90.5" r="0.9" fill="#5d5650"/><circle cx="77.1" cy="84.2" r="0.8" fill="#8b6a55"/><circle cx="89.7" cy="115.3" r="1.6" fill="#4a5568"/><circle cx="93.7" cy="85.4" r="0.8" fill="#34302d"/><circle cx="97.8" cy="90.5" r="0.9" fill="#1d1b1c"/><circle cx="105.2" cy="118.7" r="1.7" fill="#6b5a4a"/><circle cx="75.7" cy="83.8" r="0.8" fill="#34302d"/><circle cx="69.6" cy="95.0" r="1.1" fill="#1d1b1c"/><circle cx="92.4" cy="77.9" r="0.6" fill="#1d1b1c"/><circle cx="91.1" cy="109.0" r="1.4" fill="#2a2624"/><circle cx="61.9" cy="105.4" r="1.4" fill="#34302d"/><circle cx="80.3" cy="102.9" r="1.3" fill="#6b5a4a"/><circle cx="99.2" cy="88.4" r="0.9" fill="#3b3533"/><circle cx="95.4" cy="110.3" r="1.5" fill="#6b5a4a"/><circle cx="78.1" cy="81.2" r="0.7" fill="#1d1b1c"/><circle cx="85.8" cy="92.5" r="1.0" fill="#a9a298"/><circle cx="55.0" cy="110.9" r="1.5" fill="#7d7872"/><circle cx="68.5" cy="109.2" r="1.5" fill="#4a5568"/><circle cx="66.1" cy="112.3" r="1.5" fill="#8b6a55"/><circle cx="98.5" cy="92.3" r="1.0" fill="#8e4a42"/><circle cx="103.4" cy="102.3" r="1.3" fill="#1d1b1c"/><circle cx="90.8" cy="96.2" r="1.1" fill="#8b6a55"/><circle cx="89.0" cy="93.0" r="1.0" fill="#1d1b1c"/><circle cx="83.9" cy="80.9" r="0.7" fill="#3b3533"/><circle cx="78.8" cy="107.6" r="1.4" fill="#a9a298"/><circle cx="63.4" cy="108.0" r="1.4" fill="#55504c"/><circle cx="56.3" cy="118.7" r="1.7" fill="#a9a298"/><circle cx="87.1" cy="99.2" r="1.2" fill="#2a2624"/><circle cx="80.6" cy="84.2" r="0.8" fill="#1d1b1c"/><circle cx="105.6" cy="101.7" r="1.2" fill="#bfb9ae"/><circle cx="91.5" cy="104.0" r="1.3" fill="#4a5568"/><circle cx="70.0" cy="103.9" r="1.3" fill="#8e4a42"/><circle cx="71.1" cy="92.0" r="1.0" fill="#8b6a55"/><circle cx="99.3" cy="98.2" r="1.2" fill="#a9a298"/><circle cx="89.6" cy="90.6" r="0.9" fill="#7d7872"/><circle cx="93.0" cy="80.8" r="0.7" fill="#34302d"/><circle cx="70.9" cy="112.9" r="1.6" fill="#3b3533"/><circle cx="65.6" cy="117.0" r="1.7" fill="#5d5650"/><circle cx="58.4" cy="105.2" r="1.3" fill="#a9a298"/><circle cx="90.0" cy="96.3" r="1.1" fill="#34302d"/><circle cx="55.6" cy="112.8" r="1.6" fill="#8e4a42"/><circle cx="67.3" cy="117.4" r="1.7" fill="#8b6a55"/><circle cx="76.3" cy="110.8" r="1.5" fill="#4a5568"/><circle cx="83.7" cy="79.2" r="0.6" fill="#55504c"/><circle cx="81.3" cy="77.6" r="0.6" fill="#34302d"/><circle cx="81.1" cy="118.0" r="1.7" fill="#3b3533"/><circle cx="63.7" cy="99.9" r="1.2" fill="#4a5568"/><circle cx="88.5" cy="76.7" r="0.6" fill="#8b6a55"/><circle cx="92.9" cy="108.1" r="1.4" fill="#8e4a42"/><circle cx="113.6" cy="119.4" r="1.7" fill="#1d1b1c"/><circle cx="70.7" cy="96.1" r="1.1" fill="#bfb9ae"/><circle cx="87.4" cy="82.5" r="0.7" fill="#3b3533"/><circle cx="91.9" cy="108.2" r="1.4" fill="#4a5568"/><circle cx="73.6" cy="98.8" r="1.2" fill="#a9a298"/><circle cx="98.6" cy="99.5" r="1.2" fill="#2a2624"/><circle cx="86.1" cy="87.7" r="0.9" fill="#55504c"/><circle cx="89.8" cy="96.2" r="1.1" fill="#bfb9ae"/><circle cx="96.5" cy="93.6" r="1.0" fill="#a9a298"/><circle cx="83.5" cy="79.8" r="0.7" fill="#7d7872"/><circle cx="81.0" cy="100.1" r="1.2" fill="#5d5650"/><circle cx="82.9" cy="104.8" r="1.3" fill="#8b6a55"/><circle cx="89.5" cy="85.4" r="0.8" fill="#1d1b1c"/><circle cx="95.8" cy="100.3" r="1.2" fill="#6b5a4a"/><circle cx="88.7" cy="81.5" r="0.7" fill="#1d1b1c"/><circle cx="96.0" cy="109.9" r="1.5" fill="#3b3533"/><circle cx="71.7" cy="99.1" r="1.2" fill="#bfb9ae"/><circle cx="75.3" cy="85.5" r="0.8" fill="#1d1b1c"/><circle cx="84.1" cy="90.2" r="0.9" fill="#7d7872"/><circle cx="91.3" cy="85.3" r="0.8" fill="#3b3533"/><circle cx="98.8" cy="92.2" r="1.0" fill="#7d7872"/><circle cx="66.7" cy="95.0" r="1.1" fill="#34302d"/><circle cx="67.6" cy="104.0" r="1.3" fill="#2a2624"/><circle cx="88.2" cy="94.1" r="1.0" fill="#7d7872"/><circle cx="107.0" cy="115.8" r="1.6" fill="#a9a298"/><circle cx="64.5" cy="118.9" r="1.7" fill="#8e4a42"/><circle cx="83.6" cy="78.9" r="0.6" fill="#a9a298"/><circle cx="80.2" cy="98.0" r="1.1" fill="#5d5650"/><circle cx="90.0" cy="83.3" r="0.8" fill="#5d5650"/><circle cx="45.1" cy="120.1" r="1.7" fill="#1d1b1c"/><circle cx="66.3" cy="119.8" r="1.7" fill="#4a5568"/><circle cx="77.6" cy="108.5" r="1.4" fill="#6b5a4a"/><circle cx="72.6" cy="109.1" r="1.5" fill="#34302d"/><circle cx="74.5" cy="102.6" r="1.3" fill="#34302d"/><circle cx="99.2" cy="106.5" r="1.4" fill="#55504c"/><circle cx="91.0" cy="104.9" r="1.3" fill="#a9a298"/><circle cx="99.4" cy="113.8" r="1.6" fill="#8e4a42"/><circle cx="87.9" cy="77.9" r="0.6" fill="#1d1b1c"/><circle cx="98.3" cy="120.9" r="1.8" fill="#55504c"/><circle cx="107.2" cy="121.0" r="1.8" fill="#bfb9ae"/><circle cx="76.3" cy="108.7" r="1.4" fill="#3b3533"/><circle cx="90.3" cy="96.4" r="1.1" fill="#bfb9ae"/><circle cx="106.7" cy="107.8" r="1.4" fill="#bfb9ae"/><circle cx="87.1" cy="108.3" r="1.4" fill="#34302d"/><circle cx="71.0" cy="119.3" r="1.7" fill="#6b5a4a"/><circle cx="93.5" cy="92.6" r="1.0" fill="#8e4a42"/><circle cx="85.7" cy="104.1" r="1.3" fill="#5d5650"/><circle cx="92.3" cy="99.1" r="1.2" fill="#2a2624"/><circle cx="82.9" cy="117.8" r="1.7" fill="#2a2624"/><circle cx="75.3" cy="84.4" r="0.8" fill="#2a2624"/><circle cx="77.2" cy="86.7" r="0.8" fill="#55504c"/><circle cx="80.9" cy="99.7" r="1.2" fill="#5d5650"/><circle cx="73.7" cy="100.2" r="1.2" fill="#3b3533"/><circle cx="91.6" cy="76.5" r="0.6" fill="#5d5650"/><circle cx="80.7" cy="106.4" r="1.4" fill="#6b5a4a"/><circle cx="94.7" cy="106.5" r="1.4" fill="#6b5a4a"/><circle cx="90.2" cy="87.5" r="0.9" fill="#1d1b1c"/><circle cx="56.9" cy="121.6" r="1.8" fill="#3b3533"/><circle cx="63.8" cy="109.9" r="1.5" fill="#a9a298"/><circle cx="67.7" cy="95.6" r="1.1" fill="#bfb9ae"/><circle cx="64.4" cy="96.9" r="1.1" fill="#2a2624"/><circle cx="93.2" cy="92.3" r="1.0" fill="#4a5568"/><circle cx="95.7" cy="96.7" r="1.1" fill="#3b3533"/><circle cx="94.3" cy="117.9" r="1.7" fill="#bfb9ae"/><circle cx="95.8" cy="83.5" r="0.8" fill="#55504c"/><circle cx="63.6" cy="97.5" r="1.1" fill="#1d1b1c"/><circle cx="68.1" cy="102.7" r="1.3" fill="#34302d"/><circle cx="93.8" cy="116.6" r="1.7" fill="#5d5650"/><circle cx="81.4" cy="81.1" r="0.7" fill="#4a5568"/><circle cx="75.8" cy="113.9" r="1.6" fill="#7d7872"/><circle cx="85.0" cy="118.1" r="1.7" fill="#34302d"/><circle cx="96.4" cy="111.5" r="1.5" fill="#bfb9ae"/><circle cx="75.3" cy="93.7" r="1.0" fill="#7d7872"/><circle cx="48.8" cy="116.8" r="1.7" fill="#a9a298"/><circle cx="54.3" cy="120.8" r="1.8" fill="#7d7872"/><circle cx="88.9" cy="81.3" r="0.7" fill="#8e4a42"/><circle cx="89.8" cy="114.8" r="1.6" fill="#55504c"/><circle cx="83.9" cy="74.9" r="0.5" fill="#4a5568"/><circle cx="98.6" cy="120.0" r="1.7" fill="#34302d"/><circle cx="106.9" cy="103.8" r="1.3" fill="#8e4a42"/><circle cx="106.0" cy="111.2" r="1.5" fill="#1d1b1c"/><circle cx="73.9" cy="84.5" r="0.8" fill="#2a2624"/><circle cx="73.7" cy="111.0" r="1.5" fill="#1d1b1c"/><circle cx="87.6" cy="90.6" r="0.9" fill="#8e4a42"/><circle cx="84.7" cy="106.2" r="1.4" fill="#55504c"/><circle cx="86.7" cy="96.7" r="1.1" fill="#2a2624"/><circle cx="79.2" cy="88.8" r="0.9" fill="#a9a298"/><circle cx="87.7" cy="79.8" r="0.7" fill="#bfb9ae"/><circle cx="89.9" cy="80.6" r="0.7" fill="#8e4a42"/><circle cx="91.5" cy="81.3" r="0.7" fill="#4a5568"/><circle cx="82.0" cy="85.9" r="0.8" fill="#5d5650"/><circle cx="68.9" cy="113.3" r="1.6" fill="#7d7872"/><circle cx="109.5" cy="113.3" r="1.6" fill="#3b3533"/><circle cx="105.6" cy="112.7" r="1.5" fill="#7d7872"/><circle cx="56.1" cy="107.4" r="1.4" fill="#a9a298"/><circle cx="60.5" cy="117.3" r="1.7" fill="#8b6a55"/><circle cx="80.7" cy="84.6" r="0.8" fill="#1d1b1c"/><circle cx="108.0" cy="104.7" r="1.3" fill="#a9a298"/><circle cx="78.7" cy="89.5" r="0.9" fill="#3b3533"/><circle cx="59.4" cy="105.5" r="1.4" fill="#4a5568"/><circle cx="70.7" cy="91.9" r="1.0" fill="#8e4a42"/><circle cx="78.2" cy="107.0" r="1.4" fill="#8e4a42"/><circle cx="70.6" cy="117.0" r="1.7" fill="#3b3533"/><circle cx="65.0" cy="99.9" r="1.2" fill="#1d1b1c"/><circle cx="91.8" cy="93.7" r="1.0" fill="#1d1b1c"/><circle cx="108.3" cy="110.1" r="1.5" fill="#6b5a4a"/><circle cx="78.9" cy="88.7" r="0.9" fill="#8b6a55"/><circle cx="101.8" cy="99.8" r="1.2" fill="#a9a298"/><circle cx="84.8" cy="94.6" r="1.1" fill="#a9a298"/><circle cx="80.3" cy="104.6" r="1.3" fill="#7d7872"/><circle cx="92.3" cy="87.1" r="0.9" fill="#4a5568"/><circle cx="76.5" cy="83.0" r="0.7" fill="#8e4a42"/><circle cx="66.9" cy="117.3" r="1.7" fill="#8e4a42"/><circle cx="103.4" cy="98.0" r="1.2" fill="#3b3533"/><circle cx="84.6" cy="85.9" r="0.8" fill="#34302d"/><circle cx="87.4" cy="92.6" r="1.0" fill="#6b5a4a"/><circle cx="107.7" cy="112.4" r="1.5" fill="#3b3533"/><circle cx="65.4" cy="119.0" r="1.7" fill="#8b6a55"/><circle cx="90.5" cy="91.6" r="1.0" fill="#2a2624"/><circle cx="74.8" cy="98.6" r="1.2" fill="#34302d"/><circle cx="92.1" cy="93.9" r="1.0" fill="#a9a298"/><circle cx="77.4" cy="104.4" r="1.3" fill="#1d1b1c"/><circle cx="102.1" cy="106.7" r="1.4" fill="#55504c"/><circle cx="104.5" cy="95.5" r="1.1" fill="#6b5a4a"/><circle cx="85.6" cy="80.9" r="0.7" fill="#8b6a55"/><circle cx="95.9" cy="95.7" r="1.1" fill="#7d7872"/><circle cx="72.2" cy="119.7" r="1.7" fill="#1d1b1c"/><circle cx="51.2" cy="121.9" r="1.8" fill="#34302d"/><circle cx="84.1" cy="114.2" r="1.6" fill="#8e4a42"/><circle cx="73.9" cy="91.2" r="1.0" fill="#4a5568"/><circle cx="89.9" cy="75.2" r="0.5" fill="#8e4a42"/><circle cx="89.2" cy="90.1" r="0.9" fill="#4a5568"/><circle cx="81.7" cy="118.6" r="1.7" fill="#3b3533"/><circle cx="68.8" cy="91.7" r="1.0" fill="#bfb9ae"/><circle cx="67.2" cy="108.4" r="1.4" fill="#1d1b1c"/><circle cx="92.7" cy="117.1" r="1.7" fill="#2a2624"/><circle cx="100.9" cy="118.2" r="1.7" fill="#8b6a55"/><circle cx="83.4" cy="81.6" r="0.7" fill="#8e4a42"/><circle cx="97.4" cy="85.2" r="0.8" fill="#2a2624"/><circle cx="72.5" cy="87.0" r="0.9" fill="#1d1b1c"/><circle cx="60.2" cy="102.7" r="1.3" fill="#bfb9ae"/><circle cx="66.9" cy="121.7" r="1.8" fill="#8e4a42"/><circle cx="84.3" cy="88.3" r="0.9" fill="#2a2624"/><circle cx="97.8" cy="110.0" r="1.5" fill="#3b3533"/><circle cx="65.6" cy="121.4" r="1.8" fill="#bfb9ae"/><circle cx="90.4" cy="118.1" r="1.7" fill="#5d5650"/><circle cx="98.7" cy="121.8" r="1.8" fill="#8e4a42"/><circle cx="65.3" cy="113.5" r="1.6" fill="#55504c"/><circle cx="68.8" cy="113.2" r="1.6" fill="#4a5568"/><circle cx="91.9" cy="85.9" r="0.8" fill="#1d1b1c"/><circle cx="99.5" cy="115.7" r="1.6" fill="#1d1b1c"/><circle cx="105.4" cy="116.1" r="1.6" fill="#34302d"/><circle cx="98.0" cy="112.0" r="1.5" fill="#a9a298"/><circle cx="90.6" cy="88.2" r="0.9" fill="#3b3533"/><circle cx="69.0" cy="91.5" r="1.0" fill="#8b6a55"/><circle cx="84.1" cy="74.5" r="0.5" fill="#34302d"/><circle cx="82.1" cy="80.4" r="0.7" fill="#8e4a42"/><circle cx="89.1" cy="89.4" r="0.9" fill="#2a2624"/><circle cx="97.9" cy="115.6" r="1.6" fill="#6b5a4a"/><circle cx="82.0" cy="119.9" r="1.7" fill="#8e4a42"/><circle cx="89.8" cy="93.2" r="1.0" fill="#5d5650"/><circle cx="80.2" cy="105.2" r="1.3" fill="#7d7872"/><circle cx="88.8" cy="75.1" r="0.5" fill="#bfb9ae"/><circle cx="85.3" cy="118.5" r="1.7" fill="#3b3533"/><circle cx="76.4" cy="88.7" r="0.9" fill="#7d7872"/><circle cx="66.0" cy="107.9" r="1.4" fill="#34302d"/><circle cx="92.6" cy="83.9" r="0.8" fill="#55504c"/><circle cx="88.6" cy="82.7" r="0.7" fill="#34302d"/><circle cx="87.7" cy="115.7" r="1.6" fill="#bfb9ae"/><circle cx="90.0" cy="117.0" r="1.7" fill="#34302d"/><circle cx="88.5" cy="90.0" r="0.9" fill="#6b5a4a"/><circle cx="85.8" cy="100.0" r="1.2" fill="#3b3533"/><circle cx="90.5" cy="109.1" r="1.5" fill="#6b5a4a"/><circle cx="84.6" cy="100.5" r="1.2" fill="#2a2624"/><circle cx="87.1" cy="92.4" r="1.0" fill="#6b5a4a"/><circle cx="93.5" cy="85.1" r="0.8" fill="#4a5568"/><circle cx="84.1" cy="91.3" r="1.0" fill="#6b5a4a"/><circle cx="73.6" cy="106.1" r="1.4" fill="#bfb9ae"/><circle cx="86.6" cy="99.2" r="1.2" fill="#bfb9ae"/><circle cx="88.7" cy="111.8" r="1.5" fill="#2a2624"/><circle cx="57.2" cy="118.6" r="1.7" fill="#a9a298"/><circle cx="84.2" cy="77.0" r="0.6" fill="#55504c"/><circle cx="96.4" cy="91.2" r="1.0" fill="#8b6a55"/><circle cx="84.1" cy="80.3" r="0.7" fill="#34302d"/><circle cx="81.0" cy="82.4" r="0.7" fill="#6b5a4a"/><circle cx="78.8" cy="88.7" r="0.9" fill="#4a5568"/><circle cx="72.8" cy="99.0" r="1.2" fill="#1d1b1c"/><circle cx="104.5" cy="96.8" r="1.1" fill="#4a5568"/><circle cx="95.3" cy="108.7" r="1.4" fill="#1d1b1c"/><circle cx="47.7" cy="119.6" r="1.7" fill="#4a5568"/><circle cx="57.1" cy="106.4" r="1.4" fill="#a9a298"/><circle cx="65.7" cy="113.0" r="1.6" fill="#a9a298"/><circle cx="74.1" cy="109.4" r="1.5" fill="#6b5a4a"/><circle cx="93.2" cy="114.5" r="1.6" fill="#55504c"/><circle cx="95.8" cy="119.1" r="1.7" fill="#34302d"/><circle cx="110.6" cy="116.4" r="1.6" fill="#6b5a4a"/><circle cx="89.3" cy="106.5" r="1.4" fill="#2a2624"/><circle cx="101.8" cy="91.5" r="1.0" fill="#4a5568"/><circle cx="84.6" cy="101.2" r="1.2" fill="#34302d"/><circle cx="94.4" cy="86.0" r="0.8" fill="#1d1b1c"/><circle cx="76.1" cy="119.7" r="1.7" fill="#6b5a4a"/><circle cx="77.1" cy="89.3" r="0.9" fill="#34302d"/><circle cx="110.2" cy="110.7" r="1.5" fill="#3b3533"/><circle cx="85.3" cy="83.0" r="0.7" fill="#1d1b1c"/><circle cx="98.0" cy="103.3" r="1.3" fill="#7d7872"/><circle cx="85.9" cy="84.3" r="0.8" fill="#6b5a4a"/><circle cx="60.6" cy="109.2" r="1.5" fill="#3b3533"/><circle cx="103.3" cy="114.3" r="1.6" fill="#3b3533"/><circle cx="76.9" cy="115.8" r="1.6" fill="#55504c"/><circle cx="99.6" cy="119.9" r="1.7" fill="#8e4a42"/><circle cx="77.1" cy="113.7" r="1.6" fill="#7d7872"/><circle cx="96.1" cy="102.4" r="1.3" fill="#8e4a42"/><circle cx="111.0" cy="110.7" r="1.5" fill="#1d1b1c"/><circle cx="100.6" cy="102.1" r="1.3" fill="#a9a298"/><circle cx="94.9" cy="93.4" r="1.0" fill="#6b5a4a"/><circle cx="84.8" cy="93.2" r="1.0" fill="#2a2624"/><circle cx="87.2" cy="87.4" r="0.9" fill="#8b6a55"/><circle cx="78.2" cy="91.2" r="1.0" fill="#5d5650"/><circle cx="78.8" cy="108.8" r="1.4" fill="#3b3533"/><circle cx="104.0" cy="104.5" r="1.3" fill="#1d1b1c"/><circle cx="82.8" cy="89.0" r="0.9" fill="#bfb9ae"/><circle cx="64.3" cy="95.4" r="1.1" fill="#3b3533"/><circle cx="63.9" cy="113.8" r="1.6" fill="#8b6a55"/><circle cx="110.3" cy="112.9" r="1.6" fill="#8e4a42"/><circle cx="113.5" cy="112.7" r="1.5" fill="#3b3533"/><circle cx="81.3" cy="107.1" r="1.4" fill="#3b3533"/><circle cx="89.8" cy="103.0" r="1.3" fill="#2a2624"/><circle cx="93.3" cy="84.2" r="0.8" fill="#3b3533"/><circle cx="82.6" cy="81.7" r="0.7" fill="#55504c"/><circle cx="102.4" cy="103.4" r="1.3" fill="#8e4a42"/><circle cx="72.8" cy="93.6" r="1.0" fill="#4a5568"/><circle cx="75.2" cy="117.9" r="1.7" fill="#2a2624"/><circle cx="93.9" cy="82.5" r="0.7" fill="#a9a298"/><circle cx="96.6" cy="110.8" r="1.5" fill="#5d5650"/><circle cx="83.0" cy="81.4" r="0.7" fill="#a9a298"/><circle cx="102.9" cy="100.0" r="1.2" fill="#7d7872"/><circle cx="98.4" cy="84.5" r="0.8" fill="#a9a298"/><circle cx="65.2" cy="116.8" r="1.7" fill="#4a5568"/><circle cx="84.9" cy="98.3" r="1.2" fill="#1d1b1c"/><circle cx="95.0" cy="100.7" r="1.2" fill="#1d1b1c"/><circle cx="87.2" cy="81.5" r="0.7" fill="#3b3533"/><circle cx="82.9" cy="89.5" r="0.9" fill="#3b3533"/><circle cx="90.5" cy="105.2" r="1.3" fill="#a9a298"/><circle cx="83.9" cy="106.8" r="1.4" fill="#7d7872"/><circle cx="80.6" cy="108.9" r="1.4" fill="#a9a298"/><circle cx="70.1" cy="95.5" r="1.1" fill="#2a2624"/><circle cx="89.2" cy="76.4" r="0.6" fill="#4a5568"/><circle cx="89.8" cy="75.2" r="0.5" fill="#8e4a42"/><circle cx="104.0" cy="104.2" r="1.3" fill="#1d1b1c"/><circle cx="76.3" cy="90.3" r="0.9" fill="#1d1b1c"/><circle cx="62.8" cy="100.8" r="1.2" fill="#3b3533"/><circle cx="108.7" cy="106.5" r="1.4" fill="#a9a298"/><circle cx="92.5" cy="91.9" r="1.0" fill="#2a2624"/><circle cx="80.3" cy="108.9" r="1.4" fill="#2a2624"/><circle cx="55.7" cy="108.6" r="1.4" fill="#4a5568"/><circle cx="101.9" cy="102.3" r="1.3" fill="#55504c"/><circle cx="77.9" cy="87.7" r="0.9" fill="#3b3533"/><circle cx="76.8" cy="113.1" r="1.6" fill="#bfb9ae"/><circle cx="101.9" cy="99.1" r="1.2" fill="#7d7872"/><circle cx="97.3" cy="101.2" r="1.2" fill="#55504c"/><circle cx="68.5" cy="99.1" r="1.2" fill="#8e4a42"/><circle cx="102.1" cy="100.8" r="1.2" fill="#8b6a55"/><circle cx="86.3" cy="79.8" r="0.7" fill="#7d7872"/><circle cx="105.4" cy="119.1" r="1.7" fill="#34302d"/><circle cx="85.9" cy="89.5" r="0.9" fill="#7d7872"/><circle cx="106.2" cy="108.2" r="1.4" fill="#7d7872"/><circle cx="95.5" cy="102.4" r="1.3" fill="#8e4a42"/><circle cx="71.8" cy="94.5" r="1.1" fill="#bfb9ae"/><circle cx="80.6" cy="96.2" r="1.1" fill="#6b5a4a"/><circle cx="82.3" cy="90.7" r="1.0" fill="#bfb9ae"/><circle cx="96.6" cy="105.8" r="1.4" fill="#2a2624"/><circle cx="66.9" cy="94.3" r="1.1" fill="#5d5650"/><circle cx="92.6" cy="87.0" r="0.9" fill="#5d5650"/><circle cx="102.9" cy="102.7" r="1.3" fill="#7d7872"/></g><path d="M138 132 L180 152 V180 H158 Z" fill="#4e545b"/><path d="M138 132 L180 152 V157 L138 136 Z" fill="#878d92"/><path d="M30 122 C60 112 120 114 150 124 L162 180 H30 Z" fill="#2b2522"/><g filter="url(#b1)"><ellipse cx="40" cy="128" rx="5" ry="6" fill="#2a211c"/><path d="M33 134 h14 l2 26 h-18 Z" fill="#1d1b1d"/><ellipse cx="56" cy="124" rx="5" ry="6" fill="#3a3634"/><path d="M48 132 c6 -4 14 -3 18 2 l-2 28 h-16 Z" fill="#93a0b3"/><ellipse cx="72" cy="128" rx="5" ry="6" fill="#231b18"/><ellipse cx="92" cy="126" rx="5" ry="6" fill="#2a1f1a"/><path d="M64 138 l14 6 l-4 8 l-12 -6 Z" fill="#e6e2de"/><path d="M58 148 c8 -8 22 -6 28 2 l4 30 h-36 Z" fill="#9a6e55"/><path d="M56 160 l12 -10 l6 18 l8 -16 l8 12 v16 h-34 Z" fill="#1c1a1c"/><ellipse cx="72" cy="138" rx="8" ry="8" fill="#241a16"/><ellipse cx="99" cy="131" rx="10" ry="11" fill="#2a1d17"/><path d="M84 150 c8 -10 34 -10 42 2 l4 28 h-48 Z" fill="#80523e"/><path d="M100 148 v32" stroke="#6a4030" stroke-width="1.500"/><ellipse cx="118" cy="127" rx="7" ry="8" fill="#241b17"/><path d="M108 136 c8 -4 18 -2 22 4 v12 h-22 Z" fill="#3b3838"/><ellipse cx="131" cy="126" rx="6" ry="8" fill="#1f1714"/><ellipse cx="138" cy="134" rx="6" ry="7" fill="#1d1512"/><path d="M128 142 c8 -6 22 -4 28 4 l2 12 h-30 Z" fill="#211f20"/><path d="M124 158 c4 -12 30 -12 38 0 l8 22 h-48 Z" fill="#5d3420"/><path d="M132 152 c8 -4 18 -3 24 3 l10 25 h-8 l-8 -18 Z" fill="#7a4a2c"/><ellipse cx="16" cy="126" rx="17" ry="25" fill="#30261e"/><path d="M2 106 c8 -6 22 -5 30 6 l2 20 h-32 Z" fill="#2a211a"/><path d="M22 138 h10 v16 h-10 Z" fill="#7d5f48"/><path d="M0 151 C14 146 40 148 52 156 L66 180 H0 Z" fill="#e6e5ec"/></g></g></svg>
<svg class="b" style="left:1585px;top:425px" width="180" height="180" viewBox="0 0 180 180"><defs><clipPath id="pc2"><rect x="0" y="0" width="180" height="180" rx="14"/></clipPath><linearGradient id="sky3" x1="0" y1="0" x2="1" y2=".35"><stop offset="0" stop-color="#dcd8e2"/><stop offset=".55" stop-color="#d4d3de"/><stop offset=".85" stop-color="#b4c9d9"/><stop offset="1" stop-color="#9fc0d6"/></linearGradient><linearGradient id="skyf" x1="0" y1="0" x2="0" y2="1"><stop offset="0" stop-color="#e4e0e8" stop-opacity="0"/><stop offset="1" stop-color="#e6e2ea"/></linearGradient><linearGradient id="wat3" x1="0" y1="0" x2="0" y2="1"><stop offset="0" stop-color="#dbd7e0"/><stop offset=".45" stop-color="#cfcdd8"/><stop offset="1" stop-color="#b4b7c0"/></linearGradient><radialGradient id="dk3" cx=".85" cy="1.05" r=".62"><stop offset="0" stop-color="#27343d"/><stop offset=".55" stop-color="#3f4e59" stop-opacity=".75"/><stop offset="1" stop-color="#6b7782" stop-opacity="0"/></radialGradient><filter id="b2"><feGaussianBlur stdDeviation="0.9"/></filter></defs><g clip-path="url(#pc2)"><rect width="180" height="106" fill="url(#sky3)"/><rect y="40" width="180" height="66" fill="url(#skyf)"/><rect y="104" width="180" height="76" fill="url(#wat3)"/><rect y="104" width="180" height="76" fill="url(#dk3)"/><rect y="104" width="180" height="5" fill="#8d979f" opacity=".7"/><rect x="120" y="104" width="60" height="4" fill="#4c5b63"/><path d="M48 105 L51 82 L56 80 L60 86 L78 66 L88 59 L96 66 L108 72 L114 68 L120 72 L128 92 L132 105 Z" fill="#2d302c"/><path d="M48 105 L51 82 L56 80 L60 86 L66 105 Z" fill="#5b5e4c" opacity=".6"/><path d="M49 112 H132 L128 126 L118 142 L110 146 L100 142 L90 158 L82 150 L66 136 L56 134 L52 122 Z" fill="#23272a" filter="url(#b2)"/></g></svg>
<svg class="b" style="left:1783px;top:425px" width="56" height="180" viewBox="0 0 56 180"><defs><clipPath id="pc3"><rect x="0" y="0" width="180" height="180" rx="14"/></clipPath><linearGradient id="wood" x1="0" y1="0" x2="0" y2="1"><stop offset="0" stop-color="#d9c29a"/><stop offset=".5" stop-color="#ecd9b6"/><stop offset="1" stop-color="#f1e2c6"/></linearGradient><radialGradient id="oni" cx=".45" cy=".4" r=".65"><stop offset="0" stop-color="#9b3a4b"/><stop offset="1" stop-color="#4f1320"/></radialGradient><filter id="b4"><feGaussianBlur stdDeviation="2.2"/></filter></defs><g clip-path="url(#pc3)"><rect width="60" height="180" fill="url(#wood)"/><rect width="60" height="42" fill="#4c3a4a"/><rect y="0" width="60" height="18" fill="#2d2230"/><g filter="url(#b4)"><rect y="30" width="60" height="50" fill="#5d8a48"/><path d="M20 20 L60 8 V70 L30 60 Z" fill="#6fa653"/><path d="M0 60 h34 v46 h-34 Z" fill="#6c9a58"/><path d="M24 72 h36 v36 h-30 Z" fill="#e6dcae"/></g><path d="M0 112 L60 96 M0 138 L60 118 M0 156 L60 140" stroke="#c9a878" stroke-width="1.5" fill="none"/><ellipse cx="58" cy="104" rx="24" ry="26" fill="url(#oni)"/><path d="M46 88 q6 -6 12 -4 v18 q-8 2 -12 -14 Z" fill="#e9d5dc" opacity=".65"/><circle cx="46" cy="133" r="3.200" fill="#1d1a1c"/><circle cx="45" cy="150" r="2.600" fill="#1f1c1e"/><circle cx="39" cy="155" r="2.800" fill="#1f1c1e"/><circle cx="21" cy="158" r="2.600" fill="#1f1c1e"/><circle cx="16" cy="162" r="2.600" fill="#59583a"/></g></svg>
<div class="b" style="left:1189.2px;top:389.1px;width:58.6px;height:37px;background:#4b978a;border-radius:7px 7px 0 0;border:2px solid #3f877b;"></div>
<span class="t" style="left:1197.34px;top:399.74px;font-size:18.89px;color:#fff;-webkit-text-stroke:0.4px #fff;transform:scaleX(1.1149);">Row</span>
<div class="b" style="left:1188.8px;top:424.7px;width:650.2px;height:180px;border:3px solid #4b998c;"></div>
<div class="b" style="left:1896.3px;top:218.3px;width:59.5px;height:59.5px;background:#2b323c;border-radius:15px;"></div>
<svg class="b" style="left:1911px;top:242.4px;" width="30.5" height="12.2" viewBox="0 0 35 14" fill="none" stroke="#fff" stroke-width="2.2" stroke-linecap="round" stroke-linejoin="round"><rect x="1.2" y="1.2" width="32.6" height="11.6" rx="1.5"/><rect x="12.5" y="5.3" width="10" height="3.4" fill="#fff" stroke="none"/><path d="M4.5 7 h3 M6 5.5 v3" stroke-width="1"/></svg>
<div class="b" style="left:2318.2px;top:110px;width:19.8px;height:1420.5px;background:#101113;border-radius:10px;"></div>
<svg class="b" style="left:2365.9px;top:128.6px;" width="27" height="20.15" viewBox="0 0 33.5 25" fill="none" stroke="#fff" stroke-width="2.4" stroke-linecap="round" stroke-linejoin="round"><path d="M2 1.5 H31.5 M2 23.5 H31.5"/><rect x="1.3" y="8.3" width="8" height="8" rx="1.5"/><rect x="12.7" y="8.3" width="8" height="8" rx="1.5"/><rect x="24.1" y="8.3" width="8" height="8" rx="1.5"/></svg>
<span class="t" style="left:2407px;top:124.66px;font-size:26.16px;color:#fff;font-weight:700;transform:scaleX(0.9244);">Row</span>
<div class="b" style="left:2364.6px;top:171px;width:399px;height:64.5px;background:#090c10;border-radius:22px;border:2px solid #323944;"></div>
<span class="t" style="left:2387.82px;top:188.97px;font-size:28.03px;color:#fff;-webkit-text-stroke:0.3px #fff;transform:scaleX(0.9525);">Row</span>
<div class="b" style="left:2776px;top:171px;width:63.5px;height:63.5px;background:#1e2329;border-radius:17px;border:2px solid #323944;"></div>
<div class="b" style="left:2852.3px;top:171px;width:63.5px;height:63.5px;background:#1e2329;border-radius:17px;border:2px solid #323944;"></div>
<svg class="b" style="left:2792.8px;top:188px;" width="30" height="29.5" viewBox="0 0 30 29.5" fill="none" stroke="#fff" stroke-width="2.3" stroke-linecap="round" stroke-linejoin="round"><path d="M7.500 1.500 H22.500 L28.500 10.500 L15 28 L1.500 10.500 Z M1.500 10.500 H28.500 M11 1.500 L9.500 10.500 L15 28 L20.500 10.500 L19 1.500"/></svg>
<svg class="b" style="left:2869px;top:187.5px;overflow:visible;" width="30.5" height="30.5" viewBox="0 0 40 40" fill="none" stroke="#fff" stroke-width="3.41" stroke-linecap="round" stroke-linejoin="round"><path d="M18.5 2.8 H9.5 a8 8 0 0 0 -8 8 V30.5 a8 8 0 0 0 8 8 H30.3 a8 8 0 0 0 8 -8 V19.5"/><path d="M30 1 V14 M23 7.400 H38.500"/><circle cx="13" cy="13.300" r="3.600"/><circle cx="13" cy="26.800" r="3.600"/></svg>
<div class="b" style="left:2364.6px;top:256px;width:551.3px;height:71.5px;background:#1e2329;border-radius:19px;"></div>
<div class="b" style="left:2368px;top:260px;width:84px;height:63.8px;background:#0f1113;border-radius:15px;"></div>
<svg class="b" style="left:2390px;top:273.5px;overflow:visible;" width="40" height="40" viewBox="0 0 40 40" fill="none" stroke="#fff" stroke-width="3" stroke-linecap="round" stroke-linejoin="round"><g transform="rotate(45 20 20)"><path d="M10.500 15.300 H-0.500 V24.700 H10"/><path d="M29 14.700 C38 15 43.500 18 47 20 C43.500 22 38 25 29 25.300"/><path d="M37 21.800 L47 20 L38 24 C36 24.600 34 25 29 25.300 Z" fill="#fff"/></g><g transform="rotate(-45 20 20.200)"><rect x="1.300" y="13.200" width="37.400" height="14" rx="1" fill="#0f1113"/><path d="M9 13.200 v5.200 M15.700 13.200 v5.200 M22.400 13.200 v5.200 M29.100 13.200 v5.200" stroke-width="2.400" stroke-linecap="butt"/></g></svg>
<svg class="b" style="left:2482px;top:274px;" width="40" height="40" viewBox="0 0 40 40" fill="none" stroke="#8e98a4" stroke-width="2.5" stroke-linecap="round" stroke-linejoin="round"><circle cx="5.500" cy="6.700" r="4.500" fill="#8e98a4" stroke="none"/><circle cx="27.500" cy="34.300" r="4.500" fill="#8e98a4" stroke="none"/><path d="M5.500 6.700 C10 10 10.500 14 11 19 C11.500 27 16 33.500 27.500 34.300" stroke-width="2.100"/><path d="M23.600 4 L36.300 10.500 L23.400 17.800 Z" stroke-width="2.900" stroke-linejoin="miter"/><path d="M31 16.200 L35.500 23.800" stroke-width="3"/></svg>
<svg class="b" style="left:2575.5px;top:273.5px;" width="37" height="39.5" viewBox="0 0 37 39.5" fill="none" stroke="#8e98a4" stroke-width="2.6" stroke-linecap="round" stroke-linejoin="round"><rect x="1.500" y="1.500" width="34" height="36.500" rx="3.500"/><path d="M1.500 13.700 H35.500 M1.500 25.800 H35.500"/><g fill="#8e98a4" stroke="none"><circle cx="24" cy="7.600" r="1.800"/><circle cx="29.500" cy="7.600" r="1.800"/><circle cx="24" cy="19.700" r="1.800"/><circle cx="29.500" cy="19.700" r="1.800"/><circle cx="24" cy="31.900" r="1.800"/><circle cx="29.500" cy="31.900" r="1.800"/></g></svg>
<svg class="b" style="left:2671.5px;top:275px;" width="28.65" height="37.5" viewBox="0 0 27.5 36" fill="none" stroke="#8e98a4" stroke-width="2.5" stroke-linecap="round" stroke-linejoin="round"><path d="M1.5 2 V34 M26 2 V34"/><rect x="9.5" y="1.3" width="8.5" height="8.5" rx="1.5"/><rect x="9.5" y="13.7" width="8.5" height="8.5" rx="1.5"/><rect x="9.5" y="26.1" width="8.5" height="8.5" rx="1.5"/></svg>
<svg class="b" style="left:2770.5px;top:280px;" width="20.5" height="25" viewBox="0 0 20.5 25" fill="none" stroke="#8e98a4" stroke-width="0" stroke-linecap="round" stroke-linejoin="round"><path d="M0.500 0.500 L20 12.500 L0.500 24.500 Z" fill="#8e98a4" stroke="none"/></svg>
<svg class="b" style="left:2851.5px;top:274.5px;" width="38" height="38.5" viewBox="0 0 38 38.5" fill="none" stroke="#8e98a4" stroke-width="2.5" stroke-linecap="round" stroke-linejoin="round"><path d="M20 2.500 H10.500 a8 8 0 0 0 -8 8 V28 a8 8 0 0 0 8 8 H24.500 a8 8 0 0 0 8 -8 V17"/><path d="M30.500 1 V12 M25 6.500 H36"/><path d="M9.500 12.500 H16 M9.500 20 H25 M9.500 27.500 H25"/></svg>
<div class="b" style="left:2364.6px;top:345px;width:551.3px;height:79.5px;border-radius:0 0 18px 18px;border:2px solid #323944;border-top:none;clip-path:inset(13.500px 0 0 0);"></div>
<span class="t" style="left:2631.5px;top:362.43px;font-size:25.02px;color:#97a1ad;font-weight:700;transform:scaleX(0.9957);">B</span>
<svg class="b" style="left:2627.3px;top:404px;" width="25.5" height="12" viewBox="0 0 25.5 12" fill="none" stroke="#97a1ad" stroke-width="2" stroke-linecap="round" stroke-linejoin="round"><rect x="6.200" y="1.400" width="13" height="4" rx="2" stroke-width="1.700"/><path d="M2 9.400 H23.500" stroke-width="3"/></svg>
<span class="t" style="left:2363.46px;top:443.46px;font-size:26.99px;color:#a0aab6;-webkit-text-stroke:0.3px #a0aab6;transform:scaleX(0.9725);">Alignment</span>
<svg class="b" style="left:2486.5px;top:445.5px;" width="23" height="23" viewBox="0 0 23 23" fill="none" stroke="#5d6773" stroke-width="2" stroke-linecap="round" stroke-linejoin="round"><circle cx="11.5" cy="11.5" r="10.4"/><path d="M11.5 10.7 v5.98" stroke-width="2.4"/><circle cx="11.5" cy="5.98" r="1.5" fill="#5d6773" stroke="none"/></svg>
<svg class="b" style="left:2605px;top:443.5px;" width="27" height="28" viewBox="0 0 27 28" fill="none" stroke="#a0aab6" stroke-width="2.5" stroke-linecap="round" stroke-linejoin="round"><path d="M2.300 9.600 A11.250 11.250 0 1 1 5.300 22.900"/><path d="M1.400 1.800 V10.400 H9.600"/></svg>
<div class="b" style="left:2364.1px;top:481px;width:263.6px;height:175.4px;border-radius:16px;border:2px solid #323944;"></div>
<div class="b" style="left:2386.2px;top:502.3px;width:16px;height:16.4px;background:#343b46;border-radius:3.8px;"></div>
<div class="b" style="left:2386.2px;top:561px;width:16px;height:16.4px;background:#343b46;border-radius:3.8px;"></div>
<div class="b" style="left:2386.2px;top:619.4px;width:16px;height:16.4px;background:#343b46;border-radius:3.8px;"></div>
<div class="b" style="left:2488.2px;top:502.3px;width:16px;height:16.4px;background:#343b46;border-radius:3.8px;"></div>
<div class="b" style="left:2488.2px;top:561px;width:16px;height:16.4px;background:#343b46;border-radius:3.8px;"></div>
<div class="b" style="left:2488.2px;top:619.4px;width:16px;height:16.4px;background:#343b46;border-radius:3.8px;"></div>
<div class="b" style="left:2589.6px;top:502.3px;width:16px;height:16.4px;background:#343b46;border-radius:3.8px;"></div>
<div class="b" style="left:2589.6px;top:561px;width:16px;height:16.4px;background:#343b46;border-radius:3.8px;"></div>
<div class="b" style="left:2589.6px;top:619.4px;width:16px;height:16.4px;background:#343b46;border-radius:3.8px;"></div>
<span class="t" style="left:2651.71px;top:499.98px;font-size:25.43px;color:#a0aab6;-webkit-text-stroke:0.3px #a0aab6;transform:scaleX(1.0408);">X</span>
<svg class="b" style="left:2677.2px;top:501.5px;" width="27" height="25" viewBox="0 0 27 25" fill="none" stroke="#d9895f" stroke-width="2.2" stroke-linecap="round" stroke-linejoin="round"><circle cx="5.2" cy="5.4" r="3.7"/><path d="M14.5 5.4 H25"/><circle cx="21.2" cy="19.6" r="3.7"/><path d="M1.5 19.6 H12"/></svg>
<div class="b" style="left:2652.3px;top:537.4px;width:119.5px;height:63px;border-radius:19px;border:2px solid #323944;"></div>
<span class="t" style="left:2795.11px;top:499.98px;font-size:25.43px;color:#a0aab6;-webkit-text-stroke:0.3px #a0aab6;transform:scaleX(1.0114);">Y</span>
<svg class="b" style="left:2820.2px;top:501.5px;" width="27" height="25" viewBox="0 0 27 25" fill="none" stroke="#d9895f" stroke-width="2.2" stroke-linecap="round" stroke-linejoin="round"><circle cx="5.2" cy="5.4" r="3.7"/><path d="M14.5 5.4 H25"/><circle cx="21.2" cy="19.6" r="3.7"/><path d="M1.5 19.6 H12"/></svg>
<div class="b" style="left:2796px;top:537.4px;width:120px;height:63px;border-radius:19px;border:2px solid #323944;"></div>
<div class="b" style="left:2340px;top:677.2px;width:599px;height:2px;background:#323944;"></div>
<span class="t" style="left:2364.4px;top:703.66px;font-size:26.16px;color:#fff;font-weight:700;transform:scaleX(0.9339);">Testing</span>
<svg class="b" style="left:2890.5px;top:704.2px;overflow:visible;" width="14.5" height="25" viewBox="0 0 14.5 25" fill="none" stroke="#a0aab6" stroke-width="3" stroke-linecap="round" stroke-linejoin="round"><path d="M1.5 1.5 L13 12.5 L1.5 23.5"/></svg>
<div class="b" style="left:2340px;top:755px;width:599px;height:2px;background:#323944;"></div>
<span class="t" style="left:2364.4px;top:781.66px;font-size:26.16px;color:#fff;font-weight:700;transform:scaleX(0.9238);">Row Properties</span>
<svg class="b" style="left:2547.5px;top:783.3px;" width="23" height="23" viewBox="0 0 23 23" fill="none" stroke="#5d6773" stroke-width="2" stroke-linecap="round" stroke-linejoin="round"><circle cx="11.5" cy="11.5" r="10.4"/><path d="M11.5 10.7 v5.98" stroke-width="2.4"/><circle cx="11.5" cy="5.98" r="1.5" fill="#5d6773" stroke="none"/></svg>
<svg class="b" style="left:2886px;top:787.4px;overflow:visible;" width="25" height="13.8" viewBox="0 0 25 13.8" fill="none" stroke="#a0aab6" stroke-width="3" stroke-linecap="round" stroke-linejoin="round"><path d="M1.5 1.5 L12.5 12.3 L23.5 1.5"/></svg>
<span class="t" style="left:2363.5px;top:832.22px;font-size:25.74px;color:#a0aab6;-webkit-text-stroke:0.3px #a0aab6;transform:scaleX(0.9453);">Main Axis Size</span>
<svg class="b" style="left:2527.5px;top:833.8px;" width="23" height="23" viewBox="0 0 23 23" fill="none" stroke="#5d6773" stroke-width="2" stroke-linecap="round" stroke-linejoin="round"><circle cx="11.5" cy="11.5" r="10.4"/><path d="M11.5 10.7 v5.98" stroke-width="2.4"/><circle cx="11.5" cy="5.98" r="1.5" fill="#5d6773" stroke="none"/></svg>
<svg class="b" style="left:2373.8px;top:881.5px;" width="43.5" height="43.5" viewBox="0 0 43.5 43.5" fill="none" stroke="#8e98a4" stroke-width="3" stroke-linecap="round" stroke-linejoin="round"><rect x="1.800" y="2" width="39.800" height="39.800" rx="9.500"/><path d="M15.900 9.500 L21.700 15.700 L27.600 9.500 M15.900 35.600 L21.700 29.100 L27.600 35.600 M8.800 16.300 L15.300 21.800 L8.800 27.700 M35.500 16.300 L28.700 21.800 L35.500 27.700" stroke-width="3.300"/></svg>
<svg class="b" style="left:2445.8px;top:880.8px;" width="44.5" height="45" viewBox="0 0 44.5 45" fill="none" stroke="#fff" stroke-width="3.6" stroke-linecap="round" stroke-linejoin="round"><rect x="2.100" y="2.200" width="40.200" height="40.600" rx="9.500"/><path d="M16.300 12.300 L21.800 6.600 L27.800 12.300 M16.300 32.200 L21.800 37.900 L27.800 32.200 M12.800 16.400 L6.800 22.200 L12.800 28 M31.800 16.400 L37.800 22.200 L31.800 28" stroke-width="3.600"/></svg>
<span class="t" style="left:2363.5px;top:944.12px;font-size:25.74px;color:#a0aab6;-webkit-text-stroke:0.3px #a0aab6;transform:scaleX(0.9921);">Main Axis Alignment</span>
<svg class="b" style="left:2598px;top:945.7px;" width="23" height="23" viewBox="0 0 23 23" fill="none" stroke="#5d6773" stroke-width="2" stroke-linecap="round" stroke-linejoin="round"><circle cx="11.5" cy="11.5" r="10.4"/><path d="M11.5 10.7 v5.98" stroke-width="2.4"/><circle cx="11.5" cy="5.98" r="1.5" fill="#5d6773" stroke="none"/></svg>
<svg class="b" style="left:2373.8px;top:993px;" width="44" height="44" viewBox="0 0 44 44" fill="#fff" stroke="#fff" stroke-width="0" stroke-linecap="round" stroke-linejoin="round"><rect x="0" y="0" width="9" height="44" rx="2"/><rect x="13" y="19.300" width="31" height="5.400" rx="2"/></svg>
<svg class="b" style="left:2445.8px;top:993px;" width="44" height="44" viewBox="0 0 44 44" fill="#8e98a4" stroke="#8e98a4" stroke-width="0" stroke-linecap="round" stroke-linejoin="round"><rect x="17.500" y="0" width="9" height="44" rx="2"/><rect x="0" y="19.300" width="13" height="5.400" rx="2"/><rect x="31" y="19.300" width="13" height="5.400" rx="2"/></svg>
<svg class="b" style="left:2517.8px;top:993px;" width="44" height="44" viewBox="0 0 44 44" fill="#8e98a4" stroke="#8e98a4" stroke-width="0" stroke-linecap="round" stroke-linejoin="round"><rect x="35" y="0" width="9" height="44" rx="2"/><rect x="0" y="19.300" width="31" height="5.400" rx="2"/></svg>
<svg class="b" style="left:2589.8px;top:993px;" width="44" height="44" viewBox="0 0 44 44" fill="#8e98a4" stroke="#8e98a4" stroke-width="0" stroke-linecap="round" stroke-linejoin="round"><rect x="7" y="5" width="8.500" height="34" rx="2"/><rect x="27.500" y="5" width="8.500" height="34" rx="2"/><rect x="0" y="19.300" width="5" height="5.400" rx="2"/><rect x="18.500" y="19.300" width="6.500" height="5.400" rx="1"/><rect x="38.500" y="19.300" width="5" height="5.400" rx="2"/></svg>
<svg class="b" style="left:2661.8px;top:993px;" width="44.5" height="44" viewBox="0 0 44.5 44" fill="none" stroke="#8e98a4" stroke-width="2.2" stroke-linecap="round" stroke-linejoin="round"><rect x="1.200" y="1.200" width="18.500" height="41.600" rx="4.500"/><rect x="24.500" y="1.200" width="18.500" height="41.600" rx="4.500"/><rect x="6" y="6" width="9" height="32" rx="1.500" fill="#8e98a4" stroke="none"/><rect x="29.300" y="6" width="9" height="32" rx="1.500" fill="#8e98a4" stroke="none"/></svg>
<svg class="b" style="left:2733.8px;top:993px;" width="44" height="44" viewBox="0 0 44 44" fill="#8e98a4" stroke="#8e98a4" stroke-width="0" stroke-linecap="round" stroke-linejoin="round"><rect x="0" y="5" width="8.500" height="34" rx="2"/><rect x="35.500" y="5" width="8.500" height="34" rx="2"/><rect x="13.500" y="19.300" width="17" height="5.400" rx="2"/></svg>
<span class="t" style="left:2363.5px;top:1056.02px;font-size:25.74px;color:#a0aab6;-webkit-text-stroke:0.3px #a0aab6;transform:scaleX(0.9912);">Cross Axis Alignment</span>
<svg class="b" style="left:2608.7px;top:1057.5px;" width="23" height="23" viewBox="0 0 23 23" fill="none" stroke="#5d6773" stroke-width="2" stroke-linecap="round" stroke-linejoin="round"><circle cx="11.5" cy="11.5" r="10.4"/><path d="M11.5 10.7 v5.98" stroke-width="2.4"/><circle cx="11.5" cy="5.98" r="1.5" fill="#5d6773" stroke="none"/></svg>
<svg class="b" style="left:2371.6px;top:1103px;" width="44.5" height="44.5" viewBox="0 0 44.5 44.5" fill="#8e98a4" stroke="#8e98a4" stroke-width="0" stroke-linecap="round" stroke-linejoin="round"><rect x="0" y="0" width="44.500" height="9" rx="2"/><rect x="20" y="13" width="4.400" height="31" rx="2"/></svg>
<svg class="b" style="left:2443.6px;top:1103px;" width="44.5" height="44.5" viewBox="0 0 44.5 44.5" fill="#fff" stroke="#fff" stroke-width="0" stroke-linecap="round" stroke-linejoin="round"><rect x="0" y="17.700" width="44.500" height="9" rx="2"/><rect x="20" y="0" width="4.600" height="13.500" rx="2"/><rect x="20" y="31" width="4.600" height="13.500" rx="2"/></svg>
<svg class="b" style="left:2515.6px;top:1103px;" width="44.5" height="44.5" viewBox="0 0 44.5 44.5" fill="#8e98a4" stroke="#8e98a4" stroke-width="0" stroke-linecap="round" stroke-linejoin="round"><rect x="0" y="35.500" width="44.500" height="9" rx="2"/><rect x="20" y="0" width="4.400" height="31" rx="2"/></svg>
<svg class="b" style="left:2602px;top:1104.5px;" width="20" height="44" viewBox="0 0 20 44" fill="none" stroke="#8e98a4" stroke-width="3.6" stroke-linecap="round" stroke-linejoin="round"><path d="M10 3.500 V40.500 M2.500 11 L10 3.200 L17.500 11 M2.500 33 L10 40.800 L17.500 33"/></svg>
<span class="t" style="left:2363.5px;top:1168.02px;font-size:25.74px;color:#a0aab6;-webkit-text-stroke:0.3px #a0aab6;transform:scaleX(0.9697);">Scrollable</span>
<svg class="b" style="left:2479.2px;top:1169.2px;" width="23" height="23" viewBox="0 0 23 23" fill="none" stroke="#5d6773" stroke-width="2" stroke-linecap="round" stroke-linejoin="round"><circle cx="11.5" cy="11.5" r="10.4"/><path d="M11.5 10.7 v5.98" stroke-width="2.4"/><circle cx="11.5" cy="5.98" r="1.5" fill="#5d6773" stroke="none"/></svg>
<svg class="b" style="left:2371.6px;top:1215px;" width="44.5" height="44.5" viewBox="0 0 44.5 44.5" fill="none" stroke="#8e98a4" stroke-width="3" stroke-linecap="round" stroke-linejoin="round"><rect x="1.600" y="1.600" width="41" height="41" rx="9.500"/><path d="M15.300 15.800 L28.500 29 M28.500 15.800 L15.300 29" stroke-width="3.400"/></svg>
<svg class="b" style="left:2443.5px;top:1215px;" width="44.8" height="44.8" viewBox="0 0 44.8 44.8" fill="none" stroke="#fff" stroke-width="3.2" stroke-linecap="round" stroke-linejoin="round"><rect x="1.800" y="1.800" width="40.800" height="40.800" rx="9.500"/><path d="M8.500 22 H35.500 M15 15 L8 22 L15 29 M29 15 L36 22 L29 29" stroke-width="3.400"/></svg>
<span class="t" style="left:2363.5px;top:1279.52px;font-size:25.74px;color:#a0aab6;-webkit-text-stroke:0.3px #a0aab6;transform:scaleX(0.9743);">Items Spacing</span>
<svg class="b" style="left:2528.9px;top:1281.5px;" width="23" height="23" viewBox="0 0 23 23" fill="none" stroke="#5d6773" stroke-width="2" stroke-linecap="round" stroke-linejoin="round"><circle cx="11.5" cy="11.5" r="10.4"/><path d="M11.5 10.7 v5.98" stroke-width="2.4"/><circle cx="11.5" cy="5.98" r="1.5" fill="#5d6773" stroke="none"/></svg>
<svg class="b" style="left:2567px;top:1281.8px;" width="27" height="25" viewBox="0 0 27 25" fill="none" stroke="#d9895f" stroke-width="2.2" stroke-linecap="round" stroke-linejoin="round"><circle cx="5.2" cy="5.4" r="3.7"/><path d="M14.5 5.4 H25"/><circle cx="21.2" cy="19.6" r="3.7"/><path d="M1.5 19.6 H12"/></svg>
<span class="t" style="left:2639.7px;top:1279.52px;font-size:25.74px;color:#a0aab6;-webkit-text-stroke:0.3px #a0aab6;transform:scaleX(0.9751);">Apply to Start &amp; End</span>
<svg class="b" style="left:2871px;top:1281.5px;" width="23" height="23" viewBox="0 0 23 23" fill="none" stroke="#5d6773" stroke-width="2" stroke-linecap="round" stroke-linejoin="round"><circle cx="11.5" cy="11.5" r="10.4"/><path d="M11.5 10.7 v5.98" stroke-width="2.4"/><circle cx="11.5" cy="5.98" r="1.5" fill="#5d6773" stroke="none"/></svg>
<div class="b" style="left:2364.6px;top:1317.4px;width:239.3px;height:63.5px;border-radius:19px;border:2px solid #848e99;"></div>
<span class="t" style="left:2387.95px;top:1336.67px;font-size:24.39px;color:#fff;-webkit-text-stroke:0.7px #fff;transform:scaleX(1.0202);">10</span>
<div class="b" style="left:2415.2px;top:1331.6px;width:3px;height:35px;background:#8c96a1;border-radius:1.5px;"></div>
<div class="b" style="left:2640px;top:1325px;width:84px;height:48.5px;border-radius:24.5px;border:2px solid #323944;"></div>
<div class="b" style="left:2643px;top:1327.5px;width:44px;height:44px;background:#343b46;border-radius:22px;"></div>
<span class="t" style="left:2363.5px;top:1399.62px;font-size:25.74px;color:#a0aab6;-webkit-text-stroke:0.3px #a0aab6;transform:scaleX(0.9766);">Start Spacing</span>
<svg class="b" style="left:2521px;top:1401.5px;" width="23" height="23" viewBox="0 0 23 23" fill="none" stroke="#5d6773" stroke-width="2" stroke-linecap="round" stroke-linejoin="round"><circle cx="11.5" cy="11.5" r="10.4"/><path d="M11.5 10.7 v5.98" stroke-width="2.4"/><circle cx="11.5" cy="5.98" r="1.5" fill="#5d6773" stroke="none"/></svg>
<svg class="b" style="left:2559.5px;top:1401.8px;" width="27" height="25" viewBox="0 0 27 25" fill="none" stroke="#d9895f" stroke-width="2.2" stroke-linecap="round" stroke-linejoin="round"><circle cx="5.2" cy="5.4" r="3.7"/><path d="M14.5 5.4 H25"/><circle cx="21.2" cy="19.6" r="3.7"/><path d="M1.5 19.6 H12"/></svg>
<span class="t" style="left:2652.1px;top:1399.62px;font-size:25.74px;color:#a0aab6;-webkit-text-stroke:0.3px #a0aab6;transform:scaleX(0.9490);">End Spacing</span>
<svg class="b" style="left:2797px;top:1401.5px;" width="23" height="23" viewBox="0 0 23 23" fill="none" stroke="#5d6773" stroke-width="2" stroke-linecap="round" stroke-linejoin="round"><circle cx="11.5" cy="11.5" r="10.4"/><path d="M11.5 10.7 v5.98" stroke-width="2.4"/><circle cx="11.5" cy="5.98" r="1.5" fill="#5d6773" stroke="none"/></svg>
<svg class="b" style="left:2835px;top:1401.8px;" width="27" height="25" viewBox="0 0 27 25" fill="none" stroke="#d9895f" stroke-width="2.2" stroke-linecap="round" stroke-linejoin="round"><circle cx="5.2" cy="5.4" r="3.7"/><path d="M14.5 5.4 H25"/><circle cx="21.2" cy="19.6" r="3.7"/><path d="M1.5 19.6 H12"/></svg>
<div class="b" style="left:2364.6px;top:1437.2px;width:263.2px;height:64px;border-radius:19px;border:2px solid #323944;"></div>
<div class="b" style="left:2652.3px;top:1437.2px;width:263.7px;height:64px;border-radius:19px;border:2px solid #323944;"></div>
<div class="b" style="left:2804px;top:1528.8px;width:96px;height:96px;background:#4838e8;border-radius:48px;box-shadow:0 4px 18px rgba(0,0,0,.35);"></div>
<svg class="b" style="left:2831px;top:1553px;" width="43.5" height="48.5" viewBox="0 0 43.5 48.5" fill="none" stroke="#fff" stroke-width="0" stroke-linecap="round" stroke-linejoin="round"><path d="M4 0 H40.500 a2.500 2.500 0 0 1 2.500 2.500 V48 L30 42 H4 a4 4 0 0 1 -4 -4 V4 a4 4 0 0 1 4 -4 Z" fill="#fff" stroke="none"/><path d="M7.500 30.500 C16 36 27 36 35.500 30.500" stroke="#4838e8" stroke-width="2.800" fill="none"/></svg>
<div class="b" style="left:0px;top:0px;width:2939px;height:3px;background:linear-gradient(#f7fafb,#e8eef1);"></div>
<div class="b" style="left:0px;top:3px;width:2939px;height:1px;background:#07090c;"></div>
</body></html>
